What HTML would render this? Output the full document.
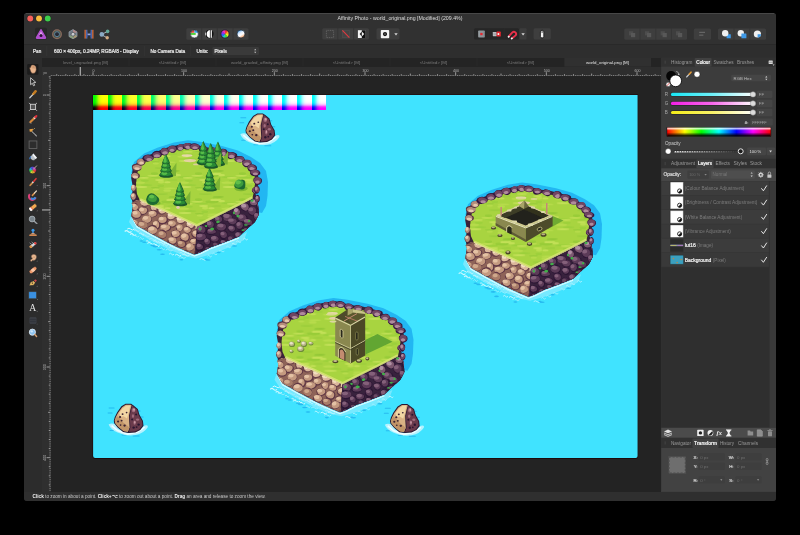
<!DOCTYPE html>
<html><head><meta charset="utf-8"><title>Affinity Photo</title>
<style>
*{margin:0;padding:0;box-sizing:border-box}
html,body{width:800px;height:535px;background:#000;overflow:hidden;font-family:"Liberation Sans",sans-serif;}
.a{position:absolute}
#win{position:absolute;left:24px;top:13px;width:752px;height:487.6px;background:#2b2b2b;border-radius:3px;overflow:hidden}
#abs{position:absolute;left:0;top:0;width:800px;height:535px;filter:blur(.3px)}
.t{position:absolute;white-space:nowrap;color:#d8d8d8;font-size:5px;line-height:6px}
svg{position:absolute;overflow:visible}
</style></head><body>
<div id="win"></div>
<div id="abs">

<div class="a" style="left:24px;top:13px;width:752px;height:31px;background:#313131;border-radius:3px 3px 0 0"></div>
<div class="a" style="left:26px;top:13px;width:748px;height:0.7px;background:#474747;"></div>
<div class="a" style="left:24px;top:44px;width:752px;height:13.5px;background:#2e2e2e;"></div>
<div class="a" style="left:24px;top:43.7px;width:752px;height:0.7px;background:#292929;"></div>
<div class="a" style="left:41.6px;top:57.5px;width:620px;height:9px;background:#242424;"></div>
<div class="a" style="left:24px;top:57.5px;width:17.6px;height:434.1px;background:#2c2c2c;"></div>
<div class="a" style="left:41.6px;top:66.5px;width:620px;height:9.3px;background:#2e2e2e;"></div>
<div class="a" style="left:41.6px;top:66.5px;width:8.9px;height:425.1px;background:#2f2f2f;"></div>
<div class="a" style="left:50.5px;top:75.8px;width:611px;height:415.8px;background:#232323;"></div>
<div class="a" style="left:661px;top:57.5px;width:115px;height:434.1px;background:#3b3b3b;"></div>
<div class="a" style="left:24px;top:491.6px;width:752px;height:9px;background:#2f2f2f;border-radius:0 0 3px 3px"></div>
<svg width="800" height="535" viewBox="0 0 800 535" style="left:0;top:0">
<defs><clipPath id="imgclip"><path d="M93.1 95.1H637.6V455.9Q637.6 457.9 635.6 457.9H95.1Q93.1 457.9 93.1 455.9Z"/></clipPath>
<linearGradient id="lr" x1="0" x2="1" y1="0" y2="0"><stop offset="0.03" stop-color="#000"/><stop offset="0.97" stop-color="#f00"/></linearGradient>
<linearGradient id="lg" x1="0" x2="0" y1="1" y2="0"><stop offset="0.03" stop-color="#000"/><stop offset="0.97" stop-color="#0f0"/></linearGradient>
<pattern id="grs" width="44" height="26" patternUnits="userSpaceOnUse"><ellipse cx="35.2" cy="8.5" rx="3.8" ry="1.3" fill="#b8dc4c"/><ellipse cx="12.9" cy="-1.2" rx="4.0" ry="1.0" fill="#9cd03a"/><ellipse cx="12.9" cy="24.8" rx="4.0" ry="1.0" fill="#9cd03a"/><ellipse cx="29.1" cy="0.1" rx="3.1" ry="1.3" fill="#bcde50"/><ellipse cx="29.1" cy="26.1" rx="3.1" ry="1.3" fill="#bcde50"/><ellipse cx="7.6" cy="21.1" rx="7.0" ry="0.9" fill="#9cd03a"/><ellipse cx="51.6" cy="21.1" rx="7.0" ry="0.9" fill="#9cd03a"/><ellipse cx="14.6" cy="3.1" rx="6.1" ry="1.0" fill="#9cd03a"/><ellipse cx="9.0" cy="5.0" rx="6.4" ry="1.1" fill="#c2e056"/><ellipse cx="-4.3" cy="15.5" rx="3.3" ry="1.2" fill="#9cd03a"/><ellipse cx="39.7" cy="15.5" rx="3.3" ry="1.2" fill="#9cd03a"/><ellipse cx="-0.8" cy="19.2" rx="4.3" ry="0.7" fill="#94c836"/><ellipse cx="43.2" cy="19.2" rx="4.3" ry="0.7" fill="#94c836"/><ellipse cx="25.4" cy="21.5" rx="6.9" ry="0.8" fill="#9cd03a"/><ellipse cx="27.6" cy="23.9" rx="4.4" ry="1.0" fill="#c2e056"/><ellipse cx="-7.6" cy="20.1" rx="6.0" ry="1.3" fill="#98cc38"/><ellipse cx="36.4" cy="20.1" rx="6.0" ry="1.3" fill="#98cc38"/><ellipse cx="23.4" cy="5.7" rx="4.6" ry="0.7" fill="#98cc38"/><ellipse cx="35.4" cy="0.3" rx="3.2" ry="1.0" fill="#c2e056"/><ellipse cx="35.4" cy="26.3" rx="3.2" ry="1.0" fill="#c2e056"/><ellipse cx="32.8" cy="19.8" rx="3.5" ry="1.3" fill="#98cc38"/><ellipse cx="-4.2" cy="17.9" rx="5.6" ry="1.2" fill="#c2e056"/><ellipse cx="39.8" cy="17.9" rx="5.6" ry="1.2" fill="#c2e056"/><ellipse cx="28.8" cy="3.8" rx="3.4" ry="1.2" fill="#9cd03a"/><ellipse cx="-3.7" cy="-2.0" rx="5.3" ry="0.6" fill="#98cc38"/><ellipse cx="-3.7" cy="24.0" rx="5.3" ry="0.6" fill="#98cc38"/><ellipse cx="40.3" cy="-2.0" rx="5.3" ry="0.6" fill="#98cc38"/><ellipse cx="40.3" cy="24.0" rx="5.3" ry="0.6" fill="#98cc38"/><ellipse cx="21.2" cy="19.8" rx="5.8" ry="0.8" fill="#c2e056"/><ellipse cx="29.3" cy="12.1" rx="6.9" ry="0.7" fill="#98cc38"/><ellipse cx="-6.4" cy="6.2" rx="6.1" ry="0.7" fill="#b8dc4c"/><ellipse cx="37.6" cy="6.2" rx="6.1" ry="0.7" fill="#b8dc4c"/><ellipse cx="7.2" cy="0.7" rx="5.7" ry="1.1" fill="#b8dc4c"/><ellipse cx="7.2" cy="26.7" rx="5.7" ry="1.1" fill="#b8dc4c"/><ellipse cx="51.2" cy="0.7" rx="5.7" ry="1.1" fill="#b8dc4c"/><ellipse cx="51.2" cy="26.7" rx="5.7" ry="1.1" fill="#b8dc4c"/><ellipse cx="-1.5" cy="15.0" rx="5.4" ry="0.9" fill="#94c836"/><ellipse cx="42.5" cy="15.0" rx="5.4" ry="0.9" fill="#94c836"/><ellipse cx="11.8" cy="21.8" rx="4.9" ry="0.9" fill="#c2e056"/><ellipse cx="23.8" cy="7.5" rx="3.1" ry="0.9" fill="#b8dc4c"/><ellipse cx="1.6" cy="19.1" rx="3.4" ry="1.2" fill="#c2e056"/><ellipse cx="45.6" cy="19.1" rx="3.4" ry="1.2" fill="#c2e056"/><ellipse cx="22.5" cy="17.6" rx="3.7" ry="1.3" fill="#98cc38"/></pattern>
<filter id="soft" x="-5%" y="-5%" width="110%" height="110%"><feGaussianBlur stdDeviation="0.45"/></filter></defs>
<path d="M92.6 94.6H638.1V456.4Q638.1 458.7 635.8 458.7H94.9Q92.6 458.7 92.6 456.4Z" fill="#1a0608"/>
<g clip-path="url(#imgclip)">
<rect x="92" y="94" width="547" height="366" fill="#40e3ff"/>
<g filter="url(#soft)">
<g id="isl">
<g transform="translate(0,0)">
<polygon points="131.0,174.0 134.0,162.0 144.0,153.5 158.0,147.5 174.0,142.5 188.0,140.2 202.0,142.0 222.0,146.0 238.0,150.5 251.0,157.0 260.0,163.0 266.0,171.0 268.0,182.0 267.5,196.0 266.0,206.0 262.0,213.0 257.0,212.0 255.0,200.0 255.0,180.0 240.0,160.0 200.0,150.0 160.0,153.0 140.0,163.0" fill="#22b6f2" />
<path d="M131 216 L129 222 L135 231 L150 240 L168 249 L186 256.5 L196 258.5 L212 254 L230 247 L244 240 L247 232 L239 236.5 L225 242 L210 247.5 L195 254.5 L175 246 L152 234 L137 225.5Z" fill="#9cedfe" opacity="0.6"/>
<path d="M127.2 229.1 q1.8 -1.8 3.6 0 t3.6 0" fill="none" stroke="#d0f9ff" stroke-width="1.0"/>
<path d="M124.7 231.5 q1.7 -1.8 3.4 0 t3.4 0" fill="none" stroke="#d0f9ff" stroke-width="1.1"/>
<path d="M134.4 230.7 q1.3 -1.8 2.5 0 t2.5 0" fill="none" stroke="#b4f3ff" stroke-width="1.0"/>
<path d="M130.2 234.6 q1.5 -1.8 3.0 0 t3.0 0" fill="none" stroke="#d0f9ff" stroke-width="1.2"/>
<path d="M139.4 233.9 q1.1 -1.8 2.3 0 t2.3 0" fill="none" stroke="#b4f3ff" stroke-width="1.1"/>
<path d="M132.3 236.0 q1.8 -1.8 3.5 0 t3.5 0" fill="none" stroke="#a0effe" stroke-width="0.8"/>
<path d="M142.7 236.0 q1.7 -1.8 3.5 0 t3.5 0" fill="none" stroke="#a0effe" stroke-width="0.9"/>
<path d="M139.5 238.3 q1.1 -1.8 2.1 0 t2.1 0" fill="none" stroke="#a0effe" stroke-width="0.9"/>
<path d="M149.4 239.2 q1.7 -1.8 3.5 0 t3.5 0" fill="none" stroke="#a0effe" stroke-width="0.9"/>
<path d="M146.1 241.5 q1.0 -1.8 2.1 0 t2.1 0" fill="none" stroke="#a0effe" stroke-width="1.1"/>
<path d="M153.5 241.4 q1.3 -1.8 2.7 0 t2.7 0" fill="none" stroke="#b4f3ff" stroke-width="1.1"/>
<path d="M147.4 243.4 q1.8 -1.8 3.6 0 t3.6 0" fill="none" stroke="#d0f9ff" stroke-width="1.0"/>
<path d="M159.2 243.1 q1.5 -1.8 3.0 0 t3.0 0" fill="none" stroke="#b4f3ff" stroke-width="1.1"/>
<path d="M154.3 245.5 q1.3 -1.8 2.6 0 t2.6 0" fill="none" stroke="#d0f9ff" stroke-width="1.1"/>
<path d="M163.3 245.1 q1.1 -1.8 2.2 0 t2.2 0" fill="none" stroke="#b4f3ff" stroke-width="1.0"/>
<path d="M160.3 248.8 q1.2 -1.8 2.3 0 t2.3 0" fill="none" stroke="#a0effe" stroke-width="0.9"/>
<path d="M169.3 247.3 q1.6 -1.8 3.1 0 t3.1 0" fill="none" stroke="#b4f3ff" stroke-width="1.0"/>
<path d="M165.7 250.1 q1.8 -1.8 3.5 0 t3.5 0" fill="none" stroke="#a0effe" stroke-width="0.9"/>
<path d="M175.3 249.8 q1.3 -1.8 2.7 0 t2.7 0" fill="none" stroke="#a0effe" stroke-width="1.1"/>
<path d="M169.2 254.1 q1.2 -1.8 2.4 0 t2.4 0" fill="none" stroke="#d0f9ff" stroke-width="0.8"/>
<path d="M179.6 253.2 q1.3 -1.8 2.7 0 t2.7 0" fill="none" stroke="#b4f3ff" stroke-width="0.8"/>
<path d="M175.1 255.2 q1.5 -1.8 3.1 0 t3.1 0" fill="none" stroke="#d0f9ff" stroke-width="1.0"/>
<path d="M182.4 255.1 q1.7 -1.8 3.5 0 t3.5 0" fill="none" stroke="#b4f3ff" stroke-width="1.1"/>
<path d="M178.5 257.4 q1.8 -1.8 3.6 0 t3.6 0" fill="none" stroke="#a0effe" stroke-width="0.9"/>
<path d="M199.7 259.4 q1.7 -1.6 3.4 0 t3.4 0" fill="none" stroke="#b0f2ff" stroke-width="1.0"/>
<path d="M207.5 256.1 q1.1 -1.6 2.1 0 t2.1 0" fill="none" stroke="#b0f2ff" stroke-width="0.8"/>
<path d="M212.3 254.0 q1.2 -1.6 2.4 0 t2.4 0" fill="none" stroke="#9ceefe" stroke-width="0.9"/>
<path d="M219.0 251.1 q1.4 -1.6 2.7 0 t2.7 0" fill="none" stroke="#9ceefe" stroke-width="0.9"/>
<path d="M226.3 246.9 q1.2 -1.6 2.3 0 t2.3 0" fill="none" stroke="#9ceefe" stroke-width="1.0"/>
<path d="M232.0 244.0 q1.2 -1.6 2.3 0 t2.3 0" fill="none" stroke="#b0f2ff" stroke-width="1.0"/>
<path d="M236.3 241.7 q1.2 -1.6 2.4 0 t2.4 0" fill="none" stroke="#b0f2ff" stroke-width="0.9"/>
<path d="M243.4 239.1 q1.1 -1.6 2.2 0 t2.2 0" fill="none" stroke="#ccf8ff" stroke-width="0.8"/>
<polyline points="132.5,218 137,227 152,235.5 165,242.5 175,247.5 186,252.5 194.5,256 201,253.5 210,249 225,243.5 239,238" fill="none" stroke="#dcfbff" stroke-width="1.1" stroke-linejoin="round"/>
<ellipse cx="159.2" cy="249.7" rx="2.6" ry="0.8" fill="#27baf0"/>
<ellipse cx="162.5" cy="254.2" rx="2.4" ry="0.8" fill="#27baf0"/>
<ellipse cx="181.4" cy="259.8" rx="2.0" ry="0.8" fill="#27baf0"/>
<ellipse cx="152.7" cy="245.5" rx="2.4" ry="0.8" fill="#27baf0"/>
<ellipse cx="141.5" cy="241.0" rx="2.0" ry="0.8" fill="#27baf0"/>
<ellipse cx="144.4" cy="242.2" rx="2.2" ry="0.8" fill="#27baf0"/>
<ellipse cx="155.3" cy="246.6" rx="2.9" ry="0.8" fill="#27baf0"/>
<ellipse cx="234.5" cy="246.0" rx="2.6" ry="0.8" fill="#27baf0"/>
<ellipse cx="218.7" cy="252.5" rx="2.0" ry="0.8" fill="#27baf0"/>
<ellipse cx="208.1" cy="260.0" rx="2.5" ry="0.8" fill="#27baf0"/>
<ellipse cx="206.2" cy="259.4" rx="1.5" ry="0.8" fill="#27baf0"/>
<polygon points="131.2,178.0 133.0,168.0 139.0,160.0 147.0,156.0 156.0,152.0 163.0,149.0 170.5,146.5 179.0,145.0 187.5,143.4 194.0,144.5 199.0,145.6 207.0,147.5 216.0,148.5 225.5,151.0 233.0,153.0 240.0,157.5 246.0,160.0 251.0,165.0 256.0,169.0 258.0,175.0 259.0,181.5 257.0,189.0 255.0,196.0 258.0,205.0 259.0,214.0 255.0,222.0 247.0,229.0 239.0,236.5 225.0,242.0 210.0,247.5 201.0,252.0 194.0,254.5 186.0,251.0 175.0,246.0 165.0,241.0 152.0,234.0 137.0,225.5 131.2,216.0 133.0,206.0 131.5,197.0 133.0,188.0" fill="#3a2238" />
<clipPath id="lc1"><polygon points="131.4,203 136,200.5 140,200 152,204.5 168,211.5 183,218.5 197,225 195,254.5 186,251 175,246 165,241 152,234 137,225.5 131.2,216 133,206"/></clipPath>
<clipPath id="rc1"><polygon points="197,225 210,218.5 225,211 240,203.5 252.5,197 256,194 258,205 259,214 255,222 247,229 239,236.5 225,242 210,247.5 201,252 195,254.5"/></clipPath>
<clipPath id="gr1"><polygon points="136.8,176 138.5,168 143,162.5 150,159 158,155.5 166,152.5 173,150 181,148.5 188,147.5 195,148 203,150 212,151.5 222,153.5 230,156 238,160 245,163.5 250,168 253.5,173 255.5,181 254,190 252.5,198.5 240,205 225,212.5 210,220 197,226.5 183,220 168,213 152,206 140,200.5 137,194 136,186"/></clipPath>
<polygon points="131.4,203.0 136.0,200.5 140.0,200.0 152.0,204.5 168.0,211.5 183.0,218.5 197.0,225.0 195.0,254.5 186.0,251.0 175.0,246.0 165.0,241.0 152.0,234.0 137.0,225.5 131.2,216.0 133.0,206.0" fill="#8e6458" />
<g clip-path="url(#lc1)">
<path d="M139.6 196.3Q140.2 198.4 139.0 200.0Q137.8 201.6 135.5 201.5Q133.1 201.5 132.2 199.6Q131.2 197.7 132.4 195.6Q133.5 193.5 136.2 193.9Q139.0 194.2 139.6 196.3Z" fill="#6a4048"/>
<path d="M139.2 197.7Q139.6 199.3 137.8 200.3Q136.1 201.3 134.2 200.5Q132.2 199.7 132.1 198.0Q131.9 196.2 133.7 195.4Q135.5 194.5 137.2 195.3Q138.8 196.1 139.2 197.7Z" fill="#dcb89c"/>
<path d="M136.9 195.9Q138.2 196.9 136.8 197.7Q135.4 198.5 133.7 198.3Q132.0 198.1 132.1 196.8Q132.2 195.5 134.0 195.2Q135.7 194.9 136.9 195.9Z" fill="#f2dcc0"/>
<path d="M150.2 203.1Q150.2 205.2 147.5 206.3Q144.7 207.5 142.4 205.9Q140.1 204.4 139.8 202.1Q139.5 199.7 142.7 199.0Q145.8 198.3 148.0 199.6Q150.2 201.0 150.2 203.1Z" fill="#6a4048"/>
<path d="M149.2 202.1Q149.5 203.7 147.7 204.9Q145.8 206.1 143.2 205.5Q140.5 204.8 140.2 202.8Q139.9 200.9 142.3 200.1Q144.6 199.2 146.8 199.9Q148.9 200.5 149.2 202.1Z" fill="#dcb89c"/>
<path d="M146.9 200.6Q147.9 201.9 146.0 202.6Q144.1 203.2 142.6 202.7Q141.0 202.1 141.3 201.0Q141.6 199.9 143.8 199.6Q145.9 199.3 146.9 200.6Z" fill="#f2dcc0"/>
<path d="M157.3 207.8Q156.5 210.1 154.6 210.9Q152.7 211.8 150.9 209.9Q149.1 208.1 149.8 205.1Q150.6 202.2 152.9 202.0Q155.2 201.7 156.7 203.6Q158.2 205.4 157.3 207.8Z" fill="#6a4048"/>
<path d="M157.0 207.2Q156.9 209.4 155.1 210.4Q153.2 211.4 151.7 209.7Q150.3 208.1 150.7 206.0Q151.1 203.8 152.8 202.7Q154.4 201.5 155.7 203.2Q157.0 204.9 157.0 207.2Z" fill="#dcb89c"/>
<path d="M155.1 205.1Q155.1 206.7 153.7 207.0Q152.2 207.4 151.4 206.3Q150.5 205.2 151.3 203.8Q152.0 202.5 153.5 203.0Q155.0 203.5 155.1 205.1Z" fill="#f2dcc0"/>
<path d="M166.2 211.5Q165.7 213.5 163.2 214.5Q160.6 215.4 158.4 213.7Q156.2 212.0 156.8 209.5Q157.4 207.0 160.3 206.9Q163.3 206.9 165.0 208.2Q166.7 209.6 166.2 211.5Z" fill="#6a4048"/>
<path d="M166.0 210.6Q166.3 212.3 164.1 213.1Q161.9 213.9 160.2 212.9Q158.5 211.9 158.4 210.3Q158.4 208.7 160.2 207.5Q162.1 206.3 163.9 207.6Q165.8 208.8 166.0 210.6Z" fill="#dcb89c"/>
<path d="M163.7 209.5Q163.5 210.9 161.5 211.1Q159.5 211.4 158.8 210.3Q158.1 209.2 159.1 208.4Q160.1 207.5 162.0 207.9Q163.9 208.2 163.7 209.5Z" fill="#f2dcc0"/>
<path d="M175.6 217.9Q173.8 219.8 171.2 220.4Q168.5 221.1 167.0 218.8Q165.6 216.5 167.1 214.5Q168.7 212.5 171.1 212.3Q173.6 212.0 175.5 214.0Q177.3 215.9 175.6 217.9Z" fill="#6a4048"/>
<path d="M175.1 215.4Q175.3 217.4 173.5 218.4Q171.7 219.4 169.4 219.1Q167.0 218.7 167.4 216.7Q167.7 214.7 169.1 213.3Q170.5 212.0 172.7 212.7Q175.0 213.4 175.1 215.4Z" fill="#dcb89c"/>
<path d="M172.5 214.8Q173.1 216.1 171.3 216.5Q169.4 216.9 168.3 216.0Q167.1 215.1 167.7 213.7Q168.4 212.3 170.2 212.9Q171.9 213.5 172.5 214.8Z" fill="#f2dcc0"/>
<path d="M185.6 217.8Q186.3 220.5 184.7 222.6Q183.1 224.7 180.5 224.1Q177.8 223.6 176.6 221.4Q175.3 219.3 176.7 216.7Q178.1 214.1 181.6 214.6Q185.0 215.0 185.6 217.8Z" fill="#6a4048"/>
<path d="M185.2 218.8Q186.1 220.9 184.0 222.0Q181.9 223.2 179.5 223.0Q177.1 222.8 176.9 220.8Q176.6 218.7 178.1 217.2Q179.5 215.7 181.9 216.2Q184.3 216.7 185.2 218.8Z" fill="#dcb89c"/>
<path d="M182.2 217.9Q183.4 219.2 181.5 219.9Q179.6 220.7 177.6 220.0Q175.6 219.4 176.5 217.9Q177.3 216.4 179.2 216.6Q181.0 216.7 182.2 217.9Z" fill="#f2dcc0"/>
<path d="M195.8 224.1Q196.1 227.2 193.4 228.8Q190.8 230.4 188.4 228.9Q186.0 227.3 185.7 224.5Q185.4 221.7 187.8 220.4Q190.2 219.1 192.9 220.1Q195.5 221.0 195.8 224.1Z" fill="#6a4048"/>
<path d="M194.5 224.3Q194.4 226.6 192.3 227.8Q190.1 228.9 188.2 227.4Q186.4 226.0 186.4 223.8Q186.5 221.6 188.6 220.4Q190.6 219.2 192.6 220.6Q194.5 222.1 194.5 224.3Z" fill="#dcb89c"/>
<path d="M191.6 221.7Q192.3 223.2 191.0 224.5Q189.7 225.7 188.2 224.8Q186.7 223.8 186.8 222.3Q186.8 220.9 188.9 220.5Q190.9 220.1 191.6 221.7Z" fill="#f2dcc0"/>
<path d="M204.6 227.0Q206.1 228.9 204.1 230.5Q202.1 232.1 199.3 232.0Q196.4 231.8 195.4 229.7Q194.3 227.6 196.2 226.0Q198.1 224.5 200.6 224.9Q203.1 225.2 204.6 227.0Z" fill="#6a4048"/>
<path d="M204.2 227.7Q204.8 229.4 202.7 230.2Q200.6 231.1 198.0 230.9Q195.3 230.6 195.2 228.6Q195.1 226.6 197.1 225.1Q199.1 223.6 201.3 224.8Q203.5 225.9 204.2 227.7Z" fill="#dcb89c"/>
<path d="M201.0 225.9Q201.7 227.1 200.6 228.2Q199.6 229.4 197.6 228.7Q195.6 228.0 195.6 226.6Q195.5 225.2 197.9 224.9Q200.2 224.7 201.0 225.9Z" fill="#f2dcc0"/>
<path d="M138.3 208.7Q138.0 211.1 135.3 211.5Q132.6 211.9 131.2 209.7Q129.9 207.6 131.0 205.7Q132.1 203.8 134.2 203.2Q136.3 202.7 137.4 204.5Q138.5 206.3 138.3 208.7Z" fill="#5e3644"/>
<path d="M137.9 205.9Q138.7 207.7 137.2 209.3Q135.7 210.9 133.9 209.9Q132.1 208.9 131.6 207.3Q131.1 205.8 132.4 204.7Q133.6 203.6 135.4 203.9Q137.1 204.2 137.9 205.9Z" fill="#c49a80"/>
<path d="M135.8 205.6Q135.4 206.9 133.9 207.3Q132.4 207.6 131.5 206.5Q130.7 205.4 131.8 204.4Q132.9 203.4 134.5 203.8Q136.2 204.3 135.8 205.6Z" fill="#e4c2a4"/>
<path d="M147.7 212.1Q146.1 214.2 143.6 215.1Q141.1 216.0 139.1 214.0Q137.1 211.9 138.3 209.4Q139.5 206.9 142.3 206.5Q145.1 206.2 147.2 208.1Q149.3 210.0 147.7 212.1Z" fill="#5e3644"/>
<path d="M147.2 210.5Q146.7 212.6 144.9 213.6Q143.0 214.5 140.9 213.6Q138.9 212.8 138.9 210.7Q138.9 208.6 141.0 207.8Q143.1 207.1 145.4 207.8Q147.8 208.4 147.2 210.5Z" fill="#c49a80"/>
<path d="M144.2 209.6Q144.3 210.9 142.6 211.2Q141.0 211.5 139.7 210.5Q138.4 209.5 139.6 208.2Q140.7 206.9 142.4 207.6Q144.1 208.3 144.2 209.6Z" fill="#e4c2a4"/>
<path d="M157.3 215.1Q155.9 216.9 153.5 217.2Q151.0 217.4 149.1 216.0Q147.2 214.6 148.2 212.6Q149.2 210.7 152.2 209.9Q155.2 209.2 156.9 211.3Q158.6 213.3 157.3 215.1Z" fill="#5e3644"/>
<path d="M156.6 214.2Q156.1 215.8 153.9 216.6Q151.7 217.4 149.6 216.2Q147.4 215.0 148.4 213.4Q149.4 211.8 151.5 210.9Q153.6 210.1 155.3 211.4Q157.1 212.6 156.6 214.2Z" fill="#c49a80"/>
<path d="M154.3 212.9Q153.6 214.2 151.6 214.4Q149.6 214.7 148.7 213.5Q147.8 212.3 149.4 211.6Q151.0 210.8 153.0 211.3Q155.1 211.7 154.3 212.9Z" fill="#e4c2a4"/>
<path d="M167.3 218.2Q169.2 220.1 167.5 222.2Q165.7 224.3 162.5 224.5Q159.2 224.7 158.1 222.2Q156.9 219.8 158.6 218.0Q160.3 216.2 162.8 216.3Q165.4 216.4 167.3 218.2Z" fill="#5e3644"/>
<path d="M166.6 218.4Q167.1 220.3 165.7 221.7Q164.3 223.1 161.7 223.0Q159.2 222.9 158.4 220.9Q157.5 219.0 159.3 217.7Q161.2 216.5 163.7 216.5Q166.2 216.5 166.6 218.4Z" fill="#c49a80"/>
<path d="M163.4 217.7Q164.3 218.7 163.2 219.7Q162.1 220.7 160.3 220.2Q158.5 219.7 158.6 218.4Q158.8 217.2 160.7 216.9Q162.5 216.7 163.4 217.7Z" fill="#e4c2a4"/>
<path d="M175.8 223.2Q176.7 225.0 175.1 226.5Q173.5 228.0 171.2 227.6Q168.8 227.2 167.6 225.2Q166.3 223.2 168.3 221.5Q170.3 219.9 172.6 220.6Q174.8 221.4 175.8 223.2Z" fill="#5e3644"/>
<path d="M175.7 224.5Q174.7 226.2 172.8 226.5Q170.9 226.7 169.1 225.8Q167.2 224.9 167.9 223.0Q168.5 221.1 170.8 220.6Q173.2 220.0 174.9 221.5Q176.7 222.9 175.7 224.5Z" fill="#c49a80"/>
<path d="M172.9 222.8Q173.0 223.9 171.5 224.4Q170.0 224.9 169.0 224.0Q168.0 223.0 168.8 221.9Q169.6 220.8 171.2 221.3Q172.9 221.8 172.9 222.8Z" fill="#e4c2a4"/>
<path d="M182.9 229.5Q182.1 231.3 180.1 231.6Q178.1 232.0 176.7 230.3Q175.2 228.7 176.2 226.7Q177.2 224.8 179.4 224.5Q181.5 224.2 182.6 226.0Q183.7 227.7 182.9 229.5Z" fill="#5e3644"/>
<path d="M182.8 226.7Q183.0 228.6 182.0 230.1Q181.0 231.7 179.1 231.1Q177.3 230.4 176.9 228.9Q176.5 227.3 177.4 225.7Q178.3 224.0 180.5 224.4Q182.7 224.8 182.8 226.7Z" fill="#c49a80"/>
<path d="M180.5 227.3Q180.0 228.3 178.7 228.4Q177.4 228.5 176.5 227.4Q175.7 226.2 177.2 225.6Q178.6 225.0 179.8 225.6Q180.9 226.3 180.5 227.3Z" fill="#e4c2a4"/>
<path d="M191.7 230.3Q192.0 232.3 189.8 233.1Q187.7 234.0 185.7 233.0Q183.8 232.0 183.6 230.1Q183.4 228.1 185.5 226.9Q187.6 225.7 189.5 227.0Q191.4 228.2 191.7 230.3Z" fill="#5e3644"/>
<path d="M190.5 228.9Q191.4 230.2 190.3 231.6Q189.2 233.0 187.1 232.9Q184.9 232.7 183.9 231.1Q182.8 229.5 184.2 228.0Q185.7 226.5 187.6 227.0Q189.6 227.5 190.5 228.9Z" fill="#c49a80"/>
<path d="M188.5 228.3Q189.0 229.4 187.8 230.1Q186.6 230.8 185.1 230.2Q183.6 229.7 184.1 228.5Q184.6 227.4 186.3 227.3Q188.0 227.2 188.5 228.3Z" fill="#e4c2a4"/>
<path d="M202.0 234.3Q201.8 236.7 199.0 237.7Q196.2 238.8 193.4 237.4Q190.6 235.9 191.5 233.5Q192.4 231.0 195.1 229.6Q197.7 228.3 200.0 230.1Q202.2 232.0 202.0 234.3Z" fill="#5e3644"/>
<path d="M200.8 235.2Q200.1 237.1 197.3 237.1Q194.6 237.1 193.1 235.5Q191.5 233.8 192.8 232.1Q194.0 230.4 196.5 230.2Q199.0 230.0 200.3 231.6Q201.5 233.2 200.8 235.2Z" fill="#c49a80"/>
<path d="M198.3 231.8Q198.5 233.2 196.8 234.0Q195.2 234.7 193.6 233.8Q192.1 232.9 193.0 231.8Q193.8 230.6 196.0 230.5Q198.2 230.4 198.3 231.8Z" fill="#e4c2a4"/>
<path d="M141.6 214.9Q141.7 217.5 139.0 218.5Q136.3 219.5 133.7 218.2Q131.2 216.9 131.9 214.5Q132.6 212.1 134.8 210.8Q137.0 209.6 139.3 210.9Q141.6 212.2 141.6 214.9Z" fill="#5e3644"/>
<path d="M140.8 214.6Q141.0 216.7 138.6 217.4Q136.3 218.2 134.0 217.2Q131.7 216.3 132.2 214.2Q132.8 212.1 134.8 210.9Q136.9 209.6 138.7 211.1Q140.6 212.5 140.8 214.6Z" fill="#c49a80"/>
<path d="M137.6 213.2Q137.3 214.4 135.7 214.6Q134.1 214.9 132.8 213.7Q131.5 212.6 133.0 211.4Q134.5 210.2 136.2 211.1Q137.8 212.0 137.6 213.2Z" fill="#e4c2a4"/>
<path d="M151.4 217.5Q152.8 219.7 151.1 221.5Q149.3 223.4 146.2 223.8Q143.1 224.3 142.1 221.7Q141.0 219.2 142.7 217.3Q144.4 215.5 147.2 215.4Q150.1 215.4 151.4 217.5Z" fill="#5e3644"/>
<path d="M151.1 217.7Q151.9 219.8 150.4 221.5Q148.8 223.2 146.1 222.9Q143.3 222.6 142.2 220.6Q141.1 218.6 143.0 217.0Q144.9 215.5 147.6 215.6Q150.3 215.6 151.1 217.7Z" fill="#c49a80"/>
<path d="M148.1 218.2Q147.5 219.5 145.7 219.7Q143.8 219.9 143.0 218.8Q142.3 217.6 143.6 216.6Q144.9 215.6 146.8 216.3Q148.7 216.9 148.1 218.2Z" fill="#e4c2a4"/>
<path d="M160.2 224.0Q161.1 226.4 159.3 228.4Q157.5 230.4 155.0 229.6Q152.5 228.8 152.3 226.2Q152.0 223.6 153.6 221.9Q155.1 220.2 157.2 220.9Q159.4 221.6 160.2 224.0Z" fill="#5e3644"/>
<path d="M159.0 226.3Q158.5 228.2 156.4 228.5Q154.3 228.8 153.3 226.9Q152.4 225.0 153.0 223.0Q153.5 220.9 155.7 220.7Q157.9 220.6 158.7 222.4Q159.5 224.3 159.0 226.3Z" fill="#c49a80"/>
<path d="M157.0 222.5Q157.3 223.9 156.2 224.7Q155.2 225.4 153.9 224.8Q152.7 224.2 153.0 222.9Q153.4 221.6 155.1 221.4Q156.8 221.1 157.0 222.5Z" fill="#e4c2a4"/>
<path d="M170.6 229.4Q168.8 231.5 165.9 231.5Q162.9 231.6 161.3 229.8Q159.7 228.0 160.9 226.0Q162.1 224.0 164.9 224.1Q167.8 224.2 170.0 225.8Q172.3 227.4 170.6 229.4Z" fill="#5e3644"/>
<path d="M169.9 228.3Q168.9 230.1 166.3 230.8Q163.7 231.4 161.7 230.0Q159.6 228.5 160.5 226.5Q161.3 224.6 164.1 224.3Q166.8 224.0 168.8 225.3Q170.9 226.5 169.9 228.3Z" fill="#c49a80"/>
<path d="M166.5 226.1Q166.9 227.2 165.3 227.7Q163.8 228.3 161.9 227.7Q160.0 227.0 161.0 225.8Q162.0 224.6 164.1 224.8Q166.1 225.0 166.5 226.1Z" fill="#e4c2a4"/>
<path d="M180.7 234.6Q180.3 236.9 177.6 237.7Q174.9 238.5 172.7 237.1Q170.6 235.7 170.8 233.5Q170.9 231.3 173.6 230.5Q176.3 229.8 178.7 231.0Q181.0 232.3 180.7 234.6Z" fill="#5e3644"/>
<path d="M179.7 234.7Q178.8 236.4 176.4 237.1Q173.9 237.7 172.7 236.1Q171.5 234.5 171.9 233.0Q172.3 231.4 174.7 230.6Q177.1 229.8 178.8 231.4Q180.5 233.0 179.7 234.7Z" fill="#c49a80"/>
<path d="M176.8 233.0Q176.8 234.2 174.8 234.6Q172.8 235.0 171.9 233.8Q171.0 232.7 172.1 231.6Q173.2 230.5 175.0 231.1Q176.8 231.8 176.8 233.0Z" fill="#e4c2a4"/>
<path d="M189.9 236.4Q190.4 239.0 188.4 240.9Q186.4 242.8 183.4 242.1Q180.5 241.4 180.0 238.5Q179.6 235.6 181.9 234.1Q184.2 232.6 186.8 233.2Q189.4 233.8 189.9 236.4Z" fill="#5e3644"/>
<path d="M188.4 238.8Q187.7 240.7 185.4 240.7Q183.2 240.6 181.4 239.0Q179.5 237.4 180.9 235.3Q182.3 233.1 184.8 233.2Q187.3 233.2 188.2 235.1Q189.2 236.9 188.4 238.8Z" fill="#c49a80"/>
<path d="M186.4 236.0Q185.7 237.4 183.9 237.8Q182.2 238.2 181.4 236.8Q180.6 235.3 182.0 234.2Q183.5 233.0 185.3 233.8Q187.2 234.7 186.4 236.0Z" fill="#e4c2a4"/>
<path d="M197.9 242.0Q197.7 244.0 195.8 244.8Q193.8 245.6 191.7 244.7Q189.7 243.7 189.5 241.4Q189.4 239.0 191.9 238.0Q194.4 236.9 196.3 238.5Q198.1 240.0 197.9 242.0Z" fill="#5e3644"/>
<path d="M197.0 240.1Q197.7 241.7 196.7 243.1Q195.7 244.5 193.9 244.3Q192.0 244.0 190.6 242.7Q189.2 241.3 190.7 239.9Q192.1 238.4 194.2 238.4Q196.4 238.5 197.0 240.1Z" fill="#c49a80"/>
<path d="M195.1 240.1Q195.7 241.2 194.3 241.8Q192.9 242.5 191.6 241.8Q190.4 241.2 190.9 240.1Q191.4 239.1 192.9 239.1Q194.5 239.0 195.1 240.1Z" fill="#e4c2a4"/>
<path d="M205.2 247.3Q204.5 249.3 202.4 250.0Q200.3 250.7 198.9 249.0Q197.5 247.2 197.9 244.9Q198.3 242.6 200.6 242.4Q202.8 242.3 204.3 243.7Q205.8 245.2 205.2 247.3Z" fill="#5e3644"/>
<path d="M204.6 245.7Q205.4 247.3 203.8 248.3Q202.2 249.2 200.6 248.6Q199.1 247.9 198.6 246.3Q198.2 244.7 199.5 243.4Q200.9 242.1 202.4 243.1Q203.9 244.0 204.6 245.7Z" fill="#c49a80"/>
<path d="M202.3 245.0Q202.3 245.9 201.1 246.5Q199.8 247.1 198.7 246.1Q197.6 245.0 198.8 244.1Q199.9 243.1 201.1 243.6Q202.3 244.0 202.3 245.0Z" fill="#e4c2a4"/>
<path d="M137.4 222.5Q137.6 224.6 136.2 226.0Q134.8 227.3 132.5 227.1Q130.2 226.8 129.8 224.0Q129.4 221.2 131.5 220.0Q133.5 218.8 135.4 219.6Q137.2 220.5 137.4 222.5Z" fill="#5e3644"/>
<path d="M137.7 223.3Q137.3 225.5 135.5 226.1Q133.7 226.7 132.2 225.6Q130.8 224.5 130.9 222.5Q131.0 220.5 132.8 219.9Q134.5 219.3 136.2 220.2Q138.0 221.1 137.7 223.3Z" fill="#c49a80"/>
<path d="M135.5 221.4Q135.7 223.0 134.2 223.4Q132.8 223.9 131.9 223.0Q130.9 222.1 131.4 220.7Q131.8 219.4 133.5 219.6Q135.3 219.9 135.5 221.4Z" fill="#e4c2a4"/>
<path d="M147.3 224.4Q147.6 226.7 145.7 228.3Q143.8 229.9 141.0 229.3Q138.3 228.7 137.6 226.3Q137.0 223.8 139.2 222.3Q141.5 220.7 144.2 221.4Q147.0 222.1 147.3 224.4Z" fill="#5e3644"/>
<path d="M147.5 224.8Q147.7 227.0 145.3 228.0Q143.0 228.9 140.4 228.3Q137.9 227.7 137.6 225.4Q137.4 223.2 139.8 222.1Q142.2 221.0 144.7 221.8Q147.3 222.5 147.5 224.8Z" fill="#a87c68"/>
<path d="M144.3 223.9Q144.6 225.4 142.6 225.8Q140.5 226.2 139.3 225.2Q138.0 224.2 138.9 222.8Q139.8 221.5 141.9 222.0Q144.1 222.4 144.3 223.9Z" fill="#cfa88c"/>
<path d="M157.1 228.4Q157.4 231.0 155.9 233.3Q154.5 235.6 151.2 235.1Q147.9 234.6 147.1 231.7Q146.3 228.8 148.4 226.6Q150.6 224.5 153.7 225.1Q156.8 225.7 157.1 228.4Z" fill="#5e3644"/>
<path d="M156.5 228.3Q158.2 230.1 156.6 232.1Q155.0 234.2 152.1 234.0Q149.3 233.9 148.0 231.7Q146.7 229.5 148.5 227.7Q150.2 226.0 152.6 226.2Q154.9 226.5 156.5 228.3Z" fill="#c49a80"/>
<path d="M154.3 228.0Q154.7 229.7 152.8 230.3Q150.8 230.9 149.1 230.0Q147.4 229.1 148.5 227.9Q149.7 226.6 151.7 226.5Q153.8 226.3 154.3 228.0Z" fill="#e4c2a4"/>
<path d="M166.8 234.5Q166.8 236.7 164.7 238.3Q162.5 239.9 160.3 238.4Q158.0 236.9 158.0 234.6Q157.9 232.3 160.2 230.5Q162.4 228.7 164.7 230.5Q166.9 232.3 166.8 234.5Z" fill="#5e3644"/>
<path d="M166.1 233.2Q167.1 234.9 165.8 236.6Q164.4 238.4 161.9 238.1Q159.3 237.7 158.0 235.7Q156.7 233.7 158.5 232.0Q160.3 230.2 162.7 230.9Q165.0 231.5 166.1 233.2Z" fill="#a87c68"/>
<path d="M163.7 233.5Q163.7 234.8 161.6 235.1Q159.6 235.4 159.0 234.1Q158.3 232.9 159.4 232.0Q160.5 231.0 162.1 231.6Q163.8 232.1 163.7 233.5Z" fill="#cfa88c"/>
<path d="M177.1 240.3Q177.4 242.7 175.2 244.5Q173.0 246.3 170.0 245.1Q167.0 244.0 167.2 241.5Q167.5 238.9 169.6 237.6Q171.7 236.2 174.3 237.0Q176.9 237.9 177.1 240.3Z" fill="#5e3644"/>
<path d="M176.1 242.1Q174.9 244.0 172.6 243.7Q170.3 243.4 169.2 242.0Q168.1 240.7 169.0 239.1Q169.9 237.6 172.2 237.2Q174.5 236.8 175.9 238.6Q177.3 240.3 176.1 242.1Z" fill="#c49a80"/>
<path d="M173.9 239.6Q173.7 241.1 171.7 241.1Q169.7 241.1 168.7 240.1Q167.7 239.1 168.9 238.0Q170.2 236.8 172.1 237.5Q174.1 238.2 173.9 239.6Z" fill="#e4c2a4"/>
<path d="M186.3 245.3Q185.2 247.6 182.4 248.0Q179.6 248.4 177.6 246.6Q175.5 244.9 177.0 242.9Q178.4 241.0 180.8 240.3Q183.2 239.6 185.2 241.3Q187.3 242.9 186.3 245.3Z" fill="#5e3644"/>
<path d="M185.2 244.6Q185.1 246.5 182.6 247.0Q180.2 247.4 178.6 246.1Q176.9 244.7 177.7 243.2Q178.5 241.6 180.3 241.1Q182.2 240.6 183.8 241.6Q185.4 242.7 185.2 244.6Z" fill="#a87c68"/>
<path d="M182.2 241.8Q183.0 242.9 181.8 243.7Q180.7 244.5 179.1 244.1Q177.5 243.7 177.6 242.4Q177.8 241.2 179.6 241.0Q181.4 240.8 182.2 241.8Z" fill="#cfa88c"/>
<path d="M193.7 247.8Q193.5 250.0 191.5 250.9Q189.4 251.8 187.8 250.5Q186.1 249.1 186.0 246.8Q185.9 244.5 188.2 243.3Q190.5 242.1 192.2 243.9Q193.8 245.7 193.7 247.8Z" fill="#5e3644"/>
<path d="M193.6 245.2Q194.8 247.3 193.3 249.0Q191.8 250.7 189.5 250.8Q187.3 251.0 186.5 249.0Q185.8 247.0 186.7 245.1Q187.5 243.1 190.0 243.1Q192.4 243.2 193.6 245.2Z" fill="#c49a80"/>
<path d="M190.8 244.9Q191.3 246.3 190.2 247.1Q189.2 248.0 187.5 247.6Q185.9 247.2 186.3 245.8Q186.6 244.3 188.4 243.9Q190.2 243.5 190.8 244.9Z" fill="#e4c2a4"/>
<path d="M202.9 253.7Q202.2 255.9 199.6 257.1Q197.0 258.3 195.2 256.2Q193.3 254.0 194.3 251.7Q195.2 249.5 197.6 248.9Q200.0 248.4 201.8 250.0Q203.7 251.5 202.9 253.7Z" fill="#5e3644"/>
<path d="M202.9 252.1Q203.0 254.2 201.0 255.1Q199.0 256.1 197.0 255.3Q195.0 254.6 194.8 252.7Q194.7 250.8 196.5 249.9Q198.3 249.0 200.5 249.5Q202.8 249.9 202.9 252.1Z" fill="#c49a80"/>
<path d="M199.9 250.6Q200.6 251.9 199.1 252.7Q197.6 253.4 196.1 252.7Q194.7 252.0 195.0 250.7Q195.2 249.4 197.2 249.3Q199.2 249.3 199.9 250.6Z" fill="#e4c2a4"/>
<path d="M138.9 234.8Q138.0 237.4 135.8 237.2Q133.6 237.0 132.0 235.3Q130.3 233.5 131.2 230.8Q132.2 228.1 134.5 228.3Q136.8 228.5 138.3 230.4Q139.8 232.3 138.9 234.8Z" fill="#5e3644"/>
<path d="M138.4 232.2Q138.5 234.3 137.0 235.4Q135.5 236.4 133.5 236.0Q131.5 235.6 131.6 233.3Q131.8 231.0 133.2 229.3Q134.6 227.6 136.4 228.8Q138.2 230.0 138.4 232.2Z" fill="#a87c68"/>
<path d="M136.4 231.3Q135.9 232.9 134.4 233.3Q133.0 233.8 132.1 232.4Q131.3 231.0 132.5 230.1Q133.6 229.2 135.2 229.5Q136.8 229.8 136.4 231.3Z" fill="#cfa88c"/>
<path d="M146.7 234.3Q148.0 236.8 146.0 238.4Q144.1 239.9 141.9 240.1Q139.7 240.3 139.1 237.7Q138.4 235.1 139.6 232.8Q140.9 230.5 143.2 231.2Q145.4 231.9 146.7 234.3Z" fill="#5e3644"/>
<path d="M146.1 234.1Q146.6 236.4 145.4 238.3Q144.1 240.2 142.2 239.6Q140.2 238.9 139.5 236.9Q138.9 234.9 140.0 233.0Q141.1 231.1 143.3 231.4Q145.5 231.7 146.1 234.1Z" fill="#c49a80"/>
<path d="M143.6 234.9Q142.9 236.2 141.3 236.4Q139.8 236.5 139.3 234.9Q138.8 233.3 140.3 232.4Q141.8 231.4 143.1 232.5Q144.4 233.7 143.6 234.9Z" fill="#e4c2a4"/>
<path d="M155.3 237.7Q156.7 239.5 155.1 241.1Q153.4 242.7 150.9 242.8Q148.3 243.0 147.1 241.1Q145.9 239.2 147.4 237.6Q148.9 235.9 151.3 235.9Q153.8 235.9 155.3 237.7Z" fill="#5e3644"/>
<path d="M154.6 240.1Q153.4 241.5 151.2 242.1Q149.0 242.7 147.5 241.1Q145.9 239.5 146.9 237.7Q147.9 235.9 150.4 235.9Q152.9 235.9 154.3 237.3Q155.8 238.7 154.6 240.1Z" fill="#a87c68"/>
<path d="M152.0 237.2Q152.9 238.3 151.8 239.4Q150.6 240.4 148.6 239.9Q146.5 239.3 146.9 238.0Q147.3 236.6 149.2 236.4Q151.1 236.2 152.0 237.2Z" fill="#cfa88c"/>
<path d="M164.1 244.7Q163.9 247.3 161.5 247.6Q159.1 248.0 157.5 246.7Q155.9 245.3 155.7 242.8Q155.5 240.3 158.0 239.9Q160.5 239.4 162.4 240.8Q164.3 242.2 164.1 244.7Z" fill="#5e3644"/>
<path d="M162.8 243.2Q162.8 245.0 161.5 246.5Q160.2 248.1 158.4 246.9Q156.6 245.8 156.2 243.9Q155.8 242.0 157.5 240.9Q159.3 239.8 161.1 240.6Q162.9 241.4 162.8 243.2Z" fill="#a87c68"/>
<path d="M161.1 241.9Q161.6 243.3 160.1 244.2Q158.6 245.1 157.1 244.2Q155.5 243.3 156.4 242.1Q157.2 240.9 158.9 240.6Q160.6 240.4 161.1 241.9Z" fill="#cfa88c"/>
<path d="M172.0 245.2Q173.0 248.1 171.3 250.3Q169.6 252.5 167.1 252.3Q164.7 252.1 163.4 249.4Q162.2 246.8 163.8 244.3Q165.4 241.8 168.2 242.1Q170.9 242.3 172.0 245.2Z" fill="#5e3644"/>
<path d="M171.3 248.2Q170.9 250.6 168.8 251.0Q166.7 251.3 165.2 250.0Q163.6 248.6 164.0 246.4Q164.5 244.2 166.4 243.8Q168.3 243.4 169.9 244.6Q171.6 245.7 171.3 248.2Z" fill="#a87c68"/>
<path d="M168.7 245.2Q168.7 246.8 167.5 247.4Q166.3 248.0 165.0 247.2Q163.8 246.4 164.6 245.2Q165.3 244.0 167.0 243.8Q168.7 243.7 168.7 245.2Z" fill="#cfa88c"/>
<path d="M180.0 247.9Q180.8 250.1 179.7 252.0Q178.6 253.9 176.0 253.9Q173.3 253.8 172.0 251.9Q170.6 249.9 172.2 248.2Q173.8 246.5 176.4 246.1Q179.1 245.8 180.0 247.9Z" fill="#5e3644"/>
<path d="M179.8 248.6Q180.2 250.5 178.7 251.9Q177.3 253.3 175.1 252.8Q173.0 252.3 172.4 250.6Q171.7 248.9 173.3 247.8Q174.8 246.6 177.1 246.7Q179.5 246.7 179.8 248.6Z" fill="#a87c68"/>
<path d="M177.3 249.1Q177.4 250.4 175.5 250.4Q173.5 250.4 172.4 249.3Q171.2 248.3 172.7 247.3Q174.2 246.4 175.7 247.1Q177.1 247.8 177.3 249.1Z" fill="#cfa88c"/>
<path d="M189.4 255.5Q188.9 258.5 186.5 259.5Q184.1 260.5 182.1 258.9Q180.1 257.3 180.6 254.7Q181.1 252.2 183.2 250.6Q185.3 248.9 187.6 250.8Q189.9 252.6 189.4 255.5Z" fill="#5e3644"/>
<path d="M188.3 255.1Q187.6 257.3 185.8 258.5Q184.0 259.7 182.0 258.2Q180.1 256.8 180.8 254.6Q181.5 252.4 183.3 251.5Q185.1 250.6 187.0 251.8Q188.9 252.9 188.3 255.1Z" fill="#c49a80"/>
<path d="M186.1 252.9Q186.7 254.6 185.1 255.5Q183.4 256.4 182.1 255.3Q180.8 254.3 181.5 253.0Q182.1 251.8 183.8 251.5Q185.5 251.3 186.1 252.9Z" fill="#e4c2a4"/>
<path d="M196.1 258.2Q196.0 260.4 194.2 261.5Q192.4 262.6 190.2 261.8Q188.1 261.0 188.2 258.6Q188.4 256.1 190.3 255.3Q192.2 254.4 194.2 255.2Q196.2 256.0 196.1 258.2Z" fill="#5e3644"/>
<path d="M195.3 259.7Q194.7 261.6 192.7 261.3Q190.7 261.1 189.8 259.7Q188.8 258.3 189.6 256.9Q190.4 255.4 192.2 255.0Q194.0 254.6 195.0 256.2Q196.0 257.9 195.3 259.7Z" fill="#a87c68"/>
<path d="M193.3 256.1Q194.3 257.3 193.1 258.0Q191.8 258.8 190.2 258.6Q188.7 258.4 189.2 257.2Q189.7 255.9 191.0 255.5Q192.3 255.0 193.3 256.1Z" fill="#cfa88c"/>
<path d="M204.1 262.7Q203.0 264.7 200.7 264.8Q198.3 264.9 196.5 263.1Q194.7 261.3 196.3 259.5Q198.0 257.6 200.5 256.9Q203.1 256.2 204.1 258.5Q205.1 260.8 204.1 262.7Z" fill="#5e3644"/>
<path d="M203.7 262.2Q203.3 264.1 200.9 264.6Q198.4 265.1 197.1 263.2Q195.7 261.4 196.8 259.8Q198.0 258.2 200.1 257.4Q202.2 256.5 203.2 258.4Q204.1 260.3 203.7 262.2Z" fill="#c49a80"/>
<path d="M201.4 258.8Q202.7 259.8 201.4 261.0Q200.1 262.3 198.4 261.5Q196.7 260.8 196.7 259.5Q196.8 258.1 198.4 258.0Q200.1 257.9 201.4 258.8Z" fill="#e4c2a4"/>
</g>
<polygon points="197.0,225.0 210.0,218.5 225.0,211.0 240.0,203.5 252.5,197.0 256.0,194.0 258.0,205.0 259.0,214.0 255.0,222.0 247.0,229.0 239.0,236.5 225.0,242.0 210.0,247.5 201.0,252.0 195.0,254.5" fill="#38203c" />
<g clip-path="url(#rc1)">
<path d="M206.2 229.8Q206.2 232.5 203.6 234.0Q201.0 235.5 198.8 233.8Q196.7 232.0 196.4 229.6Q196.1 227.2 198.6 225.7Q201.1 224.2 203.6 225.7Q206.2 227.2 206.2 229.8Z" fill="#2c1834"/>
<path d="M205.4 228.5Q206.1 230.7 204.2 232.4Q202.4 234.0 200.0 233.2Q197.7 232.3 196.9 230.4Q196.0 228.4 197.7 226.7Q199.4 224.9 202.0 225.6Q204.6 226.4 205.4 228.5Z" fill="#5c3a58"/>
<path d="M202.2 227.4Q202.6 228.9 201.2 230.1Q199.9 231.2 198.4 230.1Q197.0 229.0 197.3 227.7Q197.5 226.4 199.7 226.1Q201.8 225.9 202.2 227.4Z" fill="#84607a"/>
<path d="M214.6 224.6Q214.7 227.2 212.5 228.6Q210.2 230.1 208.5 228.4Q206.7 226.7 206.6 224.7Q206.5 222.7 208.3 221.6Q210.0 220.4 212.2 221.3Q214.4 222.1 214.6 224.6Z" fill="#2c1834"/>
<path d="M213.9 224.6Q213.7 226.7 211.8 227.6Q209.8 228.5 208.4 227.2Q207.0 225.9 206.8 224.1Q206.7 222.3 208.5 221.3Q210.3 220.3 212.2 221.4Q214.1 222.5 213.9 224.6Z" fill="#5c3a58"/>
<path d="M211.4 223.6Q211.3 225.0 209.5 225.3Q207.7 225.6 207.0 224.3Q206.2 223.1 207.3 222.0Q208.4 221.0 209.9 221.6Q211.5 222.2 211.4 223.6Z" fill="#84607a"/>
<path d="M222.9 219.9Q222.3 222.3 220.2 223.2Q218.0 224.1 216.0 222.9Q214.0 221.8 214.0 219.4Q214.0 217.0 216.4 215.9Q218.7 214.8 221.1 216.1Q223.5 217.4 222.9 219.9Z" fill="#2c1834"/>
<path d="M222.0 218.0Q222.8 220.0 221.3 221.6Q219.9 223.1 218.0 222.6Q216.0 222.1 214.9 220.5Q213.7 219.0 215.2 217.5Q216.6 216.0 218.9 216.0Q221.2 216.0 222.0 218.0Z" fill="#5c3a58"/>
<path d="M219.0 217.4Q220.0 218.4 219.0 219.5Q218.1 220.5 216.6 220.0Q215.2 219.5 215.0 218.3Q214.8 217.1 216.4 216.7Q218.1 216.4 219.0 217.4Z" fill="#84607a"/>
<path d="M232.1 219.3Q231.3 221.5 228.3 221.5Q225.3 221.4 224.0 219.5Q222.6 217.6 223.3 215.2Q224.0 212.8 227.1 212.9Q230.3 213.1 231.6 215.1Q232.9 217.0 232.1 219.3Z" fill="#2c1834"/>
<path d="M231.9 216.0Q232.4 217.9 230.9 219.7Q229.4 221.5 226.5 221.0Q223.6 220.4 223.4 218.4Q223.1 216.3 224.7 215.0Q226.3 213.8 228.8 213.9Q231.3 214.1 231.9 216.0Z" fill="#5c3a58"/>
<path d="M229.4 216.7Q228.5 218.1 226.2 217.9Q224.0 217.8 223.2 216.4Q222.4 215.0 224.5 214.1Q226.5 213.3 228.5 214.3Q230.4 215.2 229.4 216.7Z" fill="#84607a"/>
<path d="M240.3 211.0Q240.3 213.4 238.9 215.1Q237.4 216.8 235.5 215.7Q233.6 214.7 232.9 212.2Q232.2 209.7 234.1 207.9Q236.1 206.1 238.2 207.4Q240.3 208.6 240.3 211.0Z" fill="#2c1834"/>
<path d="M239.9 211.3Q240.3 213.2 238.8 214.7Q237.2 216.1 235.4 215.1Q233.7 214.1 233.4 212.0Q233.2 209.9 234.7 208.5Q236.2 207.2 237.8 208.2Q239.4 209.3 239.9 211.3Z" fill="#7c5870"/>
<path d="M238.0 209.9Q238.1 211.5 236.7 212.1Q235.3 212.7 234.4 211.6Q233.6 210.6 234.1 209.5Q234.7 208.3 236.3 208.3Q238.0 208.3 238.0 209.9Z" fill="#b090a4"/>
<path d="M250.2 207.4Q250.0 210.0 247.5 210.8Q245.0 211.7 243.0 210.4Q241.1 209.2 241.2 207.1Q241.4 205.0 243.4 203.4Q245.4 201.9 247.9 203.3Q250.5 204.7 250.2 207.4Z" fill="#2c1834"/>
<path d="M248.6 205.7Q249.2 207.5 248.1 209.3Q247.0 211.2 244.8 210.4Q242.6 209.7 241.2 208.0Q239.7 206.3 241.4 204.5Q243.1 202.8 245.5 203.3Q247.9 203.8 248.6 205.7Z" fill="#7c5870"/>
<path d="M246.3 206.2Q245.9 207.5 244.2 207.6Q242.4 207.6 241.4 206.4Q240.3 205.2 242.0 204.3Q243.6 203.3 245.1 204.1Q246.6 205.0 246.3 206.2Z" fill="#b090a4"/>
<path d="M258.5 201.0Q259.2 203.0 257.8 204.7Q256.5 206.3 253.8 206.1Q251.2 205.9 250.0 203.9Q248.8 201.9 250.6 200.2Q252.4 198.5 255.1 198.8Q257.8 199.0 258.5 201.0Z" fill="#2c1834"/>
<path d="M258.2 201.6Q258.7 203.3 257.0 204.4Q255.3 205.5 252.9 205.2Q250.5 204.9 250.0 203.0Q249.4 201.1 251.4 199.9Q253.4 198.8 255.5 199.4Q257.7 200.0 258.2 201.6Z" fill="#7c5870"/>
<path d="M255.5 200.5Q256.3 201.6 255.0 202.4Q253.7 203.2 252.3 202.6Q250.8 202.1 250.9 201.0Q251.0 200.0 252.8 199.7Q254.6 199.4 255.5 200.5Z" fill="#b090a4"/>
<path d="M266.3 196.6Q267.6 198.8 266.4 201.1Q265.1 203.4 262.7 203.3Q260.4 203.3 259.7 201.0Q259.0 198.7 259.7 196.3Q260.3 193.9 262.7 194.2Q265.1 194.4 266.3 196.6Z" fill="#2c1834"/>
<path d="M265.8 197.7Q265.7 199.7 264.5 201.3Q263.3 202.9 261.6 201.9Q259.9 201.0 259.3 199.0Q258.8 197.0 260.4 195.9Q262.1 194.9 264.0 195.3Q265.9 195.6 265.8 197.7Z" fill="#7c5870"/>
<path d="M263.6 196.3Q264.3 197.6 263.2 198.6Q262.2 199.6 260.6 199.2Q259.0 198.7 259.5 197.3Q260.0 195.9 261.4 195.5Q262.9 195.0 263.6 196.3Z" fill="#b090a4"/>
<path d="M206.3 236.4Q207.1 238.9 204.6 240.4Q202.1 242.0 199.0 241.3Q196.0 240.5 195.3 237.8Q194.6 235.1 197.2 233.4Q199.9 231.6 202.7 232.8Q205.6 233.9 206.3 236.4Z" fill="#2c1834"/>
<path d="M205.8 235.7Q206.6 238.0 204.4 239.2Q202.2 240.4 199.5 240.3Q196.7 240.1 196.0 237.9Q195.2 235.6 197.5 234.5Q199.7 233.4 202.4 233.5Q205.1 233.5 205.8 235.7Z" fill="#5c3a58"/>
<path d="M202.4 236.1Q201.6 237.3 199.6 237.4Q197.7 237.5 196.7 236.2Q195.7 234.9 197.6 234.2Q199.5 233.5 201.4 234.1Q203.2 234.8 202.4 236.1Z" fill="#84607a"/>
<path d="M216.2 230.8Q216.8 232.7 214.7 234.0Q212.5 235.2 209.5 234.9Q206.5 234.5 205.8 232.3Q205.0 230.0 207.6 228.6Q210.2 227.3 212.9 228.1Q215.7 228.9 216.2 230.8Z" fill="#2c1834"/>
<path d="M215.7 231.0Q216.8 232.5 214.5 233.2Q212.1 233.9 209.6 233.7Q207.2 233.5 207.1 231.9Q207.0 230.2 208.8 229.4Q210.6 228.5 212.6 229.0Q214.6 229.4 215.7 231.0Z" fill="#5c3a58"/>
<path d="M212.9 230.2Q213.2 231.4 211.3 231.6Q209.4 231.9 208.2 231.2Q207.1 230.5 207.9 229.5Q208.7 228.6 210.6 228.8Q212.6 229.1 212.9 230.2Z" fill="#84607a"/>
<path d="M226.7 227.7Q226.3 230.0 223.6 231.0Q221.0 232.0 218.6 230.4Q216.3 228.8 217.2 226.6Q218.0 224.4 220.5 223.2Q222.9 221.9 225.1 223.7Q227.2 225.4 226.7 227.7Z" fill="#2c1834"/>
<path d="M226.0 225.8Q226.4 227.8 224.8 229.3Q223.2 230.8 220.4 230.5Q217.6 230.2 216.7 227.9Q215.9 225.6 218.3 224.6Q220.7 223.6 223.2 223.7Q225.6 223.9 226.0 225.8Z" fill="#5c3a58"/>
<path d="M223.6 226.1Q223.1 227.6 221.0 227.5Q219.0 227.3 217.7 226.2Q216.5 225.1 218.3 224.0Q220.1 222.9 222.1 223.8Q224.1 224.6 223.6 226.1Z" fill="#84607a"/>
<path d="M236.8 219.9Q238.6 221.5 236.7 223.1Q234.8 224.7 232.1 224.8Q229.4 224.9 228.3 223.1Q227.2 221.4 228.5 219.8Q229.8 218.2 232.3 218.3Q234.9 218.3 236.8 219.9Z" fill="#2c1834"/>
<path d="M236.6 220.6Q237.2 222.4 235.2 223.6Q233.2 224.9 231.0 224.1Q228.7 223.2 228.2 221.7Q227.6 220.1 229.5 219.1Q231.3 218.0 233.7 218.4Q236.1 218.9 236.6 220.6Z" fill="#5c3a58"/>
<path d="M233.8 220.0Q234.1 221.3 232.2 221.7Q230.3 222.1 228.8 221.3Q227.2 220.5 228.2 219.4Q229.2 218.2 231.4 218.5Q233.6 218.8 233.8 220.0Z" fill="#84607a"/>
<path d="M247.2 219.6Q245.9 221.8 243.0 222.7Q240.1 223.5 238.3 221.2Q236.6 219.0 237.5 216.5Q238.4 214.0 241.3 214.2Q244.2 214.3 246.3 215.8Q248.5 217.3 247.2 219.6Z" fill="#2c1834"/>
<path d="M246.5 217.7Q246.9 219.6 244.9 220.7Q242.8 221.8 240.6 221.0Q238.4 220.3 237.8 218.2Q237.3 216.2 239.5 214.9Q241.7 213.6 243.9 214.6Q246.1 215.7 246.5 217.7Z" fill="#5c3a58"/>
<path d="M243.6 216.8Q243.7 218.1 241.7 218.6Q239.8 219.2 238.9 218.0Q237.9 216.7 238.9 215.4Q239.8 214.2 241.7 214.8Q243.5 215.5 243.6 216.8Z" fill="#84607a"/>
<path d="M256.5 211.2Q255.8 213.7 253.6 215.1Q251.4 216.6 249.5 214.7Q247.7 212.9 248.0 210.5Q248.4 208.2 250.5 207.3Q252.7 206.3 254.9 207.6Q257.2 208.8 256.5 211.2Z" fill="#2c1834"/>
<path d="M256.2 209.7Q256.6 212.0 254.9 213.8Q253.2 215.6 251.0 214.6Q248.7 213.6 248.1 211.5Q247.4 209.4 249.1 207.8Q250.9 206.1 253.3 206.7Q255.8 207.3 256.2 209.7Z" fill="#5c3a58"/>
<path d="M253.1 208.7Q253.6 210.1 252.3 210.9Q251.0 211.7 249.4 211.1Q247.7 210.4 248.4 209.0Q249.0 207.6 250.8 207.4Q252.7 207.3 253.1 208.7Z" fill="#84607a"/>
<path d="M264.1 207.8Q262.8 210.1 260.9 210.6Q258.9 211.2 257.4 209.3Q255.9 207.4 256.5 204.8Q257.1 202.1 259.5 201.9Q261.8 201.7 263.5 203.6Q265.3 205.5 264.1 207.8Z" fill="#2c1834"/>
<path d="M263.6 207.6Q263.1 209.8 261.1 209.9Q259.2 209.9 258.2 208.5Q257.1 207.0 257.4 205.1Q257.7 203.2 259.6 202.4Q261.5 201.6 262.8 203.5Q264.1 205.3 263.6 207.6Z" fill="#5c3a58"/>
<path d="M261.3 204.2Q262.0 205.6 260.7 206.5Q259.5 207.4 258.4 206.6Q257.2 205.9 257.4 204.5Q257.5 203.1 259.1 202.9Q260.7 202.7 261.3 204.2Z" fill="#84607a"/>
<path d="M204.0 248.0Q202.9 250.3 200.5 251.1Q198.1 251.8 196.3 249.9Q194.5 248.0 195.5 245.8Q196.6 243.5 198.8 243.3Q201.0 243.0 203.0 244.4Q205.0 245.8 204.0 248.0Z" fill="#2c1834"/>
<path d="M202.9 245.9Q203.6 247.6 202.1 248.8Q200.5 249.9 198.7 249.5Q196.9 249.1 196.4 247.4Q196.0 245.7 197.4 244.6Q198.8 243.5 200.5 243.9Q202.2 244.3 202.9 245.9Z" fill="#5c3a58"/>
<path d="M200.9 245.4Q201.0 246.7 199.5 247.0Q198.0 247.4 197.2 246.5Q196.4 245.7 196.9 244.5Q197.4 243.3 199.1 243.7Q200.9 244.1 200.9 245.4Z" fill="#84607a"/>
<path d="M210.9 242.8Q210.5 245.1 208.3 245.3Q206.0 245.6 204.9 244.0Q203.7 242.5 204.0 240.6Q204.3 238.8 206.3 238.1Q208.2 237.5 209.7 239.0Q211.2 240.5 210.9 242.8Z" fill="#2c1834"/>
<path d="M209.9 240.6Q210.6 242.1 209.4 243.6Q208.2 245.0 206.5 244.3Q204.8 243.7 204.4 242.2Q203.9 240.7 205.0 239.5Q206.0 238.4 207.6 238.7Q209.1 239.1 209.9 240.6Z" fill="#5c3a58"/>
<path d="M208.3 240.7Q207.8 241.9 206.3 242.2Q204.8 242.5 204.5 241.3Q204.2 240.1 204.9 239.2Q205.7 238.2 207.2 238.8Q208.7 239.4 208.3 240.7Z" fill="#84607a"/>
<path d="M218.9 237.3Q220.3 239.1 218.7 240.7Q217.1 242.3 214.7 242.5Q212.3 242.7 210.7 240.8Q209.0 238.9 210.9 237.3Q212.9 235.8 215.2 235.6Q217.6 235.5 218.9 237.3Z" fill="#2c1834"/>
<path d="M218.5 239.4Q217.8 241.0 215.9 241.5Q213.9 241.9 211.9 240.9Q209.9 239.9 210.8 238.1Q211.7 236.3 213.8 235.9Q215.9 235.6 217.6 236.7Q219.2 237.8 218.5 239.4Z" fill="#5c3a58"/>
<path d="M216.5 237.8Q216.5 239.2 214.5 239.6Q212.6 239.9 211.3 238.8Q210.1 237.7 211.5 236.8Q212.9 235.8 214.8 236.1Q216.6 236.5 216.5 237.8Z" fill="#84607a"/>
<path d="M227.3 232.7Q228.0 235.1 227.0 237.1Q226.0 239.0 223.4 239.3Q220.9 239.5 219.8 237.3Q218.7 235.0 220.1 233.1Q221.4 231.2 224.0 230.7Q226.6 230.2 227.3 232.7Z" fill="#2c1834"/>
<path d="M227.0 235.2Q226.9 237.1 225.1 237.8Q223.2 238.5 221.7 237.3Q220.3 236.2 220.1 234.3Q219.9 232.4 222.0 231.6Q224.0 230.8 225.6 232.1Q227.1 233.4 227.0 235.2Z" fill="#5c3a58"/>
<path d="M224.4 233.1Q225.0 234.1 223.9 234.9Q222.7 235.6 221.5 235.0Q220.2 234.5 220.5 233.3Q220.7 232.2 222.2 232.1Q223.8 232.0 224.4 233.1Z" fill="#84607a"/>
<path d="M235.7 227.5Q235.9 229.8 234.7 231.5Q233.5 233.2 231.4 232.6Q229.3 232.0 228.6 230.2Q227.9 228.4 229.0 226.3Q230.1 224.2 232.8 224.7Q235.5 225.2 235.7 227.5Z" fill="#2c1834"/>
<path d="M235.0 229.4Q234.4 230.9 232.7 231.4Q231.0 232.0 229.8 230.8Q228.5 229.7 228.7 228.0Q228.8 226.2 230.8 225.7Q232.9 225.2 234.2 226.5Q235.6 227.9 235.0 229.4Z" fill="#5c3a58"/>
<path d="M233.5 227.5Q233.8 228.9 232.1 229.4Q230.4 229.9 229.0 229.0Q227.7 228.2 228.5 226.9Q229.3 225.6 231.2 225.9Q233.1 226.1 233.5 227.5Z" fill="#84607a"/>
<path d="M243.5 227.2Q242.6 229.9 240.4 230.2Q238.1 230.4 237.1 228.3Q236.1 226.2 236.4 223.7Q236.7 221.2 238.9 220.8Q241.2 220.4 242.8 222.5Q244.5 224.6 243.5 227.2Z" fill="#2c1834"/>
<path d="M242.6 223.4Q243.3 225.5 242.2 227.2Q241.1 228.9 239.3 228.8Q237.6 228.8 236.6 226.9Q235.6 225.0 236.8 223.3Q237.9 221.6 239.9 221.4Q241.8 221.2 242.6 223.4Z" fill="#5c3a58"/>
<path d="M240.4 224.5Q239.9 225.7 238.5 226.0Q237.0 226.3 236.5 224.8Q236.0 223.3 237.3 222.5Q238.6 221.7 239.8 222.5Q240.9 223.3 240.4 224.5Z" fill="#84607a"/>
<path d="M252.4 222.3Q252.4 224.2 250.3 225.8Q248.1 227.5 245.6 226.0Q243.1 224.5 243.2 222.2Q243.3 220.0 245.8 219.1Q248.3 218.1 250.4 219.3Q252.5 220.5 252.4 222.3Z" fill="#2c1834"/>
<path d="M251.7 220.8Q252.8 222.2 251.6 223.8Q250.4 225.3 248.0 225.1Q245.6 224.9 244.6 223.4Q243.6 221.8 244.7 220.2Q245.8 218.6 248.2 219.0Q250.6 219.3 251.7 220.8Z" fill="#5c3a58"/>
<path d="M249.8 220.6Q250.0 222.0 248.2 222.4Q246.4 222.7 244.6 222.1Q242.8 221.4 243.9 220.2Q245.1 218.9 247.4 219.1Q249.7 219.3 249.8 220.6Z" fill="#84607a"/>
<path d="M260.1 217.5Q259.6 219.6 257.8 220.2Q255.9 220.7 254.6 219.2Q253.3 217.6 253.7 215.3Q254.1 213.1 256.0 212.5Q258.0 211.9 259.3 213.6Q260.7 215.3 260.1 217.5Z" fill="#2c1834"/>
<path d="M259.5 214.5Q260.3 216.3 259.4 218.2Q258.6 220.0 256.8 219.8Q255.0 219.6 254.2 217.8Q253.5 216.1 254.5 214.6Q255.4 213.1 257.1 212.9Q258.7 212.7 259.5 214.5Z" fill="#5c3a58"/>
<path d="M258.2 214.7Q258.6 216.3 257.0 216.7Q255.5 217.1 254.6 216.2Q253.8 215.3 254.3 214.0Q254.8 212.8 256.4 213.0Q257.9 213.1 258.2 214.7Z" fill="#84607a"/>
<path d="M270.5 211.0Q272.4 212.8 270.6 215.1Q268.8 217.4 265.9 216.6Q263.0 215.8 260.9 214.0Q258.9 212.2 260.8 210.1Q262.7 207.9 265.7 208.5Q268.6 209.1 270.5 211.0Z" fill="#2c1834"/>
<path d="M270.4 211.7Q271.2 213.7 268.9 215.2Q266.7 216.6 264.4 215.6Q262.1 214.5 261.7 212.8Q261.2 211.2 262.9 209.9Q264.7 208.7 267.1 209.2Q269.6 209.7 270.4 211.7Z" fill="#5c3a58"/>
<path d="M266.8 210.2Q268.0 211.3 266.6 212.3Q265.3 213.3 263.3 212.9Q261.4 212.5 261.7 211.3Q262.0 210.1 263.8 209.6Q265.5 209.0 266.8 210.2Z" fill="#84607a"/>
<path d="M204.5 256.7Q203.2 259.0 200.8 259.5Q198.3 260.0 197.0 257.5Q195.6 255.1 196.7 252.5Q197.8 249.9 200.5 249.6Q203.2 249.4 204.5 252.0Q205.8 254.5 204.5 256.7Z" fill="#2c1834"/>
<path d="M203.7 253.5Q204.2 255.3 203.1 257.2Q202.0 259.0 200.1 258.2Q198.2 257.3 197.4 255.5Q196.5 253.6 198.0 252.4Q199.6 251.2 201.4 251.4Q203.1 251.6 203.7 253.5Z" fill="#452a48"/>
<path d="M201.5 252.7Q202.1 253.9 201.0 254.9Q199.8 255.9 198.5 255.0Q197.2 254.1 197.7 253.0Q198.2 251.8 199.5 251.7Q200.9 251.6 201.5 252.7Z" fill="#6a4864"/>
<path d="M211.8 249.0Q212.4 251.0 211.1 252.8Q209.9 254.6 207.8 254.2Q205.7 253.8 204.8 251.5Q203.9 249.1 205.6 247.4Q207.2 245.7 209.2 246.3Q211.2 246.9 211.8 249.0Z" fill="#2c1834"/>
<path d="M211.1 248.7Q211.8 250.4 210.9 252.1Q210.0 253.8 208.1 253.5Q206.2 253.2 205.4 251.3Q204.6 249.4 205.9 248.0Q207.2 246.6 208.8 246.9Q210.5 247.1 211.1 248.7Z" fill="#452a48"/>
<path d="M209.7 249.4Q209.5 250.9 207.9 250.7Q206.3 250.4 205.5 249.3Q204.8 248.1 206.0 247.3Q207.3 246.6 208.6 247.2Q210.0 247.8 209.7 249.4Z" fill="#6a4864"/>
<path d="M219.6 245.3Q220.2 247.1 218.5 248.6Q216.9 250.0 214.7 249.3Q212.4 248.5 212.4 246.4Q212.3 244.2 213.9 242.7Q215.4 241.1 217.3 242.3Q219.1 243.4 219.6 245.3Z" fill="#2c1834"/>
<path d="M219.0 245.5Q218.7 247.1 217.2 247.9Q215.8 248.7 214.1 247.8Q212.5 246.9 212.5 245.0Q212.5 243.1 214.5 242.6Q216.4 242.1 217.9 243.1Q219.3 244.0 219.0 245.5Z" fill="#452a48"/>
<path d="M217.2 243.6Q218.2 244.7 216.9 245.7Q215.7 246.6 214.4 246.0Q213.2 245.3 213.1 244.1Q213.0 243.0 214.6 242.8Q216.2 242.6 217.2 243.6Z" fill="#6a4864"/>
<path d="M227.6 243.2Q227.9 245.2 225.7 246.4Q223.4 247.5 221.3 246.1Q219.2 244.8 219.4 242.5Q219.5 240.2 221.8 239.3Q224.1 238.5 225.8 239.8Q227.4 241.2 227.6 243.2Z" fill="#2c1834"/>
<path d="M226.4 241.4Q227.1 242.7 226.3 244.1Q225.4 245.5 223.5 245.3Q221.5 245.2 220.6 243.7Q219.6 242.3 220.9 241.1Q222.3 240.0 224.0 240.0Q225.7 240.1 226.4 241.4Z" fill="#5c3a58"/>
<path d="M224.6 240.9Q225.7 241.7 224.6 242.5Q223.5 243.4 222.1 243.0Q220.8 242.6 220.7 241.5Q220.6 240.4 222.0 240.3Q223.5 240.1 224.6 240.9Z" fill="#84607a"/>
<path d="M234.2 241.2Q233.7 243.3 231.5 243.7Q229.4 244.0 228.1 242.0Q226.9 240.0 227.6 237.5Q228.3 235.1 230.6 235.0Q232.8 235.0 233.8 237.0Q234.8 239.0 234.2 241.2Z" fill="#2c1834"/>
<path d="M233.9 239.8Q233.1 241.5 231.5 242.6Q229.9 243.6 228.6 241.9Q227.3 240.2 227.8 238.2Q228.2 236.1 230.2 235.5Q232.1 234.8 233.4 236.5Q234.7 238.1 233.9 239.8Z" fill="#452a48"/>
<path d="M232.0 238.7Q231.5 239.9 229.9 240.0Q228.4 240.2 228.1 238.7Q227.8 237.3 229.0 236.7Q230.2 236.1 231.3 236.8Q232.4 237.4 232.0 238.7Z" fill="#6a4864"/>
<path d="M243.1 235.0Q243.3 237.6 241.4 239.5Q239.4 241.5 236.9 240.2Q234.5 238.9 234.7 236.3Q235.0 233.8 236.6 231.7Q238.1 229.5 240.5 231.0Q242.8 232.4 243.1 235.0Z" fill="#2c1834"/>
<path d="M241.6 233.8Q242.4 235.5 241.5 237.4Q240.6 239.2 238.5 239.0Q236.3 238.8 235.6 236.9Q234.8 235.0 235.9 233.4Q236.9 231.7 238.9 231.9Q240.8 232.1 241.6 233.8Z" fill="#5c3a58"/>
<path d="M239.7 234.1Q240.0 235.4 238.3 236.1Q236.7 236.9 235.7 235.5Q234.6 234.2 235.7 233.1Q236.8 232.1 238.1 232.4Q239.5 232.8 239.7 234.1Z" fill="#84607a"/>
<path d="M250.0 230.2Q251.1 232.3 249.6 234.0Q248.0 235.7 245.9 235.7Q243.7 235.7 242.6 233.2Q241.5 230.7 243.1 228.6Q244.8 226.5 246.9 227.3Q249.0 228.1 250.0 230.2Z" fill="#2c1834"/>
<path d="M249.3 232.2Q248.8 234.0 247.0 234.8Q245.3 235.6 244.3 233.9Q243.3 232.1 243.5 230.1Q243.7 228.0 245.6 227.8Q247.5 227.6 248.7 229.0Q249.9 230.5 249.3 232.2Z" fill="#452a48"/>
<path d="M247.7 230.0Q247.6 231.5 246.2 231.9Q244.8 232.4 243.6 231.3Q242.5 230.1 243.6 229.0Q244.7 227.8 246.3 228.2Q247.8 228.5 247.7 230.0Z" fill="#6a4864"/>
<path d="M260.3 226.7Q260.4 229.0 257.8 230.0Q255.1 230.9 252.3 230.0Q249.5 229.1 250.2 226.9Q250.8 224.6 253.1 223.1Q255.3 221.5 257.8 223.0Q260.3 224.5 260.3 226.7Z" fill="#2c1834"/>
<path d="M259.5 225.2Q260.8 227.0 259.0 228.6Q257.2 230.2 254.9 229.5Q252.5 228.8 251.3 227.4Q250.0 225.9 251.7 224.6Q253.4 223.4 255.8 223.4Q258.2 223.5 259.5 225.2Z" fill="#5c3a58"/>
<path d="M256.0 224.8Q256.6 225.8 255.4 226.8Q254.2 227.7 252.5 227.0Q250.9 226.2 251.2 225.0Q251.5 223.8 253.5 223.7Q255.5 223.7 256.0 224.8Z" fill="#84607a"/>
<path d="M267.3 221.0Q267.6 223.2 266.0 224.9Q264.5 226.7 262.3 225.6Q260.1 224.6 259.8 222.1Q259.4 219.6 261.4 218.6Q263.3 217.7 265.2 218.2Q267.1 218.8 267.3 221.0Z" fill="#2c1834"/>
<path d="M266.4 222.7Q265.9 224.4 264.0 224.6Q262.1 224.8 260.9 223.2Q259.7 221.7 260.7 220.0Q261.6 218.3 263.5 218.0Q265.3 217.7 266.1 219.3Q266.9 221.0 266.4 222.7Z" fill="#5c3a58"/>
<path d="M264.9 220.2Q264.6 221.5 263.3 221.8Q261.9 222.0 260.8 221.0Q259.7 220.0 260.9 218.9Q262.1 217.9 263.6 218.3Q265.2 218.8 264.9 220.2Z" fill="#84607a"/>
<path d="M205.8 262.0Q204.5 264.1 201.9 265.0Q199.2 266.0 197.5 264.2Q195.8 262.4 196.1 260.3Q196.4 258.3 199.3 257.5Q202.1 256.7 204.5 258.3Q207.0 259.9 205.8 262.0Z" fill="#2c1834"/>
<path d="M204.4 261.5Q204.3 263.1 202.2 263.5Q200.0 264.0 198.0 263.2Q195.9 262.5 196.6 260.9Q197.2 259.3 199.2 258.5Q201.1 257.8 202.9 258.8Q204.6 259.9 204.4 261.5Z" fill="#5c3a58"/>
<path d="M201.4 259.5Q201.9 260.5 200.7 261.2Q199.5 261.8 198.0 261.3Q196.6 260.8 197.0 259.7Q197.3 258.7 199.1 258.6Q200.9 258.6 201.4 259.5Z" fill="#84607a"/>
<path d="M215.8 255.9Q216.7 258.0 215.1 260.0Q213.5 262.0 210.3 261.6Q207.0 261.2 205.8 259.0Q204.5 256.8 206.7 255.2Q208.9 253.7 211.9 253.7Q214.8 253.8 215.8 255.9Z" fill="#2c1834"/>
<path d="M215.0 258.2Q214.5 259.9 211.9 260.2Q209.4 260.5 207.4 259.3Q205.5 258.0 206.1 256.1Q206.7 254.1 209.7 253.7Q212.6 253.3 214.0 254.9Q215.4 256.5 215.0 258.2Z" fill="#5c3a58"/>
<path d="M212.3 255.1Q213.4 256.3 211.8 257.1Q210.2 257.9 208.1 257.7Q206.1 257.4 206.3 256.0Q206.5 254.7 208.8 254.3Q211.1 253.9 212.3 255.1Z" fill="#84607a"/>
<path d="M224.7 254.7Q223.4 256.8 220.9 257.4Q218.3 258.0 216.8 255.8Q215.3 253.5 216.4 251.1Q217.6 248.7 220.1 248.7Q222.7 248.7 224.4 250.6Q226.0 252.5 224.7 254.7Z" fill="#2c1834"/>
<path d="M224.4 252.9Q223.5 254.9 221.7 256.1Q219.9 257.3 218.6 255.7Q217.2 254.1 217.3 252.3Q217.4 250.5 219.2 249.9Q221.1 249.3 223.1 250.1Q225.2 251.0 224.4 252.9Z" fill="#452a48"/>
<path d="M221.4 250.9Q222.1 251.9 221.0 252.9Q219.9 253.8 218.2 253.3Q216.4 252.8 216.7 251.3Q217.0 249.7 218.8 249.7Q220.7 249.8 221.4 250.9Z" fill="#6a4864"/>
<path d="M234.1 247.9Q234.6 250.0 232.2 251.2Q229.8 252.4 227.1 251.4Q224.4 250.4 224.4 247.8Q224.4 245.3 227.1 244.4Q229.7 243.5 231.7 244.7Q233.7 245.8 234.1 247.9Z" fill="#2c1834"/>
<path d="M233.8 248.5Q233.1 250.4 230.7 250.6Q228.3 250.9 226.4 249.7Q224.5 248.4 225.4 246.5Q226.2 244.6 228.6 244.3Q231.1 244.0 232.8 245.3Q234.5 246.7 233.8 248.5Z" fill="#452a48"/>
<path d="M231.0 246.3Q231.7 247.5 229.9 247.9Q228.0 248.3 226.5 247.6Q224.9 246.8 226.0 245.7Q227.0 244.6 228.7 244.9Q230.4 245.2 231.0 246.3Z" fill="#6a4864"/>
<path d="M243.5 241.2Q244.9 243.5 243.2 245.6Q241.6 247.7 239.0 247.2Q236.4 246.7 235.4 244.9Q234.3 243.1 235.6 241.4Q236.8 239.7 239.5 239.3Q242.1 239.0 243.5 241.2Z" fill="#2c1834"/>
<path d="M241.9 241.8Q242.7 243.2 241.7 244.7Q240.7 246.2 238.6 246.1Q236.4 246.1 235.5 244.4Q234.6 242.8 235.9 241.5Q237.2 240.2 239.1 240.3Q241.0 240.4 241.9 241.8Z" fill="#452a48"/>
<path d="M240.2 242.1Q240.4 243.3 238.6 243.7Q236.8 244.0 236.0 243.0Q235.1 242.0 235.9 240.8Q236.6 239.6 238.3 240.2Q240.0 240.8 240.2 242.1Z" fill="#6a4864"/>
<path d="M250.8 240.2Q249.4 242.2 247.3 242.3Q245.3 242.4 244.1 240.7Q243.0 238.9 243.9 237.0Q244.8 235.2 247.1 234.4Q249.3 233.6 250.7 235.9Q252.1 238.2 250.8 240.2Z" fill="#2c1834"/>
<path d="M250.0 239.0Q249.6 240.7 247.9 241.1Q246.2 241.6 245.0 240.4Q243.7 239.3 244.1 237.7Q244.5 236.1 246.2 235.0Q247.9 234.0 249.1 235.6Q250.4 237.2 250.0 239.0Z" fill="#452a48"/>
<path d="M247.9 236.5Q248.1 237.8 247.0 238.8Q246.0 239.7 244.6 238.8Q243.2 238.0 243.8 236.7Q244.4 235.4 246.1 235.3Q247.8 235.3 247.9 236.5Z" fill="#6a4864"/>
<path d="M260.7 235.5Q260.2 237.6 257.2 237.7Q254.1 237.8 252.0 236.2Q250.0 234.7 251.3 232.7Q252.6 230.7 255.3 230.6Q258.0 230.4 259.6 231.9Q261.1 233.3 260.7 235.5Z" fill="#2c1834"/>
<path d="M260.4 234.8Q260.3 236.7 257.6 236.7Q254.8 236.7 253.0 235.7Q251.1 234.6 251.5 232.7Q251.9 230.8 254.7 230.5Q257.5 230.1 259.0 231.5Q260.5 232.9 260.4 234.8Z" fill="#5c3a58"/>
<path d="M257.4 231.8Q258.7 232.9 257.0 233.7Q255.4 234.4 253.3 234.2Q251.2 233.9 251.5 232.5Q251.7 231.2 253.9 230.9Q256.1 230.6 257.4 231.8Z" fill="#84607a"/>
<path d="M271.0 229.5Q270.6 231.8 268.0 232.7Q265.5 233.5 263.2 232.2Q260.8 230.9 261.5 228.7Q262.1 226.4 264.4 225.7Q266.8 225.0 269.1 226.1Q271.4 227.2 271.0 229.5Z" fill="#2c1834"/>
<path d="M270.4 227.8Q270.9 229.9 269.2 231.4Q267.4 232.9 265.3 231.9Q263.3 231.0 262.4 229.4Q261.5 227.8 263.2 226.4Q264.9 225.1 267.4 225.4Q269.9 225.8 270.4 227.8Z" fill="#452a48"/>
<path d="M267.2 228.0Q267.1 229.1 265.4 229.2Q263.8 229.3 262.5 228.4Q261.1 227.5 262.6 226.3Q264.1 225.2 265.7 226.0Q267.3 226.8 267.2 228.0Z" fill="#6a4864"/>
<path d="M207.2 225.5Q207.3 226.0 207.2 226.5Q207.2 227.0 206.4 227.1Q205.6 227.2 205.2 226.8Q204.8 226.4 204.7 226.0Q204.6 225.5 205.2 225.3Q205.7 225.1 206.4 225.0Q207.2 225.0 207.2 225.5Z" fill="#3fae48"/>
<path d="M214.0 228.4Q214.6 229.0 214.0 229.6Q213.4 230.2 212.5 230.3Q211.5 230.4 210.7 230.1Q209.9 229.7 210.1 229.1Q210.4 228.5 210.9 228.0Q211.5 227.4 212.4 227.6Q213.4 227.8 214.0 228.4Z" fill="#3fae48"/>
<path d="M219.7 221.3Q219.8 222.0 219.4 222.5Q219.1 222.9 218.4 223.1Q217.6 223.2 216.8 222.9Q215.9 222.7 216.2 222.1Q216.5 221.5 217.0 220.9Q217.4 220.3 218.5 220.5Q219.6 220.7 219.7 221.3Z" fill="#3fae48"/>
<path d="M234.9 212.5Q235.2 213.0 234.9 213.5Q234.7 214.0 234.2 214.1Q233.7 214.3 233.4 213.9Q233.0 213.5 232.9 212.9Q232.8 212.4 233.2 211.9Q233.7 211.4 234.2 211.7Q234.7 212.0 234.9 212.5Z" fill="#3fae48"/>
<path d="M239.3 215.5Q239.7 216.0 239.4 216.6Q239.1 217.2 238.4 217.4Q237.6 217.6 237.0 217.1Q236.5 216.6 236.4 216.0Q236.3 215.3 237.0 215.0Q237.7 214.8 238.3 214.9Q238.9 215.1 239.3 215.5Z" fill="#3fae48"/>
<path d="M247.7 224.7Q248.3 225.0 247.7 225.3Q247.0 225.6 246.3 225.8Q245.6 225.9 245.0 225.6Q244.4 225.4 244.1 224.9Q243.8 224.5 244.7 224.3Q245.6 224.1 246.3 224.2Q247.0 224.3 247.7 224.7Z" fill="#3fae48"/>
<path d="M250.2 220.6Q250.6 221.0 250.3 221.6Q250.0 222.1 249.3 222.2Q248.7 222.3 248.3 221.9Q248.0 221.4 247.9 221.0Q247.8 220.5 248.2 220.0Q248.6 219.5 249.2 219.8Q249.8 220.1 250.2 220.6Z" fill="#3fae48"/>
<path d="M244.2 229.6Q244.5 230.0 244.2 230.4Q243.9 230.7 243.3 230.8Q242.7 231.0 242.0 230.7Q241.3 230.5 241.5 230.1Q241.7 229.6 242.2 229.4Q242.7 229.2 243.3 229.2Q243.9 229.2 244.2 229.6Z" fill="#3fae48"/>
<path d="M253.5 200.0Q253.8 200.5 253.5 201.0Q253.3 201.5 252.4 201.7Q251.5 201.9 250.9 201.5Q250.3 201.0 250.4 200.5Q250.5 200.0 251.1 199.8Q251.6 199.5 252.4 199.5Q253.2 199.6 253.5 200.0Z" fill="#3fae48"/>
<path d="M201.0 228.6Q201.2 229.0 201.1 229.6Q201.0 230.2 200.3 230.4Q199.7 230.5 199.2 230.1Q198.7 229.7 198.7 229.0Q198.7 228.3 199.2 227.9Q199.7 227.5 200.2 227.8Q200.7 228.1 201.0 228.6Z" fill="#3fae48"/>
</g>
<polygon points="136.8,176.0 138.5,168.0 143.0,162.5 150.0,159.0 158.0,155.5 166.0,152.5 173.0,150.0 181.0,148.5 188.0,147.5 195.0,148.0 203.0,150.0 212.0,151.5 222.0,153.5 230.0,156.0 238.0,160.0 245.0,163.5 250.0,168.0 253.5,173.0 255.5,181.0 254.0,190.0 252.5,198.5 240.0,205.0 225.0,212.5 210.0,220.0 197.0,226.5 183.0,220.0 168.0,213.0 152.0,206.0 140.0,200.5 137.0,194.0 136.0,186.0" fill="#a8d440" />
<g clip-path="url(#gr1)">
<rect x="130" y="140" width="132" height="92" fill="url(#grs)"/>
<polyline points="140,199.5 152,205 168,212 183,219 197,225.5 210,219 225,211.5 240,204 252.5,197.5" fill="none" stroke="#cfe26a" stroke-width="2.6" stroke-linejoin="round"/>
<polyline points="138,199.8 152,206.2 168,213.2 183,220.2 197,226.7" fill="none" stroke="#ecd8b0" stroke-width="1.6"/>
<polyline points="197,226.7 210,220.2 225,212.7 240,205.2 253,198.5" fill="none" stroke="#b8a890" stroke-width="1.2"/>
<ellipse cx="187" cy="155.6" rx="5.4" ry="1.3" fill="#e6d8a8"/><ellipse cx="190" cy="160.6" rx="6.4" ry="1.6" fill="#e4d0a4"/><ellipse cx="196" cy="164.4" rx="3" ry="0.9" fill="#dccf9c"/>
</g>
<path d="M140.0 175.8Q140.0 177.8 137.6 178.5Q135.1 179.2 133.2 178.3Q131.2 177.4 131.0 175.8Q130.8 174.1 132.9 173.3Q135.0 172.5 137.4 173.1Q139.9 173.7 140.0 175.8Z" fill="#5a3444"/>
<path d="M138.5 175.6Q138.8 177.0 136.9 177.6Q135.0 178.1 133.0 177.6Q131.0 177.2 131.2 175.7Q131.5 174.3 133.2 173.3Q134.8 172.3 136.5 173.3Q138.2 174.2 138.5 175.6Z" fill="#b48c7c"/>
<path d="M137.6 176.2Q138.8 177.0 137.5 178.0Q136.2 178.9 134.4 178.4Q132.7 177.8 132.7 176.7Q132.7 175.6 134.5 175.5Q136.3 175.4 137.6 176.2Z" fill="#e6c8ae"/>
<path d="M141.3 169.0Q140.7 170.8 137.4 171.3Q134.1 171.9 132.8 170.0Q131.6 168.1 131.9 166.1Q132.3 164.0 135.9 163.7Q139.5 163.4 140.7 165.3Q142.0 167.2 141.3 169.0Z" fill="#5a3444"/>
<path d="M141.2 166.1Q143.0 167.5 141.1 168.8Q139.2 170.1 136.7 169.9Q134.2 169.8 133.2 168.5Q132.1 167.3 133.3 166.1Q134.5 164.9 137.0 164.8Q139.5 164.7 141.2 166.1Z" fill="#b48c7c"/>
<path d="M139.6 168.2Q140.4 169.1 138.9 169.7Q137.4 170.3 135.8 169.8Q134.2 169.4 134.3 168.3Q134.3 167.2 136.6 167.2Q138.9 167.3 139.6 168.2Z" fill="#e6c8ae"/>
<path d="M145.6 162.4Q144.7 164.3 142.6 165.4Q140.4 166.4 138.2 165.0Q136.1 163.5 136.7 161.4Q137.4 159.3 139.8 158.8Q142.2 158.3 144.3 159.4Q146.4 160.6 145.6 162.4Z" fill="#5a3444"/>
<path d="M144.2 162.7Q143.5 164.0 141.4 164.5Q139.4 165.1 137.9 163.7Q136.4 162.2 137.4 160.6Q138.5 159.0 140.8 158.8Q143.0 158.6 143.9 160.0Q144.9 161.4 144.2 162.7Z" fill="#b48c7c"/>
<path d="M143.8 162.7Q144.4 163.7 143.0 164.3Q141.6 164.8 140.2 164.3Q138.8 163.7 139.3 162.6Q139.7 161.4 141.5 161.5Q143.3 161.7 143.8 162.7Z" fill="#e6c8ae"/>
<path d="M153.4 156.9Q154.7 158.8 152.6 160.1Q150.5 161.4 147.5 161.8Q144.5 162.1 143.0 160.1Q141.5 158.0 143.5 156.1Q145.6 154.2 148.8 154.6Q152.1 154.9 153.4 156.9Z" fill="#34193f"/>
<path d="M153.0 157.2Q154.3 158.8 152.2 160.1Q150.1 161.3 147.8 160.8Q145.5 160.2 144.4 158.9Q143.3 157.6 144.9 156.1Q146.4 154.7 149.1 155.2Q151.8 155.6 153.0 157.2Z" fill="#6f4462"/>
<path d="M151.8 159.2Q152.7 160.3 150.7 160.8Q148.6 161.4 147.3 160.7Q146.0 159.9 146.5 159.1Q147.0 158.2 149.0 158.1Q150.9 158.1 151.8 159.2Z" fill="#b08a9c"/>
<path d="M162.1 154.8Q161.5 157.1 158.9 157.8Q156.3 158.6 154.3 157.4Q152.3 156.3 152.1 154.4Q151.9 152.5 154.5 151.3Q157.0 150.1 159.8 151.4Q162.6 152.6 162.1 154.8Z" fill="#34193f"/>
<path d="M160.2 153.2Q161.4 154.6 160.3 156.3Q159.3 157.9 156.5 157.7Q153.8 157.5 153.0 156.0Q152.3 154.4 153.4 153.2Q154.5 152.1 156.7 151.9Q158.9 151.8 160.2 153.2Z" fill="#6f4462"/>
<path d="M159.7 155.2Q160.9 156.3 159.1 157.0Q157.3 157.7 155.4 157.3Q153.4 156.9 153.9 155.7Q154.4 154.5 156.5 154.3Q158.6 154.1 159.7 155.2Z" fill="#b08a9c"/>
<path d="M168.5 150.4Q169.3 152.2 168.0 154.1Q166.7 155.9 164.0 155.5Q161.4 155.2 160.6 153.0Q159.8 150.9 161.4 149.1Q162.9 147.3 165.4 147.9Q167.8 148.5 168.5 150.4Z" fill="#34193f"/>
<path d="M168.2 152.6Q167.3 154.3 165.0 154.5Q162.7 154.8 161.4 153.3Q160.1 151.7 160.9 149.9Q161.7 148.0 164.2 148.0Q166.6 147.9 167.9 149.5Q169.1 151.0 168.2 152.6Z" fill="#6f4462"/>
<path d="M167.8 152.8Q168.1 154.2 166.1 154.6Q164.2 155.1 162.8 154.1Q161.5 153.0 162.7 152.0Q164.0 151.1 165.7 151.3Q167.5 151.5 167.8 152.8Z" fill="#b08a9c"/>
<path d="M177.0 148.2Q177.4 150.5 175.2 152.0Q173.1 153.5 170.9 152.4Q168.7 151.3 167.8 149.4Q167.0 147.5 169.1 146.4Q171.2 145.3 173.8 145.6Q176.5 145.9 177.0 148.2Z" fill="#34193f"/>
<path d="M176.2 149.6Q175.3 151.4 173.0 151.9Q170.6 152.4 168.9 151.0Q167.2 149.7 168.0 148.0Q168.8 146.3 171.0 145.8Q173.2 145.3 175.1 146.5Q177.0 147.8 176.2 149.6Z" fill="#6f4462"/>
<path d="M174.5 150.1Q174.5 151.1 173.0 151.6Q171.5 152.1 170.2 151.2Q168.9 150.4 170.1 149.5Q171.3 148.6 172.9 148.9Q174.4 149.1 174.5 150.1Z" fill="#b08a9c"/>
<path d="M183.8 145.9Q184.8 147.6 183.5 149.1Q182.2 150.5 179.9 150.8Q177.6 151.0 176.6 149.1Q175.6 147.2 177.0 145.7Q178.5 144.2 180.6 144.2Q182.7 144.2 183.8 145.9Z" fill="#34193f"/>
<path d="M183.3 147.4Q183.1 148.9 181.5 149.6Q179.8 150.4 178.4 149.3Q177.0 148.3 177.2 146.9Q177.4 145.4 179.1 144.4Q180.7 143.3 182.2 144.6Q183.6 145.9 183.3 147.4Z" fill="#6f4462"/>
<path d="M182.9 148.0Q183.5 149.2 182.0 149.9Q180.6 150.6 179.0 149.9Q177.4 149.3 178.1 148.1Q178.8 146.9 180.6 146.9Q182.4 146.8 182.9 148.0Z" fill="#b08a9c"/>
<path d="M192.4 146.6Q191.4 148.5 189.1 149.2Q186.9 149.9 184.5 148.9Q182.1 147.9 182.9 146.0Q183.7 144.0 186.0 143.3Q188.4 142.6 190.9 143.6Q193.4 144.6 192.4 146.6Z" fill="#34193f"/>
<path d="M191.3 144.9Q192.2 146.5 190.8 147.9Q189.5 149.3 187.4 148.8Q185.2 148.2 183.8 146.9Q182.3 145.7 183.9 144.1Q185.4 142.6 187.9 143.0Q190.5 143.3 191.3 144.9Z" fill="#6f4462"/>
<path d="M190.7 147.1Q190.9 148.4 189.2 148.9Q187.4 149.4 186.1 148.6Q184.8 147.7 185.5 146.6Q186.2 145.5 188.3 145.7Q190.5 145.9 190.7 147.1Z" fill="#b08a9c"/>
<path d="M199.7 146.0Q200.5 147.7 198.5 149.1Q196.5 150.4 193.7 149.9Q191.0 149.3 189.8 147.5Q188.7 145.8 190.9 144.2Q193.2 142.7 196.1 143.5Q199.0 144.3 199.7 146.0Z" fill="#34193f"/>
<path d="M199.4 147.1Q199.2 148.7 196.5 149.3Q193.8 149.9 191.6 148.8Q189.5 147.7 190.2 146.1Q190.9 144.6 193.3 144.1Q195.8 143.6 197.8 144.6Q199.7 145.5 199.4 147.1Z" fill="#6f4462"/>
<path d="M197.8 148.0Q197.4 148.9 195.6 149.1Q193.8 149.4 192.7 148.5Q191.6 147.7 193.0 146.7Q194.4 145.8 196.3 146.5Q198.1 147.1 197.8 148.0Z" fill="#b08a9c"/>
<path d="M207.7 150.0Q207.1 151.7 204.0 152.4Q200.9 153.0 199.5 151.2Q198.1 149.4 198.8 147.6Q199.5 145.8 202.3 145.8Q205.1 145.8 206.8 147.0Q208.4 148.3 207.7 150.0Z" fill="#34193f"/>
<path d="M207.3 148.4Q207.8 149.8 205.8 150.8Q203.7 151.8 201.8 150.9Q199.8 150.0 199.4 148.7Q199.1 147.4 200.9 146.3Q202.7 145.2 204.8 146.2Q206.8 147.1 207.3 148.4Z" fill="#6f4462"/>
<path d="M205.9 149.5Q206.3 150.4 205.0 150.8Q203.6 151.3 201.9 150.9Q200.3 150.4 200.9 149.4Q201.6 148.4 203.5 148.5Q205.5 148.6 205.9 149.5Z" fill="#b08a9c"/>
<path d="M216.6 149.3Q217.7 150.8 216.5 152.6Q215.4 154.5 212.7 153.8Q210.0 153.0 209.0 151.5Q208.1 150.1 209.2 148.4Q210.4 146.7 212.9 147.3Q215.5 147.8 216.6 149.3Z" fill="#34193f"/>
<path d="M216.6 150.8Q216.1 152.3 213.9 152.6Q211.6 152.9 209.5 152.0Q207.4 151.2 208.4 149.7Q209.4 148.2 211.6 147.7Q213.7 147.3 215.4 148.3Q217.0 149.3 216.6 150.8Z" fill="#6f4462"/>
<path d="M215.8 151.1Q216.7 152.2 214.8 152.6Q212.9 153.1 211.2 152.6Q209.5 152.1 210.2 150.9Q210.9 149.8 213.0 149.9Q215.0 150.0 215.8 151.1Z" fill="#b08a9c"/>
<path d="M227.8 153.8Q227.3 156.3 224.6 156.3Q222.0 156.3 220.1 155.0Q218.3 153.7 218.9 151.5Q219.5 149.3 222.0 148.8Q224.4 148.3 226.4 149.8Q228.3 151.3 227.8 153.8Z" fill="#34193f"/>
<path d="M226.5 153.5Q226.5 155.4 224.2 155.7Q221.8 155.9 219.9 154.6Q218.0 153.3 219.0 151.4Q219.9 149.5 222.1 149.2Q224.2 148.8 225.4 150.2Q226.6 151.6 226.5 153.5Z" fill="#6f4462"/>
<path d="M225.4 152.8Q226.0 154.0 225.1 155.2Q224.2 156.4 222.4 155.7Q220.6 155.0 221.0 153.8Q221.4 152.6 223.1 152.1Q224.8 151.5 225.4 152.8Z" fill="#b08a9c"/>
<path d="M236.4 156.5Q234.6 158.4 231.7 159.0Q228.7 159.5 227.6 157.6Q226.4 155.6 227.4 154.0Q228.4 152.3 230.9 152.1Q233.4 151.9 235.8 153.3Q238.3 154.6 236.4 156.5Z" fill="#34193f"/>
<path d="M235.1 156.0Q233.9 157.5 231.6 157.6Q229.3 157.8 227.4 156.6Q225.4 155.3 226.8 153.7Q228.2 152.1 230.6 152.2Q233.0 152.4 234.6 153.5Q236.3 154.6 235.1 156.0Z" fill="#6f4462"/>
<path d="M234.6 156.5Q234.9 157.7 232.7 158.2Q230.4 158.7 229.2 157.6Q228.1 156.4 229.2 155.4Q230.4 154.3 232.3 154.8Q234.2 155.3 234.6 156.5Z" fill="#b08a9c"/>
<path d="M244.3 160.5Q243.3 162.3 240.6 162.4Q237.8 162.6 235.7 161.3Q233.5 160.1 234.7 158.4Q236.0 156.6 238.8 156.1Q241.6 155.5 243.4 157.1Q245.2 158.7 244.3 160.5Z" fill="#34193f"/>
<path d="M244.2 158.7Q244.6 160.4 242.4 161.5Q240.2 162.5 237.7 161.9Q235.2 161.2 235.2 159.6Q235.1 158.0 237.0 157.1Q238.8 156.2 241.3 156.6Q243.9 157.0 244.2 158.7Z" fill="#6f4462"/>
<path d="M242.3 161.2Q242.1 162.3 239.6 162.2Q237.2 162.2 236.8 161.0Q236.3 159.8 238.1 159.3Q240.0 158.7 241.3 159.4Q242.6 160.1 242.3 161.2Z" fill="#b08a9c"/>
<path d="M251.8 163.4Q252.1 165.6 249.2 166.8Q246.3 168.0 244.1 166.4Q241.9 164.8 242.2 162.9Q242.4 161.0 244.7 160.1Q246.9 159.3 249.2 160.2Q251.6 161.2 251.8 163.4Z" fill="#34193f"/>
<path d="M251.2 161.6Q251.9 163.5 249.9 164.7Q248.0 165.8 245.6 165.6Q243.2 165.3 242.6 163.7Q242.0 162.1 243.6 161.0Q245.2 159.9 247.8 159.8Q250.5 159.7 251.2 161.6Z" fill="#6f4462"/>
<path d="M249.7 164.1Q249.4 165.3 247.5 165.8Q245.7 166.4 244.5 165.3Q243.2 164.3 244.5 163.2Q245.8 162.2 247.9 162.6Q250.0 162.9 249.7 164.1Z" fill="#b08a9c"/>
<path d="M257.0 168.8Q256.4 171.1 253.1 171.7Q249.9 172.2 248.4 170.4Q246.9 168.5 247.5 166.7Q248.1 164.9 250.6 164.4Q253.1 164.0 255.3 165.3Q257.5 166.6 257.0 168.8Z" fill="#34193f"/>
<path d="M256.0 167.9Q256.5 169.6 253.9 170.2Q251.2 170.7 249.4 169.7Q247.6 168.7 247.7 167.1Q247.8 165.6 249.9 164.7Q252.0 163.9 253.7 165.0Q255.4 166.1 256.0 167.9Z" fill="#6f4462"/>
<path d="M254.8 168.8Q255.1 170.0 253.1 170.4Q251.0 170.8 249.9 169.8Q248.7 168.9 249.7 167.8Q250.6 166.7 252.6 167.2Q254.5 167.7 254.8 168.8Z" fill="#b08a9c"/>
<path d="M260.3 172.4Q261.0 174.3 258.5 175.3Q256.0 176.3 253.1 175.9Q250.3 175.5 250.0 173.3Q249.7 171.2 252.1 170.1Q254.5 169.0 257.0 169.7Q259.5 170.4 260.3 172.4Z" fill="#34193f"/>
<path d="M258.5 171.3Q259.3 172.6 258.4 174.0Q257.4 175.4 255.2 175.0Q253.0 174.7 251.3 173.5Q249.7 172.3 251.3 170.9Q252.9 169.5 255.2 169.8Q257.6 170.1 258.5 171.3Z" fill="#6f4462"/>
<path d="M257.9 173.5Q258.5 174.4 256.9 174.9Q255.4 175.4 253.8 174.9Q252.2 174.3 253.0 173.3Q253.8 172.4 255.5 172.5Q257.3 172.6 257.9 173.5Z" fill="#b08a9c"/>
<path d="M262.1 181.1Q261.8 183.6 259.4 184.5Q257.0 185.3 255.3 183.9Q253.7 182.5 253.3 180.4Q252.8 178.2 255.2 177.5Q257.6 176.7 260.0 177.7Q262.4 178.6 262.1 181.1Z" fill="#34193f"/>
<path d="M261.3 179.9Q261.7 182.0 259.9 183.3Q258.1 184.5 256.1 183.8Q254.1 183.0 253.7 181.3Q253.3 179.5 254.8 178.1Q256.3 176.6 258.6 177.2Q260.9 177.9 261.3 179.9Z" fill="#6f4462"/>
<path d="M259.6 182.1Q259.4 183.2 258.0 183.5Q256.7 183.8 255.7 182.9Q254.7 182.1 255.7 181.1Q256.8 180.1 258.3 180.6Q259.9 181.0 259.6 182.1Z" fill="#b08a9c"/>
<path d="M259.4 189.7Q259.5 191.5 257.8 192.4Q256.2 193.4 254.0 192.9Q251.7 192.4 251.8 190.5Q251.9 188.6 253.6 187.4Q255.4 186.3 257.4 187.1Q259.4 188.0 259.4 189.7Z" fill="#34193f"/>
<path d="M259.0 190.2Q258.5 191.7 256.7 192.4Q254.9 193.1 253.3 192.0Q251.7 190.9 252.1 189.3Q252.5 187.7 254.4 187.2Q256.4 186.8 258.0 187.8Q259.5 188.8 259.0 190.2Z" fill="#6f4462"/>
<path d="M258.1 191.6Q258.2 192.6 256.3 192.9Q254.5 193.1 253.8 192.0Q253.1 190.9 254.4 190.2Q255.6 189.6 256.9 190.0Q258.1 190.5 258.1 191.6Z" fill="#b08a9c"/>
<path d="M136.2 189.5Q135.6 191.7 134.0 191.6Q132.5 191.4 131.6 190.0Q130.6 188.5 131.2 186.8Q131.9 185.1 133.2 184.8Q134.5 184.5 135.7 186.0Q136.8 187.4 136.2 189.5Z" fill="#5a3444"/>
<path d="M135.8 188.0Q135.4 189.8 134.2 190.5Q133.0 191.1 131.9 190.1Q130.8 189.2 131.1 187.4Q131.4 185.6 132.6 185.0Q133.8 184.4 135.0 185.3Q136.2 186.3 135.8 188.0Z" fill="#b48c7c"/>
<path d="M134.4 187.3Q134.1 188.6 132.8 188.6Q131.6 188.6 131.5 187.5Q131.3 186.3 132.0 185.3Q132.7 184.3 133.7 185.1Q134.7 185.9 134.4 187.3Z" fill="#e6c8ae"/>
<path d="M136.2 195.5Q136.5 197.7 135.3 199.2Q134.1 200.6 132.6 200.1Q131.0 199.6 130.6 197.4Q130.2 195.2 131.4 193.8Q132.7 192.5 134.3 192.9Q135.9 193.3 136.2 195.5Z" fill="#5a3444"/>
<path d="M135.7 197.6Q135.1 199.4 133.6 199.7Q132.1 200.0 131.5 198.3Q130.9 196.6 131.4 195.2Q131.9 193.7 133.1 193.3Q134.4 192.8 135.3 194.3Q136.2 195.8 135.7 197.6Z" fill="#b48c7c"/>
<path d="M134.3 194.9Q134.4 196.2 133.4 196.7Q132.4 197.2 131.5 196.4Q130.6 195.6 131.2 194.6Q131.9 193.5 133.0 193.5Q134.2 193.5 134.3 194.9Z" fill="#e6c8ae"/>
<path d="M259.7 189.6Q259.4 191.7 258.3 193.1Q257.1 194.4 255.6 193.5Q254.1 192.5 253.9 190.1Q253.8 187.7 255.3 186.4Q256.8 185.2 258.4 186.3Q260.0 187.4 259.7 189.6Z" fill="#34193f"/>
<path d="M259.4 190.4Q259.3 192.4 257.9 192.5Q256.6 192.7 255.5 191.8Q254.5 191.0 254.6 189.2Q254.7 187.4 256.0 186.6Q257.4 185.8 258.4 187.2Q259.4 188.5 259.4 190.4Z" fill="#6f4462"/>
<path d="M257.7 188.5Q257.8 189.8 256.8 190.4Q255.8 191.0 255.1 190.0Q254.5 188.9 254.9 187.7Q255.4 186.5 256.5 186.9Q257.7 187.3 257.7 188.5Z" fill="#b08a9c"/>
<path d="M259.9 199.0Q259.8 201.0 258.6 201.9Q257.4 202.9 255.9 202.1Q254.5 201.2 254.8 199.1Q255.2 197.0 256.4 195.6Q257.6 194.1 258.8 195.6Q260.1 197.1 259.9 199.0Z" fill="#34193f"/>
<path d="M259.3 197.3Q259.9 198.8 259.2 200.1Q258.5 201.3 257.1 201.8Q255.8 202.3 255.3 200.5Q254.9 198.7 255.6 197.4Q256.3 196.1 257.5 196.0Q258.7 195.8 259.3 197.3Z" fill="#6f4462"/>
<path d="M258.2 197.3Q258.2 198.5 257.4 199.0Q256.6 199.6 255.9 198.8Q255.2 198.1 255.6 197.2Q256.0 196.2 257.0 196.1Q258.1 196.1 258.2 197.3Z" fill="#b08a9c"/>
</g>
</g>
<use href="#isl" x="334" y="42.2"/><use href="#isl" x="145.5" y="157.8"/>
<g>
<polygon points="167.5,175.5 176.53,162.86 175.99,176.0" fill="#7cb434"/>
<ellipse cx="166.5" cy="175.9" rx="6.75" ry="1.8" fill="#1b5a2c"/>
<path d="M166.0 165.7Q170.3 171.0 173.2 175.4Q169.6 177.0 166.0 176.3Q162.4 177.0 158.8 175.4Q161.7 171.0 166.0 165.7Z" fill="#1b5a2c"/>
<path d="M165.8 166.2Q169.3 170.9 171.6 174.8Q168.7 176.4 165.8 175.7Q162.9 176.4 160.0 174.8Q162.3 170.9 165.8 166.2Z" fill="#2a8a36"/>
<path d="M164.4 166.5Q166.2 170.5 167.4 173.8Q165.9 175.4 164.4 174.7Q162.9 175.4 161.3 173.8Q162.6 170.5 164.4 166.5Z" fill="#56bc46"/>
<path d="M166.0 161.6Q169.7 167.0 172.1 171.3Q169.1 172.9 166.0 172.2Q162.9 172.9 159.9 171.3Q162.3 167.0 166.0 161.6Z" fill="#1b5a2c"/>
<path d="M165.8 162.1Q168.8 166.9 170.7 170.7Q168.3 172.3 165.8 171.6Q163.3 172.3 160.9 170.7Q162.8 166.9 165.8 162.1Z" fill="#2a8a36"/>
<path d="M164.6 162.4Q166.2 166.4 167.2 169.7Q165.9 171.3 164.6 170.6Q163.3 171.3 162.0 169.7Q163.1 166.4 164.6 162.4Z" fill="#56bc46"/>
<path d="M166.0 157.6Q169.1 162.9 171.1 167.3Q168.6 168.9 166.0 168.2Q163.4 168.9 160.9 167.3Q162.9 162.9 166.0 157.6Z" fill="#1b5a2c"/>
<path d="M165.8 158.1Q168.2 162.8 169.9 166.7Q167.8 168.3 165.8 167.6Q163.8 168.3 161.7 166.7Q163.4 162.8 165.8 158.1Z" fill="#2a8a36"/>
<path d="M164.9 158.4Q166.1 162.4 167.0 165.7Q165.9 167.3 164.9 166.6Q163.8 167.3 162.7 165.7Q163.6 162.4 164.9 158.4Z" fill="#56bc46"/>
<path d="M166.0 154.0Q168.5 159.1 170.1 163.2Q168.1 164.8 166.0 164.1Q163.9 164.8 161.9 163.2Q163.5 159.1 166.0 154.0Z" fill="#1b5a2c"/>
<path d="M165.8 154.5Q167.7 158.9 169.0 162.6Q167.4 164.2 165.8 163.5Q164.2 164.2 162.6 162.6Q163.9 158.9 165.8 154.5Z" fill="#2a8a36"/>
<path d="M165.1 154.8Q166.1 158.5 166.8 161.6Q165.9 163.2 165.1 162.5Q164.3 163.2 163.4 161.6Q164.1 158.5 165.1 154.8Z" fill="#56bc46"/>
<polygon points="204.9,163 213.54000000000002,150.05 213.02,163.5" fill="#7cb434"/>
<ellipse cx="203.9" cy="163.4" rx="6.5" ry="1.8" fill="#1b5a2c"/>
<path d="M203.4 153.0Q207.5 158.4 210.3 162.9Q206.8 164.5 203.4 163.8Q200.0 164.5 196.5 162.9Q199.3 158.4 203.4 153.0Z" fill="#1b5a2c"/>
<path d="M203.2 153.5Q206.6 158.3 208.8 162.3Q206.0 163.9 203.2 163.2Q200.4 163.9 197.6 162.3Q199.8 158.3 203.2 153.5Z" fill="#2a8a36"/>
<path d="M201.8 153.8Q203.6 157.9 204.8 161.3Q203.3 162.9 201.8 162.2Q200.4 162.9 198.9 161.3Q200.1 157.9 201.8 153.8Z" fill="#56bc46"/>
<path d="M203.4 148.8Q207.0 154.3 209.3 158.7Q206.4 160.3 203.4 159.6Q200.4 160.3 197.5 158.7Q199.8 154.3 203.4 148.8Z" fill="#1b5a2c"/>
<path d="M203.2 149.3Q206.1 154.2 208.0 158.1Q205.6 159.7 203.2 159.0Q200.8 159.7 198.4 158.1Q200.3 154.2 203.2 149.3Z" fill="#2a8a36"/>
<path d="M202.1 149.6Q203.6 153.8 204.6 157.1Q203.3 158.7 202.1 158.0Q200.8 158.7 199.6 157.1Q200.6 153.8 202.1 149.6Z" fill="#56bc46"/>
<path d="M203.4 144.7Q206.4 150.1 208.3 154.6Q205.9 156.2 203.4 155.5Q200.9 156.2 198.5 154.6Q200.4 150.1 203.4 144.7Z" fill="#1b5a2c"/>
<path d="M203.2 145.2Q205.5 150.0 207.1 154.0Q205.2 155.6 203.2 154.9Q201.2 155.6 199.3 154.0Q200.9 150.0 203.2 145.2Z" fill="#2a8a36"/>
<path d="M202.3 145.5Q203.5 149.6 204.4 153.0Q203.3 154.6 202.3 153.9Q201.3 154.6 200.3 153.0Q201.1 149.6 202.3 145.5Z" fill="#56bc46"/>
<path d="M203.4 141.0Q205.8 146.2 207.4 150.4Q205.4 152.0 203.4 151.3Q201.4 152.0 199.4 150.4Q201.0 146.2 203.4 141.0Z" fill="#1b5a2c"/>
<path d="M203.2 141.5Q205.0 146.1 206.3 149.8Q204.7 151.4 203.2 150.7Q201.7 151.4 200.1 149.8Q201.4 146.1 203.2 141.5Z" fill="#2a8a36"/>
<path d="M202.5 141.8Q203.5 145.7 204.2 148.8Q203.3 150.4 202.5 149.7Q201.7 150.4 200.9 148.8Q201.6 145.7 202.5 141.8Z" fill="#56bc46"/>
<polygon points="219.5,164 228.14,150.74 227.62,164.5" fill="#7cb434"/>
<ellipse cx="218.5" cy="164.4" rx="6.5" ry="1.8" fill="#1b5a2c"/>
<path d="M218.0 153.8Q222.1 159.4 224.9 163.9Q221.4 165.5 218.0 164.8Q214.6 165.5 211.1 163.9Q213.9 159.4 218.0 153.8Z" fill="#1b5a2c"/>
<path d="M217.8 154.3Q221.2 159.2 223.4 163.3Q220.6 164.9 217.8 164.2Q215.0 164.9 212.2 163.3Q214.4 159.2 217.8 154.3Z" fill="#2a8a36"/>
<path d="M216.4 154.6Q218.2 158.8 219.4 162.3Q217.9 163.9 216.4 163.2Q215.0 163.9 213.5 162.3Q214.7 158.8 216.4 154.6Z" fill="#56bc46"/>
<path d="M218.0 149.5Q221.6 155.1 223.9 159.6Q221.0 161.2 218.0 160.5Q215.0 161.2 212.1 159.6Q214.4 155.1 218.0 149.5Z" fill="#1b5a2c"/>
<path d="M217.8 150.0Q220.7 155.0 222.6 159.0Q220.2 160.6 217.8 159.9Q215.4 160.6 213.0 159.0Q214.9 155.0 217.8 150.0Z" fill="#2a8a36"/>
<path d="M216.7 150.3Q218.2 154.6 219.2 158.0Q217.9 159.6 216.7 158.9Q215.4 159.6 214.2 158.0Q215.2 154.6 216.7 150.3Z" fill="#56bc46"/>
<path d="M218.0 145.3Q221.0 150.8 222.9 155.4Q220.5 157.0 218.0 156.3Q215.5 157.0 213.1 155.4Q215.0 150.8 218.0 145.3Z" fill="#1b5a2c"/>
<path d="M217.8 145.8Q220.1 150.7 221.7 154.8Q219.8 156.4 217.8 155.7Q215.8 156.4 213.9 154.8Q215.5 150.7 217.8 145.8Z" fill="#2a8a36"/>
<path d="M216.9 146.1Q218.1 150.3 219.0 153.8Q217.9 155.4 216.9 154.7Q215.9 155.4 214.9 153.8Q215.7 150.3 216.9 146.1Z" fill="#56bc46"/>
<path d="M218.0 141.5Q220.4 146.8 222.0 151.1Q220.0 152.7 218.0 152.0Q216.0 152.7 214.0 151.1Q215.6 146.8 218.0 141.5Z" fill="#1b5a2c"/>
<path d="M217.8 142.0Q219.6 146.7 220.9 150.5Q219.3 152.1 217.8 151.4Q216.3 152.1 214.7 150.5Q216.0 146.7 217.8 142.0Z" fill="#2a8a36"/>
<path d="M217.1 142.3Q218.1 146.3 218.8 149.5Q217.9 151.1 217.1 150.4Q216.3 151.1 215.5 149.5Q216.2 146.3 217.1 142.3Z" fill="#56bc46"/>
<polygon points="212.3,166.5 221.33,152.62 220.79000000000002,167.0" fill="#7cb434"/>
<ellipse cx="211.3" cy="166.9" rx="6.75" ry="1.8" fill="#1b5a2c"/>
<path d="M210.8 155.9Q215.1 161.7 218.0 166.4Q214.4 168.0 210.8 167.3Q207.2 168.0 203.7 166.4Q206.5 161.7 210.8 155.9Z" fill="#1b5a2c"/>
<path d="M210.6 156.4Q214.1 161.6 216.4 165.8Q213.5 167.4 210.6 166.7Q207.7 167.4 204.8 165.8Q207.1 161.6 210.6 156.4Z" fill="#2a8a36"/>
<path d="M209.2 156.7Q211.0 161.2 212.2 164.8Q210.7 166.4 209.2 165.7Q207.7 166.4 206.1 164.8Q207.4 161.2 209.2 156.7Z" fill="#56bc46"/>
<path d="M210.8 151.5Q214.5 157.2 216.9 162.0Q213.9 163.6 210.8 162.9Q207.7 163.6 204.7 162.0Q207.1 157.2 210.8 151.5Z" fill="#1b5a2c"/>
<path d="M210.6 152.0Q213.6 157.1 215.5 161.4Q213.1 163.0 210.6 162.3Q208.1 163.0 205.7 161.4Q207.6 157.1 210.6 152.0Z" fill="#2a8a36"/>
<path d="M209.4 152.3Q211.0 156.7 212.0 160.4Q210.7 162.0 209.4 161.3Q208.1 162.0 206.8 160.4Q207.9 156.7 209.4 152.3Z" fill="#56bc46"/>
<path d="M210.8 147.0Q213.9 152.8 215.9 157.5Q213.4 159.1 210.8 158.4Q208.2 159.1 205.7 157.5Q207.7 152.8 210.8 147.0Z" fill="#1b5a2c"/>
<path d="M210.6 147.5Q213.0 152.7 214.7 156.9Q212.6 158.5 210.6 157.8Q208.6 158.5 206.5 156.9Q208.2 152.7 210.6 147.5Z" fill="#2a8a36"/>
<path d="M209.7 147.8Q210.9 152.3 211.8 155.9Q210.7 157.5 209.7 156.8Q208.6 157.5 207.5 155.9Q208.4 152.3 209.7 147.8Z" fill="#56bc46"/>
<path d="M210.8 143.0Q213.3 148.5 214.9 153.1Q212.9 154.7 210.8 154.0Q208.7 154.7 206.7 153.1Q208.3 148.5 210.8 143.0Z" fill="#1b5a2c"/>
<path d="M210.6 143.5Q212.5 148.4 213.8 152.5Q212.2 154.1 210.6 153.4Q209.0 154.1 207.4 152.5Q208.7 148.4 210.6 143.5Z" fill="#2a8a36"/>
<path d="M209.9 143.8Q210.9 148.0 211.6 151.5Q210.7 153.1 209.9 152.4Q209.1 153.1 208.2 151.5Q208.9 148.0 209.9 143.8Z" fill="#56bc46"/>
<polygon points="211.2,189.4 220.23,176.76 219.69,189.9" fill="#7cb434"/>
<ellipse cx="210.2" cy="189.8" rx="6.75" ry="1.8" fill="#1b5a2c"/>
<path d="M209.7 179.6Q214.0 184.9 216.8 189.3Q213.3 190.9 209.7 190.2Q206.1 190.9 202.5 189.3Q205.4 184.9 209.7 179.6Z" fill="#1b5a2c"/>
<path d="M209.5 180.1Q213.0 184.8 215.3 188.7Q212.4 190.3 209.5 189.6Q206.6 190.3 203.7 188.7Q206.0 184.8 209.5 180.1Z" fill="#2a8a36"/>
<path d="M208.1 180.4Q209.9 184.4 211.1 187.7Q209.6 189.3 208.1 188.6Q206.6 189.3 205.0 187.7Q206.3 184.4 208.1 180.4Z" fill="#56bc46"/>
<path d="M209.7 175.5Q213.4 180.9 215.8 185.2Q212.8 186.8 209.7 186.1Q206.6 186.8 203.6 185.2Q206.0 180.9 209.7 175.5Z" fill="#1b5a2c"/>
<path d="M209.5 176.0Q212.5 180.8 214.4 184.6Q212.0 186.2 209.5 185.5Q207.0 186.2 204.6 184.6Q206.5 180.8 209.5 176.0Z" fill="#2a8a36"/>
<path d="M208.3 176.3Q209.9 180.3 210.9 183.6Q209.6 185.2 208.3 184.5Q207.0 185.2 205.7 183.6Q206.8 180.3 208.3 176.3Z" fill="#56bc46"/>
<path d="M209.7 171.5Q212.8 176.8 214.8 181.2Q212.3 182.8 209.7 182.1Q207.1 182.8 204.6 181.2Q206.6 176.8 209.7 171.5Z" fill="#1b5a2c"/>
<path d="M209.5 172.0Q211.9 176.7 213.6 180.6Q211.5 182.2 209.5 181.5Q207.5 182.2 205.4 180.6Q207.1 176.7 209.5 172.0Z" fill="#2a8a36"/>
<path d="M208.6 172.3Q209.8 176.3 210.7 179.6Q209.6 181.2 208.6 180.5Q207.5 181.2 206.4 179.6Q207.3 176.3 208.6 172.3Z" fill="#56bc46"/>
<path d="M209.7 167.9Q212.2 173.0 213.8 177.1Q211.8 178.7 209.7 178.0Q207.6 178.7 205.6 177.1Q207.2 173.0 209.7 167.9Z" fill="#1b5a2c"/>
<path d="M209.5 168.4Q211.4 172.8 212.7 176.5Q211.1 178.1 209.5 177.4Q207.9 178.1 206.3 176.5Q207.6 172.8 209.5 168.4Z" fill="#2a8a36"/>
<path d="M208.8 168.7Q209.8 172.4 210.5 175.5Q209.6 177.1 208.8 176.4Q208.0 177.1 207.1 175.5Q207.8 172.4 208.8 168.7Z" fill="#56bc46"/>
<polygon points="181.5,204 190.53,191.05 189.99,204.5" fill="#7cb434"/>
<ellipse cx="180.5" cy="204.4" rx="6.75" ry="1.8" fill="#1b5a2c"/>
<path d="M180.0 194.0Q184.3 199.4 187.2 203.9Q183.6 205.5 180.0 204.8Q176.4 205.5 172.8 203.9Q175.7 199.4 180.0 194.0Z" fill="#1b5a2c"/>
<path d="M179.8 194.5Q183.3 199.3 185.6 203.3Q182.7 204.9 179.8 204.2Q176.9 204.9 174.0 203.3Q176.3 199.3 179.8 194.5Z" fill="#2a8a36"/>
<path d="M178.4 194.8Q180.2 198.9 181.4 202.3Q179.9 203.9 178.4 203.2Q176.9 203.9 175.3 202.3Q176.6 198.9 178.4 194.8Z" fill="#56bc46"/>
<path d="M180.0 189.8Q183.7 195.3 186.1 199.7Q183.1 201.3 180.0 200.6Q176.9 201.3 173.9 199.7Q176.3 195.3 180.0 189.8Z" fill="#1b5a2c"/>
<path d="M179.8 190.3Q182.8 195.2 184.7 199.1Q182.3 200.7 179.8 200.0Q177.3 200.7 174.9 199.1Q176.8 195.2 179.8 190.3Z" fill="#2a8a36"/>
<path d="M178.6 190.6Q180.2 194.8 181.2 198.1Q179.9 199.7 178.6 199.0Q177.3 199.7 176.0 198.1Q177.1 194.8 178.6 190.6Z" fill="#56bc46"/>
<path d="M180.0 185.7Q183.1 191.1 185.1 195.6Q182.6 197.2 180.0 196.5Q177.4 197.2 174.9 195.6Q176.9 191.1 180.0 185.7Z" fill="#1b5a2c"/>
<path d="M179.8 186.2Q182.2 191.0 183.9 195.0Q181.8 196.6 179.8 195.9Q177.8 196.6 175.7 195.0Q177.4 191.0 179.8 186.2Z" fill="#2a8a36"/>
<path d="M178.9 186.5Q180.1 190.6 181.0 194.0Q179.9 195.6 178.9 194.9Q177.8 195.6 176.7 194.0Q177.6 190.6 178.9 186.5Z" fill="#56bc46"/>
<path d="M180.0 182.0Q182.5 187.2 184.1 191.4Q182.1 193.0 180.0 192.3Q177.9 193.0 175.9 191.4Q177.5 187.2 180.0 182.0Z" fill="#1b5a2c"/>
<path d="M179.8 182.5Q181.7 187.1 183.0 190.8Q181.4 192.4 179.8 191.7Q178.2 192.4 176.6 190.8Q177.9 187.1 179.8 182.5Z" fill="#2a8a36"/>
<path d="M179.1 182.8Q180.1 186.7 180.8 189.8Q179.9 191.4 179.1 190.7Q178.3 191.4 177.4 189.8Q178.1 186.7 179.1 182.8Z" fill="#56bc46"/>
<ellipse cx="154" cy="203" rx="6.6" ry="2.6" fill="#7cb630"/>
<path d="M158.1 197.2Q160.0 199.0 158.8 201.5Q157.6 204.0 154.4 204.7Q151.3 205.4 148.6 203.7Q145.9 202.0 146.2 199.1Q146.4 196.2 148.8 194.3Q151.3 192.3 153.8 193.8Q156.3 195.4 158.1 197.2Z" fill="#1f6a32"/>
<path d="M156.2 196.6Q157.3 198.0 156.7 199.9Q156.1 201.7 153.7 201.9Q151.2 202.2 149.2 201.1Q147.1 200.0 147.9 198.3Q148.7 196.6 150.0 195.4Q151.3 194.2 153.2 194.7Q155.2 195.2 156.2 196.6Z" fill="#3c9c3e"/>
<path d="M154.0 195.9Q154.5 196.8 153.9 197.6Q153.3 198.4 152.1 198.4Q150.9 198.3 150.0 197.9Q149.0 197.6 149.0 196.8Q149.0 196.0 149.8 195.3Q150.6 194.5 152.0 194.8Q153.5 195.1 154.0 195.9Z" fill="#5fbe4a"/>
<ellipse cx="241" cy="188.6" rx="6.6" ry="2.6" fill="#7cb630"/>
<path d="M245.2 182.0Q245.6 184.6 245.1 187.2Q244.7 189.7 241.7 189.5Q238.8 189.4 236.3 188.3Q233.7 187.2 234.4 184.9Q235.0 182.5 236.9 181.3Q238.9 180.2 241.8 179.8Q244.8 179.3 245.2 182.0Z" fill="#1f6a32"/>
<path d="M243.2 182.0Q243.8 183.6 242.9 185.0Q242.1 186.3 240.1 187.3Q238.1 188.3 236.1 187.0Q234.2 185.6 234.7 183.8Q235.3 182.0 236.7 180.5Q238.1 178.9 240.3 179.7Q242.6 180.4 243.2 182.0Z" fill="#3c9c3e"/>
<path d="M240.9 181.7Q241.6 182.4 240.8 183.1Q240.0 183.8 238.8 184.2Q237.6 184.7 236.5 184.0Q235.5 183.3 235.3 182.3Q235.1 181.4 236.4 180.7Q237.6 180.1 238.9 180.5Q240.1 181.0 240.9 181.7Z" fill="#5fbe4a"/>
<ellipse cx="178" cy="207.5" rx="1.8" ry="1.4" fill="#e0c8b0"/>
</g>
<g transform="translate(0,0)">
<polygon points="552.6,216.0 563.5,220.5 548.0,229.0 538.0,226.0" fill="#6eaa30" />
<polygon points="495.7,215.7 525.8,227.2 525.8,242.0 495.7,225.4" fill="#8a8850" />
<polygon points="525.8,227.2 552.6,215.7 552.6,226.0 525.8,242.0" fill="#4e4c2a" />
<polygon points="495.7,215.7 523.8,202.7 552.6,215.7 525.8,227.2" fill="#cfc890" />
<polygon points="499.6,215.6 523.8,204.6 548.6,215.6 525.6,225.6" fill="#22221a" />
<polygon points="499.6,215.6 523.8,204.6 523.8,209.6 505.0,218.0" fill="#3e3e28" />
<polygon points="523.8,204.6 548.6,215.6 543.0,218.0 523.8,209.6" fill="#30301f" />
<polygon points="519.0,206.0 524.5,200.5 529.0,206.5 524.0,209.0" fill="#6a683c" />
<polygon points="519.0,206.0 524.5,200.5 524.0,209.0" fill="#a8a468" />
<polygon points="495.7,223.0 525.8,239.4 525.8,242.0 495.7,225.4" fill="#5e5c34" />
<path d="M507.2 232.4 V228 Q509 224.6 511.6 228 V234.6Z" fill="#2a2a1e"/>
<path d="M506.6 232.2 V227.6 Q509 223.6 512.2 227.8" fill="none" stroke="#d8d2a0" stroke-width="0.9"/>
<ellipse cx="539.6" cy="229" rx="2.6" ry="1.6" fill="#2a2a1e" stroke="#b8b47c" stroke-width="0.8" transform="rotate(-24 539.6 229)"/>
<polyline points="495.9,216.4 525.8,227.9 552.4,216.4" fill="none" stroke="#e8e4c0" stroke-width="1"/>
<rect x="497" y="214.2" width="4" height="2.2" rx="0.8" fill="#dcd8a8"/>
<rect x="507" y="209.6" width="4.5" height="2" rx="0.8" fill="#dcd8a8"/>
<rect x="514" y="206.8" width="3" height="1.8" rx="0.8" fill="#dcd8a8"/>
<rect x="531" y="206.6" width="4" height="2" rx="0.8" fill="#dcd8a8"/>
<rect x="541" y="211" width="4" height="2" rx="0.8" fill="#dcd8a8"/>
<rect x="512" y="220.4" width="5" height="2.4" rx="0.8" fill="#dcd8a8"/>
<rect x="528" y="223.6" width="5" height="2.4" rx="0.8" fill="#dcd8a8"/>
<rect x="538" y="219.6" width="4" height="2" rx="0.8" fill="#dcd8a8"/>
<rect x="500.4" y="207" width="1.5" height="8.6" fill="#c48878"/><rect x="546" y="203" width="1.5" height="11.4" fill="#c48878"/>
<ellipse cx="493.5" cy="228.0" rx="2.6" ry="1.6" fill="#4a4428"/><ellipse cx="493.3" cy="227.3" rx="1.6500000000000001" ry="0.9099999999999999" fill="#b8b080"/>
<ellipse cx="500" cy="235.5" rx="2.6" ry="1.6" fill="#4a4428"/><ellipse cx="499.8" cy="234.8" rx="1.6500000000000001" ry="0.9099999999999999" fill="#b8b080"/>
<ellipse cx="513" cy="238.5" rx="2.0" ry="1.5" fill="#4a4428"/><ellipse cx="512.8" cy="237.8" rx="1.2000000000000002" ry="0.84" fill="#b8b080"/>
<ellipse cx="529.5" cy="244.1" rx="2.8" ry="1.8" fill="#4a4428"/><ellipse cx="529.3" cy="243.4" rx="1.7999999999999998" ry="1.0499999999999998" fill="#b8b080"/>
<ellipse cx="543.5" cy="234.9" rx="3.0" ry="1.8" fill="#4a4428"/><ellipse cx="543.3" cy="234.20000000000002" rx="1.9500000000000002" ry="1.0499999999999998" fill="#b8b080"/>
<ellipse cx="508" cy="252.5" rx="2.6" ry="1.9000000000000001" fill="#4a4428"/><ellipse cx="507.8" cy="251.8" rx="1.6500000000000001" ry="1.1199999999999999" fill="#b8b080"/>
<ellipse cx="521" cy="198.6" rx="5" ry="1" fill="#d8d890"/><ellipse cx="534" cy="199" rx="3.4" ry="0.9" fill="#d8d890"/>
</g>
<g transform="translate(0,0)">
<polygon points="365.2,340.0 377.5,334.0 392.5,341.8 365.4,354.6" fill="#62a632" />
<polygon points="335.2,317.5 350.5,324.6 350.5,363.4 335.2,355.8" fill="#8a8850" />
<polygon points="350.5,324.6 365.2,316.2 365.2,355.4 350.5,363.4" fill="#4c4a28" />
<polygon points="335.2,317.5 348.4,308.8 365.2,316.2 350.5,324.6" fill="#4e4c2a" />
<polygon points="347.4,315.8 347.8,308.6 352.5,309.6 361.0,310.6 365.2,312.0 365.2,317.0 350.8,325.0" fill="#5a582f" />
<polygon points="347.8,308.6 352.5,309.6 352.5,313.0 347.6,315.6" fill="#a8a468" />
<polygon points="352.5,309.6 361.0,310.6 365.2,312.4 365.2,314.0 352.5,312.4" fill="#c8c488" />
<line x1="345" y1="316.4" x2="358" y2="321.4" stroke="#b87a68" stroke-width="0.9"/><line x1="344" y1="321" x2="357" y2="313.6" stroke="#c89078" stroke-width="0.9"/>
<polyline points="335.4,318.3 350.5,325.4 365,317" fill="none" stroke="#dcd8a8" stroke-width="1.1"/>
<line x1="350.5" y1="325" x2="350.5" y2="363" stroke="#cfcc98" stroke-width="0.8"/>
<polyline points="335.2,341.5 350.5,348.6 365.2,340.4" fill="none" stroke="#cfcc98" stroke-width="0.9"/>
<polyline points="335.2,342.6 350.5,349.7 365.2,341.5" fill="none" stroke="#3a3820" stroke-width="0.8"/>
<rect x="340.2" y="329.6" width="2.8" height="8.4" rx="1.3" fill="#2a2a1c" stroke="#cfc890" stroke-width="0.8" transform="skewY(25) translate(0,-159.4)"/>
<rect x="355.6" y="332" width="2.4" height="8" rx="1.2" fill="#26261a" stroke="#8a8850" stroke-width="0.7"/>
<rect x="356.2" y="348.5" width="2.2" height="6.6" rx="1.1" fill="#26261a" stroke="#8a8850" stroke-width="0.7"/>
<path d="M338.8 358 V349.6 Q342 345 345.4 352.4 V361Z" fill="#3a3020"/>
<path d="M339.8 358 V350.8 Q342 347.6 344.4 353 V360.2Z" fill="#c48c70"/>
<path d="M338.4 357.6 V349.2 Q342 344.4 345.8 352.2" fill="none" stroke="#d8d4a0" stroke-width="0.9"/>
<ellipse cx="335.4" cy="361.59999999999997" rx="3.0" ry="1.7" fill="#4a4428"/><ellipse cx="335.2" cy="361.0" rx="1.9500000000000002" ry="0.9799999999999999" fill="#c8c090"/>
<ellipse cx="359" cy="361.0" rx="3.0" ry="1.8" fill="#4a4428"/><ellipse cx="358.8" cy="360.40000000000003" rx="1.9500000000000002" ry="1.0499999999999998" fill="#c8c090"/>
<ellipse cx="367.4" cy="358.79999999999995" rx="2.0" ry="1.7" fill="#4a4428"/><ellipse cx="367.2" cy="358.2" rx="1.2000000000000002" ry="0.9799999999999999" fill="#c8c090"/>
<ellipse cx="292.0" cy="344.40000000000003" rx="3.1" ry="2.6" fill="#6e8a38"/><ellipse cx="291.6" cy="343.8" rx="2.6" ry="2.2" fill="#b8b488"/><ellipse cx="291.20000000000005" cy="343.3" rx="1.56" ry="1.2100000000000002" fill="#e8e4c8"/>
<ellipse cx="299.0" cy="341.6" rx="1.9" ry="1.6" fill="#6e8a38"/><ellipse cx="298.6" cy="341" rx="1.4" ry="1.2" fill="#b8b488"/><ellipse cx="298.20000000000005" cy="340.5" rx="0.84" ry="0.66" fill="#e8e4c8"/>
<ellipse cx="304.0" cy="344.20000000000005" rx="3.1" ry="2.8" fill="#6e8a38"/><ellipse cx="303.6" cy="343.6" rx="2.6" ry="2.4" fill="#b8b488"/><ellipse cx="303.20000000000005" cy="343.1" rx="1.56" ry="1.32" fill="#e8e4c8"/>
<ellipse cx="300.79999999999995" cy="349.20000000000005" rx="3.5" ry="2.8" fill="#6e8a38"/><ellipse cx="300.4" cy="348.6" rx="3" ry="2.4" fill="#b8b488"/><ellipse cx="300.0" cy="348.1" rx="1.7999999999999998" ry="1.32" fill="#e8e4c8"/>
<ellipse cx="311.0" cy="343.8" rx="2.5" ry="1.7999999999999998" fill="#6e8a38"/><ellipse cx="310.6" cy="343.2" rx="2" ry="1.4" fill="#b8b488"/><ellipse cx="310.20000000000005" cy="342.7" rx="1.2" ry="0.77" fill="#e8e4c8"/>
<ellipse cx="291.59999999999997" cy="351.6" rx="2.0" ry="1.6" fill="#6e8a38"/><ellipse cx="291.2" cy="351" rx="1.5" ry="1.2" fill="#b8b488"/><ellipse cx="290.8" cy="350.5" rx="0.8999999999999999" ry="0.66" fill="#e8e4c8"/>
<ellipse cx="331" cy="314.6" rx="5" ry="1" fill="#d8d890"/><ellipse cx="333" cy="321.6" rx="3.4" ry="1.1" fill="#dcd8a0"/>
</g>
<g transform="translate(245.3,113.2)">
<rect x="-5" y="4" width="6" height="1" fill="#27baf0" rx="0.5"/>
<rect x="-6" y="9" width="5" height="1" fill="#27baf0" rx="0.5"/>
<rect x="22" y="7" width="5" height="1" fill="#27baf0" rx="0.5"/>
<rect x="26" y="13" width="4" height="1" fill="#27baf0" rx="0.5"/>
<rect x="-4" y="26.5" width="6" height="1" fill="#27baf0" rx="0.5"/>
<rect x="19" y="32" width="7" height="1" fill="#27baf0" rx="0.5"/>
<rect x="8" y="31" width="5" height="1" fill="#27baf0" rx="0.5"/>
<path d="M-5 21 Q-2 19 2 21 L6 26 L14 29.5 L24 27.5 L31 22 Q35 21 34 24 Q30 30 22 31.5 Q12 33 4 29 Q-3 26 -5 21Z" fill="#b4f2ff"/>
<path d="M-2 22 L4 27 L14 30.5 L24 28.5 L31 23.5" fill="none" stroke="#f0feff" stroke-width="1.6"/>
<polygon points="0.2,17.1 1.1,13.7 3.6,8.6 7.8,2.7 12.0,0.2 17.5,0.2 20.0,1.9 24.2,5.3 25.9,11.2 29.3,17.1 29.9,22.1 26.7,26.3 21.7,28.8 15.0,29.3 9.5,28.4 4.0,23.8 0.6,19.6" fill="#2c1830" />
<polygon points="1.2,17.0 2.1,13.9 4.5,9.2 8.5,3.6 12.2,1.2 17.0,1.1 18.0,1.8 16.8,6.0 15.4,12.0 15.6,18.0 16.0,24.0 14.2,28.2 10.0,27.4 4.8,23.2 1.6,19.4" fill="#d9b184" />
<polygon points="5.6,9.4 9.0,4.6 12.6,2.2 16.6,1.8 15.8,6.0 14.6,11.0 13.4,15.0 10.0,12.6 7.0,13.4" fill="#f2d6a4" />
<polygon points="18.6,1.9 23.4,5.8 25.0,11.4 28.4,17.4 28.9,21.8 26.0,25.6 21.4,27.8 15.2,28.2 16.8,24.0 16.4,18.0 16.2,12.0 17.4,6.0" fill="#6a3a4c" />
<polygon points="1.2,17.0 3.4,12.4 6.4,14.6 9.6,19.0 13.6,22.0 15.8,24.0 14.2,28.2 10.0,27.4 4.8,23.2 1.6,19.4" fill="#c09468" />
<ellipse cx="6.5" cy="13.5" rx="1.1" ry="1" fill="#3a2030"/>
<ellipse cx="9" cy="10.5" rx="0.9900000000000001" ry="0.9" fill="#3a2030"/>
<ellipse cx="4.5" cy="18" rx="1.1" ry="1" fill="#3a2030"/>
<ellipse cx="8" cy="17" rx="0.9900000000000001" ry="0.9" fill="#3a2030"/>
<ellipse cx="11" cy="22" rx="1.2100000000000002" ry="1.1" fill="#3a2030"/>
<ellipse cx="13" cy="9" rx="0.8800000000000001" ry="0.8" fill="#3a2030"/>
<ellipse cx="7" cy="21.5" rx="0.8800000000000001" ry="0.8" fill="#3a2030"/>
<ellipse cx="20" cy="6.5" rx="1.8" ry="2.2" fill="#a06c7c"/>
<ellipse cx="21" cy="19" rx="1.2" ry="2.2" fill="#a06c7c"/>
<ellipse cx="24" cy="16" rx="1.6" ry="1.2" fill="#a06c7c"/>
<ellipse cx="19.4" cy="12.5" rx="1.2" ry="1.8" fill="#a06c7c"/>
<ellipse cx="20.4" cy="6" rx="0.9" ry="1.2" fill="#d0a0a8"/><ellipse cx="21.2" cy="18.6" rx="0.6" ry="1.2" fill="#d0a0a8"/>
<ellipse cx="22.5" cy="11" rx="1" ry="1" fill="#2c1830"/>
<ellipse cx="18.5" cy="16" rx="1" ry="1" fill="#2c1830"/>
<ellipse cx="25" cy="21" rx="1.2" ry="1.2" fill="#2c1830"/>
<ellipse cx="20" cy="24" rx="1.2" ry="1.2" fill="#2c1830"/>
<ellipse cx="23" cy="23.5" rx="0.9" ry="0.9" fill="#2c1830"/>
</g>
<g transform="translate(113.6,403.6)">
<rect x="-5" y="4" width="6" height="1" fill="#27baf0" rx="0.5"/>
<rect x="-6" y="9" width="5" height="1" fill="#27baf0" rx="0.5"/>
<rect x="22" y="7" width="5" height="1" fill="#27baf0" rx="0.5"/>
<rect x="26" y="13" width="4" height="1" fill="#27baf0" rx="0.5"/>
<rect x="-4" y="26.5" width="6" height="1" fill="#27baf0" rx="0.5"/>
<rect x="19" y="32" width="7" height="1" fill="#27baf0" rx="0.5"/>
<rect x="8" y="31" width="5" height="1" fill="#27baf0" rx="0.5"/>
<path d="M-5 21 Q-2 19 2 21 L6 26 L14 29.5 L24 27.5 L31 22 Q35 21 34 24 Q30 30 22 31.5 Q12 33 4 29 Q-3 26 -5 21Z" fill="#b4f2ff"/>
<path d="M-2 22 L4 27 L14 30.5 L24 28.5 L31 23.5" fill="none" stroke="#f0feff" stroke-width="1.6"/>
<polygon points="0.2,17.1 1.1,13.7 3.6,8.6 7.8,2.7 12.0,0.2 17.5,0.2 20.0,1.9 24.2,5.3 25.9,11.2 29.3,17.1 29.9,22.1 26.7,26.3 21.7,28.8 15.0,29.3 9.5,28.4 4.0,23.8 0.6,19.6" fill="#2c1830" />
<polygon points="1.2,17.0 2.1,13.9 4.5,9.2 8.5,3.6 12.2,1.2 17.0,1.1 18.0,1.8 16.8,6.0 15.4,12.0 15.6,18.0 16.0,24.0 14.2,28.2 10.0,27.4 4.8,23.2 1.6,19.4" fill="#d9b184" />
<polygon points="5.6,9.4 9.0,4.6 12.6,2.2 16.6,1.8 15.8,6.0 14.6,11.0 13.4,15.0 10.0,12.6 7.0,13.4" fill="#f2d6a4" />
<polygon points="18.6,1.9 23.4,5.8 25.0,11.4 28.4,17.4 28.9,21.8 26.0,25.6 21.4,27.8 15.2,28.2 16.8,24.0 16.4,18.0 16.2,12.0 17.4,6.0" fill="#6a3a4c" />
<polygon points="1.2,17.0 3.4,12.4 6.4,14.6 9.6,19.0 13.6,22.0 15.8,24.0 14.2,28.2 10.0,27.4 4.8,23.2 1.6,19.4" fill="#c09468" />
<ellipse cx="6.5" cy="13.5" rx="1.1" ry="1" fill="#3a2030"/>
<ellipse cx="9" cy="10.5" rx="0.9900000000000001" ry="0.9" fill="#3a2030"/>
<ellipse cx="4.5" cy="18" rx="1.1" ry="1" fill="#3a2030"/>
<ellipse cx="8" cy="17" rx="0.9900000000000001" ry="0.9" fill="#3a2030"/>
<ellipse cx="11" cy="22" rx="1.2100000000000002" ry="1.1" fill="#3a2030"/>
<ellipse cx="13" cy="9" rx="0.8800000000000001" ry="0.8" fill="#3a2030"/>
<ellipse cx="7" cy="21.5" rx="0.8800000000000001" ry="0.8" fill="#3a2030"/>
<ellipse cx="20" cy="6.5" rx="1.8" ry="2.2" fill="#a06c7c"/>
<ellipse cx="21" cy="19" rx="1.2" ry="2.2" fill="#a06c7c"/>
<ellipse cx="24" cy="16" rx="1.6" ry="1.2" fill="#a06c7c"/>
<ellipse cx="19.4" cy="12.5" rx="1.2" ry="1.8" fill="#a06c7c"/>
<ellipse cx="20.4" cy="6" rx="0.9" ry="1.2" fill="#d0a0a8"/><ellipse cx="21.2" cy="18.6" rx="0.6" ry="1.2" fill="#d0a0a8"/>
<ellipse cx="22.5" cy="11" rx="1" ry="1" fill="#2c1830"/>
<ellipse cx="18.5" cy="16" rx="1" ry="1" fill="#2c1830"/>
<ellipse cx="25" cy="21" rx="1.2" ry="1.2" fill="#2c1830"/>
<ellipse cx="20" cy="24" rx="1.2" ry="1.2" fill="#2c1830"/>
<ellipse cx="23" cy="23.5" rx="0.9" ry="0.9" fill="#2c1830"/>
</g>
<g transform="translate(389.8,403.8)">
<rect x="-5" y="4" width="6" height="1" fill="#27baf0" rx="0.5"/>
<rect x="-6" y="9" width="5" height="1" fill="#27baf0" rx="0.5"/>
<rect x="22" y="7" width="5" height="1" fill="#27baf0" rx="0.5"/>
<rect x="26" y="13" width="4" height="1" fill="#27baf0" rx="0.5"/>
<rect x="-4" y="26.5" width="6" height="1" fill="#27baf0" rx="0.5"/>
<rect x="19" y="32" width="7" height="1" fill="#27baf0" rx="0.5"/>
<rect x="8" y="31" width="5" height="1" fill="#27baf0" rx="0.5"/>
<path d="M-5 21 Q-2 19 2 21 L6 26 L14 29.5 L24 27.5 L31 22 Q35 21 34 24 Q30 30 22 31.5 Q12 33 4 29 Q-3 26 -5 21Z" fill="#b4f2ff"/>
<path d="M-2 22 L4 27 L14 30.5 L24 28.5 L31 23.5" fill="none" stroke="#f0feff" stroke-width="1.6"/>
<polygon points="0.2,17.1 1.1,13.7 3.6,8.6 7.8,2.7 12.0,0.2 17.5,0.2 20.0,1.9 24.2,5.3 25.9,11.2 29.3,17.1 29.9,22.1 26.7,26.3 21.7,28.8 15.0,29.3 9.5,28.4 4.0,23.8 0.6,19.6" fill="#2c1830" />
<polygon points="1.2,17.0 2.1,13.9 4.5,9.2 8.5,3.6 12.2,1.2 17.0,1.1 18.0,1.8 16.8,6.0 15.4,12.0 15.6,18.0 16.0,24.0 14.2,28.2 10.0,27.4 4.8,23.2 1.6,19.4" fill="#d9b184" />
<polygon points="5.6,9.4 9.0,4.6 12.6,2.2 16.6,1.8 15.8,6.0 14.6,11.0 13.4,15.0 10.0,12.6 7.0,13.4" fill="#f2d6a4" />
<polygon points="18.6,1.9 23.4,5.8 25.0,11.4 28.4,17.4 28.9,21.8 26.0,25.6 21.4,27.8 15.2,28.2 16.8,24.0 16.4,18.0 16.2,12.0 17.4,6.0" fill="#6a3a4c" />
<polygon points="1.2,17.0 3.4,12.4 6.4,14.6 9.6,19.0 13.6,22.0 15.8,24.0 14.2,28.2 10.0,27.4 4.8,23.2 1.6,19.4" fill="#c09468" />
<ellipse cx="6.5" cy="13.5" rx="1.1" ry="1" fill="#3a2030"/>
<ellipse cx="9" cy="10.5" rx="0.9900000000000001" ry="0.9" fill="#3a2030"/>
<ellipse cx="4.5" cy="18" rx="1.1" ry="1" fill="#3a2030"/>
<ellipse cx="8" cy="17" rx="0.9900000000000001" ry="0.9" fill="#3a2030"/>
<ellipse cx="11" cy="22" rx="1.2100000000000002" ry="1.1" fill="#3a2030"/>
<ellipse cx="13" cy="9" rx="0.8800000000000001" ry="0.8" fill="#3a2030"/>
<ellipse cx="7" cy="21.5" rx="0.8800000000000001" ry="0.8" fill="#3a2030"/>
<ellipse cx="20" cy="6.5" rx="1.8" ry="2.2" fill="#a06c7c"/>
<ellipse cx="21" cy="19" rx="1.2" ry="2.2" fill="#a06c7c"/>
<ellipse cx="24" cy="16" rx="1.6" ry="1.2" fill="#a06c7c"/>
<ellipse cx="19.4" cy="12.5" rx="1.2" ry="1.8" fill="#a06c7c"/>
<ellipse cx="20.4" cy="6" rx="0.9" ry="1.2" fill="#d0a0a8"/><ellipse cx="21.2" cy="18.6" rx="0.6" ry="1.2" fill="#d0a0a8"/>
<ellipse cx="22.5" cy="11" rx="1" ry="1" fill="#2c1830"/>
<ellipse cx="18.5" cy="16" rx="1" ry="1" fill="#2c1830"/>
<ellipse cx="25" cy="21" rx="1.2" ry="1.2" fill="#2c1830"/>
<ellipse cx="20" cy="24" rx="1.2" ry="1.2" fill="#2c1830"/>
<ellipse cx="23" cy="23.5" rx="0.9" ry="0.9" fill="#2c1830"/>
</g>
</g>
</g></svg><div class="a" style="left:0;top:0;filter:blur(.45px)"><div class="a" style="left:93.10px;top:95px;width:14.61px;height:14.7px;background:linear-gradient(to right,rgb(0,0,0) 0%,rgb(8,0,0) 13%,rgb(76,0,0) 24%,rgb(184,0,0) 38%,rgb(240,0,0) 52%,rgb(255,0,0) 66%,rgb(255,0,0) 100%),linear-gradient(to top,rgb(0,0,0) 0%,rgb(0,0,0) 13%,rgb(0,61,0) 23%,rgb(0,178,0) 34%,rgb(0,237,0) 46%,rgb(0,255,0) 60%,rgb(0,255,0) 100%),rgb(0,0,0);background-blend-mode:screen,screen,normal"></div><div class="a" style="left:107.66px;top:95px;width:14.61px;height:14.7px;background:linear-gradient(to right,rgb(0,0,0) 0%,rgb(8,0,0) 13%,rgb(76,0,0) 24%,rgb(184,0,0) 38%,rgb(240,0,0) 52%,rgb(255,0,0) 66%,rgb(255,0,0) 100%),linear-gradient(to top,rgb(0,0,0) 0%,rgb(0,0,0) 13%,rgb(0,61,0) 23%,rgb(0,178,0) 34%,rgb(0,237,0) 46%,rgb(0,255,0) 60%,rgb(0,255,0) 100%),rgb(0,0,13);background-blend-mode:screen,screen,normal"></div><div class="a" style="left:122.22px;top:95px;width:14.61px;height:14.7px;background:linear-gradient(to right,rgb(0,0,0) 0%,rgb(8,0,0) 13%,rgb(76,0,0) 24%,rgb(184,0,0) 38%,rgb(240,0,0) 52%,rgb(255,0,0) 66%,rgb(255,0,0) 100%),linear-gradient(to top,rgb(0,0,0) 0%,rgb(0,0,0) 13%,rgb(0,61,0) 23%,rgb(0,178,0) 34%,rgb(0,237,0) 46%,rgb(0,255,0) 60%,rgb(0,255,0) 100%),rgb(0,0,38);background-blend-mode:screen,screen,normal"></div><div class="a" style="left:136.79px;top:95px;width:14.61px;height:14.7px;background:linear-gradient(to right,rgb(0,0,0) 0%,rgb(8,0,0) 13%,rgb(76,0,0) 24%,rgb(184,0,0) 38%,rgb(240,0,0) 52%,rgb(255,0,0) 66%,rgb(255,0,0) 100%),linear-gradient(to top,rgb(0,0,0) 0%,rgb(0,0,0) 13%,rgb(0,61,0) 23%,rgb(0,178,0) 34%,rgb(0,237,0) 46%,rgb(0,255,0) 60%,rgb(0,255,0) 100%),rgb(0,0,71);background-blend-mode:screen,screen,normal"></div><div class="a" style="left:151.35px;top:95px;width:14.61px;height:14.7px;background:linear-gradient(to right,rgb(0,0,0) 0%,rgb(8,0,0) 13%,rgb(76,0,0) 24%,rgb(184,0,0) 38%,rgb(240,0,0) 52%,rgb(255,0,0) 66%,rgb(255,0,0) 100%),linear-gradient(to top,rgb(0,0,0) 0%,rgb(0,0,0) 13%,rgb(0,61,0) 23%,rgb(0,178,0) 34%,rgb(0,237,0) 46%,rgb(0,255,0) 60%,rgb(0,255,0) 100%),rgb(0,0,107);background-blend-mode:screen,screen,normal"></div><div class="a" style="left:165.91px;top:95px;width:14.61px;height:14.7px;background:linear-gradient(to right,rgb(0,0,0) 0%,rgb(8,0,0) 13%,rgb(76,0,0) 24%,rgb(184,0,0) 38%,rgb(240,0,0) 52%,rgb(255,0,0) 66%,rgb(255,0,0) 100%),linear-gradient(to top,rgb(0,0,0) 0%,rgb(0,0,0) 13%,rgb(0,61,0) 23%,rgb(0,178,0) 34%,rgb(0,237,0) 46%,rgb(0,255,0) 60%,rgb(0,255,0) 100%),rgb(0,0,143);background-blend-mode:screen,screen,normal"></div><div class="a" style="left:180.47px;top:95px;width:14.61px;height:14.7px;background:linear-gradient(to right,rgb(0,0,0) 0%,rgb(8,0,0) 13%,rgb(76,0,0) 24%,rgb(184,0,0) 38%,rgb(240,0,0) 52%,rgb(255,0,0) 66%,rgb(255,0,0) 100%),linear-gradient(to top,rgb(0,0,0) 0%,rgb(0,0,0) 13%,rgb(0,61,0) 23%,rgb(0,178,0) 34%,rgb(0,237,0) 46%,rgb(0,255,0) 60%,rgb(0,255,0) 100%),rgb(0,0,178);background-blend-mode:screen,screen,normal"></div><div class="a" style="left:195.04px;top:95px;width:14.61px;height:14.7px;background:linear-gradient(to right,rgb(0,0,0) 0%,rgb(8,0,0) 13%,rgb(76,0,0) 24%,rgb(184,0,0) 38%,rgb(240,0,0) 52%,rgb(255,0,0) 66%,rgb(255,0,0) 100%),linear-gradient(to top,rgb(0,0,0) 0%,rgb(0,0,0) 13%,rgb(0,61,0) 23%,rgb(0,178,0) 34%,rgb(0,237,0) 46%,rgb(0,255,0) 60%,rgb(0,255,0) 100%),rgb(0,0,204);background-blend-mode:screen,screen,normal"></div><div class="a" style="left:209.60px;top:95px;width:14.61px;height:14.7px;background:linear-gradient(to right,rgb(0,0,0) 0%,rgb(8,0,0) 13%,rgb(76,0,0) 24%,rgb(184,0,0) 38%,rgb(240,0,0) 52%,rgb(255,0,0) 66%,rgb(255,0,0) 100%),linear-gradient(to top,rgb(0,0,0) 0%,rgb(0,0,0) 13%,rgb(0,61,0) 23%,rgb(0,178,0) 34%,rgb(0,237,0) 46%,rgb(0,255,0) 60%,rgb(0,255,0) 100%),rgb(0,0,224);background-blend-mode:screen,screen,normal"></div><div class="a" style="left:224.16px;top:95px;width:14.61px;height:14.7px;background:linear-gradient(to right,rgb(0,0,0) 0%,rgb(8,0,0) 13%,rgb(76,0,0) 24%,rgb(184,0,0) 38%,rgb(240,0,0) 52%,rgb(255,0,0) 66%,rgb(255,0,0) 100%),linear-gradient(to top,rgb(0,0,0) 0%,rgb(0,0,0) 13%,rgb(0,61,0) 23%,rgb(0,178,0) 34%,rgb(0,237,0) 46%,rgb(0,255,0) 60%,rgb(0,255,0) 100%),rgb(0,0,237);background-blend-mode:screen,screen,normal"></div><div class="a" style="left:238.72px;top:95px;width:14.61px;height:14.7px;background:linear-gradient(to right,rgb(0,0,0) 0%,rgb(8,0,0) 13%,rgb(76,0,0) 24%,rgb(184,0,0) 38%,rgb(240,0,0) 52%,rgb(255,0,0) 66%,rgb(255,0,0) 100%),linear-gradient(to top,rgb(0,0,0) 0%,rgb(0,0,0) 13%,rgb(0,61,0) 23%,rgb(0,178,0) 34%,rgb(0,237,0) 46%,rgb(0,255,0) 60%,rgb(0,255,0) 100%),rgb(0,0,245);background-blend-mode:screen,screen,normal"></div><div class="a" style="left:253.29px;top:95px;width:14.61px;height:14.7px;background:linear-gradient(to right,rgb(0,0,0) 0%,rgb(8,0,0) 13%,rgb(76,0,0) 24%,rgb(184,0,0) 38%,rgb(240,0,0) 52%,rgb(255,0,0) 66%,rgb(255,0,0) 100%),linear-gradient(to top,rgb(0,0,0) 0%,rgb(0,0,0) 13%,rgb(0,61,0) 23%,rgb(0,178,0) 34%,rgb(0,237,0) 46%,rgb(0,255,0) 60%,rgb(0,255,0) 100%),rgb(0,0,250);background-blend-mode:screen,screen,normal"></div><div class="a" style="left:267.85px;top:95px;width:14.61px;height:14.7px;background:linear-gradient(to right,rgb(0,0,0) 0%,rgb(8,0,0) 13%,rgb(76,0,0) 24%,rgb(184,0,0) 38%,rgb(240,0,0) 52%,rgb(255,0,0) 66%,rgb(255,0,0) 100%),linear-gradient(to top,rgb(0,0,0) 0%,rgb(0,0,0) 13%,rgb(0,61,0) 23%,rgb(0,178,0) 34%,rgb(0,237,0) 46%,rgb(0,255,0) 60%,rgb(0,255,0) 100%),rgb(0,0,255);background-blend-mode:screen,screen,normal"></div><div class="a" style="left:282.41px;top:95px;width:14.61px;height:14.7px;background:linear-gradient(to right,rgb(0,0,0) 0%,rgb(8,0,0) 13%,rgb(76,0,0) 24%,rgb(184,0,0) 38%,rgb(240,0,0) 52%,rgb(255,0,0) 66%,rgb(255,0,0) 100%),linear-gradient(to top,rgb(0,0,0) 0%,rgb(0,0,0) 13%,rgb(0,61,0) 23%,rgb(0,178,0) 34%,rgb(0,237,0) 46%,rgb(0,255,0) 60%,rgb(0,255,0) 100%),rgb(0,0,255);background-blend-mode:screen,screen,normal"></div><div class="a" style="left:296.98px;top:95px;width:14.61px;height:14.7px;background:linear-gradient(to right,rgb(0,0,0) 0%,rgb(8,0,0) 13%,rgb(76,0,0) 24%,rgb(184,0,0) 38%,rgb(240,0,0) 52%,rgb(255,0,0) 66%,rgb(255,0,0) 100%),linear-gradient(to top,rgb(0,0,0) 0%,rgb(0,0,0) 13%,rgb(0,61,0) 23%,rgb(0,178,0) 34%,rgb(0,237,0) 46%,rgb(0,255,0) 60%,rgb(0,255,0) 100%),rgb(0,0,255);background-blend-mode:screen,screen,normal"></div><div class="a" style="left:311.54px;top:95px;width:14.61px;height:14.7px;background:linear-gradient(to right,rgb(0,0,0) 0%,rgb(8,0,0) 13%,rgb(76,0,0) 24%,rgb(184,0,0) 38%,rgb(240,0,0) 52%,rgb(255,0,0) 66%,rgb(255,0,0) 100%),linear-gradient(to top,rgb(0,0,0) 0%,rgb(0,0,0) 13%,rgb(0,61,0) 23%,rgb(0,178,0) 34%,rgb(0,237,0) 46%,rgb(0,255,0) 60%,rgb(0,255,0) 100%),rgb(0,0,255);background-blend-mode:screen,screen,normal"></div></div>
<svg width="800" height="535" viewBox="0 0 800 535" style="left:0;top:0" font-family="Liberation Sans, sans-serif"><circle cx="30.25" cy="18.5" r="3.5" fill="#262626" />
<circle cx="39" cy="18.5" r="3.5" fill="#262626" />
<circle cx="47.75" cy="18.5" r="3.5" fill="#262626" />
<circle cx="30.25" cy="18.5" r="2.95" fill="#f6605b" />
<circle cx="39" cy="18.5" r="2.95" fill="#fabd3e" />
<circle cx="47.75" cy="18.5" r="2.95" fill="#3dd04c" />
<text x="400" y="20.1" font-size="5.25" fill="#dedede" text-anchor="middle" textLength="125" lengthAdjust="spacingAndGlyphs" >Affinity Photo - world_original.png [Modified] (209.4%)</text>
<rect x="35" y="27.8" width="12" height="11.8" fill="#272727" rx="1.5" />
<path d="M41 29.6 L45.6 37.6 Q45.8 38.4 45 38.4 L37 38.4 Q36.2 38.4 36.4 37.6 Z" fill="#b24fd0" stroke="#b24fd0" stroke-width="1.2" stroke-linejoin="round"/>
<path d="M41 31.2 L43.2 35.2 L38.8 35.2Z" fill="#e39af0" stroke="none" stroke-width="1" />
<circle cx="41" cy="35.6" r="1.5" fill="#2a1533" />
<circle cx="57" cy="34.2" r="4.3" fill="#4a5a48" stroke="#8a6a5e" stroke-width="1.3"/>
<circle cx="57" cy="34.2" r="2.5" fill="#262b33" stroke="#5f7f9a" stroke-width="1"/>
<path d="M73 29.6 L77 31.9 L77 36.5 L73 38.8 L69 36.5 L69 31.9Z" fill="#6f7a86" stroke="#9aa3ad" stroke-width="0.7" />
<path d="M73 29.6 L77 31.9 L73 34.2Z" fill="#b08a8a" stroke="none" stroke-width="1" />
<path d="M69 36.5 L73 38.8 L73 34.2Z" fill="#8aa07a" stroke="none" stroke-width="1" />
<path d="M77 36.5 L73 38.8 L74.5 34.2Z" fill="#a99a70" stroke="none" stroke-width="1" />
<circle cx="73" cy="34.2" r="1.9" fill="#c9ccd0" stroke="#4a4f55" stroke-width="0.7"/>
<rect x="84.4" y="29.8" width="1.6" height="8.8" fill="#b8623a" rx="0" />
<rect x="92" y="29.8" width="1.6" height="8.8" fill="#b8623a" rx="0" />
<rect x="86" y="29.8" width="1.4" height="8.8" fill="#4f6cae" rx="0" />
<rect x="90.6" y="29.8" width="1.4" height="8.8" fill="#4f6cae" rx="0" />
<path d="M86.8 31 L89 34.4 L91.2 31 L91.2 37.6 L89 35.2 L86.8 37.6Z" fill="#3f4f8f" stroke="none" stroke-width="1" />
<rect x="87.6" y="33.6" width="2.8" height="1.4" fill="#9aa8c8" rx="0" />
<line x1="101.6" y1="34.6" x2="107.4" y2="31.4" stroke="#b9c2c9" stroke-width="0.9" />
<line x1="101.6" y1="34.6" x2="107" y2="37.8" stroke="#b9c2c9" stroke-width="0.9" />
<circle cx="101.8" cy="34.4" r="2.3" fill="#8aaac4" />
<circle cx="107.6" cy="31.4" r="1.8" fill="#62a898" />
<circle cx="107.2" cy="37.8" r="1.7" fill="#d2ac84" />
<rect x="186.3" y="28.2" width="62.2" height="11.5" fill="#3e3e3e" rx="1.5" />
<line x1="201.7" y1="28.2" x2="201.7" y2="39.7" stroke="#2f2f2f" stroke-width="0.6" />
<line x1="217.3" y1="28.2" x2="217.3" y2="39.7" stroke="#2f2f2f" stroke-width="0.6" />
<line x1="233" y1="28.2" x2="233" y2="39.7" stroke="#2f2f2f" stroke-width="0.6" />
<circle cx="194.4" cy="34" r="4" fill="#f4f4f4" />
<path d="M190.6 32.8 A4 4 0 0 1 194.4 30 L194.4 32.8Z" fill="#e8483a" stroke="none" stroke-width="1" />
<path d="M194.4 30 A4 4 0 0 1 198.2 32.8 L194.4 32.8Z" fill="#3aa0e8" stroke="none" stroke-width="1" />
<rect x="190.5" y="33" width="5.2" height="1.9" fill="#4fd23a" rx="0" />
<circle cx="194.4" cy="34" r="4" fill="none" stroke="#1c2a30" stroke-width="0.6"/>
<circle cx="209.4" cy="34" r="4.2" fill="#111" />
<path d="M209.9 29.9 A4.2 4.2 0 0 0 209.9 38.1Z" fill="#fff" stroke="none" stroke-width="1" />
<path d="M206 31.6 A4.2 4.2 0 0 0 206 36.4 Z" fill="#fff" stroke="none" stroke-width="1" />
<rect x="210.6" y="30.2" width="1.3" height="7.6" fill="#f2f2f2" rx="0" />
<g transform="translate(225,34)">
<path d="M0 0 L0.00 -3.90 A3.9 3.9 0 0 1 2.89 -2.62Z" fill="#ff3030"/>
<path d="M0 0 L2.76 -2.76 A3.9 3.9 0 0 1 3.90 0.19Z" fill="#ffb020"/>
<path d="M0 0 L3.90 0.00 A3.9 3.9 0 0 1 2.62 2.89Z" fill="#e8f020"/>
<path d="M0 0 L2.76 2.76 A3.9 3.9 0 0 1 -0.19 3.90Z" fill="#40e040"/>
<path d="M0 0 L0.00 3.90 A3.9 3.9 0 0 1 -2.89 2.62Z" fill="#20d0c0"/>
<path d="M0 0 L-2.76 2.76 A3.9 3.9 0 0 1 -3.90 -0.19Z" fill="#3060ff"/>
<path d="M0 0 L-3.90 0.00 A3.9 3.9 0 0 1 -2.62 -2.89Z" fill="#9030f0"/>
<path d="M0 0 L-2.76 -2.76 A3.9 3.9 0 0 1 0.19 -3.90Z" fill="#f030c0"/>
</g>
<circle cx="225" cy="34" r="4.1" fill="none" stroke="#2a1a3a" stroke-width="0.7"/>
<defs><linearGradient id="wb" x1="0.2" y1="0" x2="0.8" y2="1"><stop offset="0" stop-color="#4aa0f0"/><stop offset="0.38" stop-color="#e8f2ff"/><stop offset="0.6" stop-color="#fff"/><stop offset="1" stop-color="#f08030"/></linearGradient></defs>
<circle cx="241" cy="34" r="4" fill="url(#wb)" stroke="#1a2a38" stroke-width="0.7"/>
<rect x="322.2" y="28.3" width="46.8" height="11.3" fill="#3e3e3e" rx="1.5" />
<line x1="337.8" y1="28.3" x2="337.8" y2="39.7" stroke="#2f2f2f" stroke-width="0.6" />
<line x1="353.6" y1="28.3" x2="353.6" y2="39.7" stroke="#2f2f2f" stroke-width="0.6" />
<rect x="326.4" y="30.4" width="7.2" height="7.2" fill="none" rx="0" stroke="#6e6e6e" stroke-width="0.7" stroke-dasharray="1.1 0.7"/>
<rect x="342.2" y="30.4" width="7.2" height="7.2" fill="#444" rx="0" stroke="#555" stroke-width="0.5"/>
<line x1="342.4" y1="30.4" x2="349.4" y2="37.6" stroke="#e0393f" stroke-width="1.1" />
<rect x="357.9" y="30.2" width="7.8" height="7.8" fill="#f4f4f4" rx="0" />
<path d="M361.8 30.2 L365.7 30.2 L365.7 38 L361.8 38Z" fill="#111" stroke="none" stroke-width="1" />
<path d="M361.8 31.6 L364.2 34.1 L361.8 36.6Z" fill="#f4f4f4" stroke="none" stroke-width="1" />
<path d="M361.8 31.6 L359.6 34.1 L361.8 36.6Z" fill="#222" stroke="none" stroke-width="1" />
<rect x="376.5" y="28.3" width="23" height="11.3" fill="#3e3e3e" rx="1.5" />
<rect x="380.8" y="30" width="8.4" height="8.2" fill="#f4f4f4" rx="0.8" />
<circle cx="385" cy="34.1" r="2.1" fill="#111" />
<circle cx="385" cy="34.1" r="0.8" fill="#777" />
<path d="M394.3 33.2 L397.7 33.2 L396 35.4Z" fill="#d8d8d8" stroke="none" stroke-width="1" />
<rect x="474" y="28.3" width="45" height="11.3" fill="#262626" rx="1.5" />
<rect x="519.6" y="28.3" width="7" height="11.3" fill="#3c3c3c" rx="1" />
<line x1="489" y1="28.3" x2="489" y2="39.7" stroke="#2d2d2d" stroke-width="0.6" />
<line x1="504.2" y1="28.3" x2="504.2" y2="39.7" stroke="#2d2d2d" stroke-width="0.6" />
<rect x="478.2" y="30.6" width="6.6" height="6.8" fill="#8e9499" rx="0.6" />
<rect x="480.3" y="32.9" width="2.3" height="2.3" fill="#e8262e" rx="0" />
<line x1="479" y1="31.3" x2="479" y2="36.7" stroke="#b6babd" stroke-width="0.4" />
<line x1="484" y1="31.3" x2="484" y2="36.7" stroke="#6b7075" stroke-width="0.4" />
<rect x="492.8" y="32" width="4" height="4.2" fill="#b9bcc0" rx="0.4" />
<rect x="496.6" y="31.6" width="4.2" height="5" fill="#e8262e" rx="0.6" />
<rect x="497.6" y="33.1" width="1.6" height="1.9" fill="#f2f2f2" rx="0" />
<line x1="493.4" y1="34.1" x2="496.4" y2="34.1" stroke="#777" stroke-width="0.5" />
<path d="M508.6 36.6 L512.4 32.4 A2.2 2.2 0 0 1 515.6 35.4 L511.8 38.4" fill="none" stroke="#e8304a" stroke-width="1.9" stroke-linecap="butt"/>
<path d="M508.1 36.1 L509.3 37.3" fill="none" stroke="#f4f4f4" stroke-width="1.9" />
<path d="M511.2 37.9 L512.4 39" fill="none" stroke="#f4f4f4" stroke-width="1.9" />
<path d="M521.4 33.2 L524.8 33.2 L523.1 35.4Z" fill="#d8d8d8" stroke="none" stroke-width="1" />
<rect x="533.6" y="28.3" width="17.2" height="11.3" fill="#3e3e3e" rx="1.5" />
<rect x="540.4" y="30.2" width="3.4" height="7.8" fill="#f4f4f4" rx="1.7" stroke="#111" stroke-width="0.8"/>
<line x1="542.1" y1="30.4" x2="542.1" y2="33" stroke="#111" stroke-width="0.7" />
<rect x="624.2" y="28.5" width="62.8" height="11.2" fill="#3e3e3e" rx="1.5" />
<line x1="640" y1="28.5" x2="640" y2="39.7" stroke="#303030" stroke-width="0.6" />
<line x1="655.8" y1="28.5" x2="655.8" y2="39.7" stroke="#303030" stroke-width="0.6" />
<line x1="671.4" y1="28.5" x2="671.4" y2="39.7" stroke="#303030" stroke-width="0.6" />
<rect x="629" y="31.2" width="4.2" height="4.2" fill="#4d4d4d" rx="0" />
<rect x="631" y="33" width="4.2" height="4.2" fill="#585858" rx="0" />
<rect x="645" y="31.2" width="4.2" height="4.2" fill="#4d4d4d" rx="0" />
<rect x="647" y="33" width="4.2" height="4.2" fill="#585858" rx="0" />
<rect x="660.6" y="31.2" width="4.2" height="4.2" fill="#4d4d4d" rx="0" />
<rect x="662.6" y="33" width="4.2" height="4.2" fill="#585858" rx="0" />
<rect x="676" y="31.2" width="4.2" height="4.2" fill="#4d4d4d" rx="0" />
<rect x="678" y="33" width="4.2" height="4.2" fill="#585858" rx="0" />
<rect x="693.8" y="28.5" width="17.2" height="11.2" fill="#3e3e3e" rx="1.5" />
<rect x="699.2" y="31.8" width="5.8" height="1.1" fill="#6a6a6a" rx="0" />
<rect x="699.2" y="34.6" width="4.2" height="1.1" fill="#6a6a6a" rx="0" />
<rect x="718" y="28.5" width="48" height="11.2" fill="#3e3e3e" rx="1.5" />
<line x1="734" y1="28.5" x2="734" y2="39.7" stroke="#303030" stroke-width="0.6" />
<line x1="749.8" y1="28.5" x2="749.8" y2="39.7" stroke="#303030" stroke-width="0.6" />
<rect x="726.6" y="34.2" width="4.2" height="4" fill="#3f9ae8" rx="0.3" />
<circle cx="725.2" cy="33.2" r="3.2" fill="#f0f0f0" />
<circle cx="740.8" cy="33.2" r="3.2" fill="#f0f0f0" />
<rect x="741.4" y="33.6" width="5" height="4.6" fill="#3f9ae8" rx="0.3" />
<circle cx="757.4" cy="34" r="3.6" fill="#f0f0f0" />
<path d="M757.6 34.2 L761 34.2 A3.6 3.6 0 0 1 757.6 37.6Z" fill="#3f9ae8" stroke="none" stroke-width="1" />
<text x="33" y="53" font-size="4.61" fill="#ececec" text-anchor="start" textLength="8.2" lengthAdjust="spacingAndGlyphs"  stroke="#ececec" stroke-width="0.22">Pan</text>
<line x1="46.8" y1="46" x2="46.8" y2="56" stroke="#3a3a3a" stroke-width="0.5" />
<text x="54" y="53" font-size="4.75" fill="#ececec" text-anchor="start" textLength="84.6" lengthAdjust="spacingAndGlyphs"  stroke="#ececec" stroke-width="0.22">600 × 400px, 0.24MP, RGBA/8 - Display</text>
<line x1="144.4" y1="46" x2="144.4" y2="56" stroke="#3a3a3a" stroke-width="0.5" />
<text x="150.4" y="53" font-size="4.64" fill="#ececec" text-anchor="start" textLength="34.8" lengthAdjust="spacingAndGlyphs"  stroke="#ececec" stroke-width="0.22">No Camera Data</text>
<line x1="190.4" y1="46" x2="190.4" y2="56" stroke="#3a3a3a" stroke-width="0.5" />
<text x="196.4" y="53" font-size="4.69" fill="#ececec" text-anchor="start" textLength="12" lengthAdjust="spacingAndGlyphs"  stroke="#ececec" stroke-width="0.22">Units:</text>
<rect x="212.4" y="47" width="46.6" height="8" fill="#3a3a3a" rx="1.2" />
<text x="214.4" y="53" font-size="4.65" fill="#ececec" text-anchor="start" textLength="12.4" lengthAdjust="spacingAndGlyphs"  stroke="#ececec" stroke-width="0.22">Pixels</text>
<path d="M254.2 50.2 L255.2 48.8 L256.2 50.2Z M254.2 51.8 L255.2 53.2 L256.2 51.8Z" fill="#d0d0d0" stroke="none" stroke-width="1" />
<text x="85.5" y="63.6" font-size="4.31" fill="#7a7a7a" text-anchor="middle" textLength="45" lengthAdjust="spacingAndGlyphs" >level_ungraded.png [M]</text>
<line x1="129" y1="58" x2="129" y2="66.5" stroke="#2c2c2c" stroke-width="0.6" />
<text x="172.5" y="63.6" font-size="4.4" fill="#7a7a7a" text-anchor="middle" textLength="27.4" lengthAdjust="spacingAndGlyphs" >&lt;Untitled&gt; [M]</text>
<line x1="216" y1="58" x2="216" y2="66.5" stroke="#2c2c2c" stroke-width="0.6" />
<text x="259.5" y="63.6" font-size="4.38" fill="#7a7a7a" text-anchor="middle" textLength="57" lengthAdjust="spacingAndGlyphs" >world_graded_affinity.png [M]</text>
<line x1="303" y1="58" x2="303" y2="66.5" stroke="#2c2c2c" stroke-width="0.6" />
<text x="346.5" y="63.6" font-size="4.4" fill="#7a7a7a" text-anchor="middle" textLength="27.4" lengthAdjust="spacingAndGlyphs" >&lt;Untitled&gt; [M]</text>
<line x1="390" y1="58" x2="390" y2="66.5" stroke="#2c2c2c" stroke-width="0.6" />
<text x="433.5" y="63.6" font-size="4.4" fill="#7a7a7a" text-anchor="middle" textLength="27.4" lengthAdjust="spacingAndGlyphs" >&lt;Untitled&gt; [M]</text>
<line x1="477" y1="58" x2="477" y2="66.5" stroke="#2c2c2c" stroke-width="0.6" />
<text x="520.5" y="63.6" font-size="4.4" fill="#7a7a7a" text-anchor="middle" textLength="27.4" lengthAdjust="spacingAndGlyphs" >&lt;Untitled&gt; [M]</text>
<rect x="564.4" y="57.6" width="86.6" height="9" fill="#303030" rx="0" />
<text x="607.5" y="63.6" font-size="4.4" fill="#e2e2e2" text-anchor="middle" textLength="43" lengthAdjust="spacingAndGlyphs" >world_original.png [M]</text>
<path d="M51.29 75V75.8M53.11 75V75.8M54.92 75V75.8M56.73 74.2V75.8M58.55 75V75.8M60.36 75V75.8M62.17 75V75.8M63.99 75V75.8M65.80 74.2V75.8M67.61 75V75.8M69.43 75V75.8M71.24 75V75.8M73.05 75V75.8M74.87 74.2V75.8M76.68 75V75.8M78.49 75V75.8M80.31 75V75.8M82.12 75V75.8M83.93 74.2V75.8M85.75 75V75.8M87.56 75V75.8M89.37 75V75.8M91.19 75V75.8M93.00 72.2V75.8M94.81 75V75.8M96.63 75V75.8M98.44 75V75.8M100.25 75V75.8M102.07 74.2V75.8M103.88 75V75.8M105.69 75V75.8M107.51 75V75.8M109.32 75V75.8M111.13 74.2V75.8M112.95 75V75.8M114.76 75V75.8M116.57 75V75.8M118.39 75V75.8M120.20 74.2V75.8M122.01 75V75.8M123.83 75V75.8M125.64 75V75.8M127.45 75V75.8M129.27 74.2V75.8M131.08 75V75.8M132.89 75V75.8M134.71 75V75.8M136.52 75V75.8M138.33 73.6V75.8M140.15 75V75.8M141.96 75V75.8M143.77 75V75.8M145.59 75V75.8M147.40 74.2V75.8M149.21 75V75.8M151.03 75V75.8M152.84 75V75.8M154.65 75V75.8M156.47 74.2V75.8M158.28 75V75.8M160.09 75V75.8M161.91 75V75.8M163.72 75V75.8M165.53 74.2V75.8M167.35 75V75.8M169.16 75V75.8M170.97 75V75.8M172.79 75V75.8M174.60 74.2V75.8M176.41 75V75.8M178.23 75V75.8M180.04 75V75.8M181.85 75V75.8M183.67 72.2V75.8M185.48 75V75.8M187.29 75V75.8M189.11 75V75.8M190.92 75V75.8M192.73 74.2V75.8M194.55 75V75.8M196.36 75V75.8M198.17 75V75.8M199.99 75V75.8M201.80 74.2V75.8M203.61 75V75.8M205.43 75V75.8M207.24 75V75.8M209.05 75V75.8M210.87 74.2V75.8M212.68 75V75.8M214.49 75V75.8M216.31 75V75.8M218.12 75V75.8M219.93 74.2V75.8M221.75 75V75.8M223.56 75V75.8M225.37 75V75.8M227.19 75V75.8M229.00 73.6V75.8M230.81 75V75.8M232.63 75V75.8M234.44 75V75.8M236.25 75V75.8M238.07 74.2V75.8M239.88 75V75.8M241.69 75V75.8M243.51 75V75.8M245.32 75V75.8M247.13 74.2V75.8M248.95 75V75.8M250.76 75V75.8M252.57 75V75.8M254.39 75V75.8M256.20 74.2V75.8M258.01 75V75.8M259.83 75V75.8M261.64 75V75.8M263.45 75V75.8M265.27 74.2V75.8M267.08 75V75.8M268.89 75V75.8M270.71 75V75.8M272.52 75V75.8M274.33 72.2V75.8M276.15 75V75.8M277.96 75V75.8M279.77 75V75.8M281.59 75V75.8M283.40 74.2V75.8M285.21 75V75.8M287.03 75V75.8M288.84 75V75.8M290.65 75V75.8M292.47 74.2V75.8M294.28 75V75.8M296.09 75V75.8M297.91 75V75.8M299.72 75V75.8M301.53 74.2V75.8M303.35 75V75.8M305.16 75V75.8M306.97 75V75.8M308.79 75V75.8M310.60 74.2V75.8M312.41 75V75.8M314.23 75V75.8M316.04 75V75.8M317.85 75V75.8M319.67 73.6V75.8M321.48 75V75.8M323.29 75V75.8M325.11 75V75.8M326.92 75V75.8M328.73 74.2V75.8M330.55 75V75.8M332.36 75V75.8M334.17 75V75.8M335.99 75V75.8M337.80 74.2V75.8M339.61 75V75.8M341.43 75V75.8M343.24 75V75.8M345.05 75V75.8M346.87 74.2V75.8M348.68 75V75.8M350.49 75V75.8M352.31 75V75.8M354.12 75V75.8M355.93 74.2V75.8M357.75 75V75.8M359.56 75V75.8M361.37 75V75.8M363.19 75V75.8M365.00 72.2V75.8M366.81 75V75.8M368.63 75V75.8M370.44 75V75.8M372.25 75V75.8M374.07 74.2V75.8M375.88 75V75.8M377.69 75V75.8M379.51 75V75.8M381.32 75V75.8M383.13 74.2V75.8M384.95 75V75.8M386.76 75V75.8M388.57 75V75.8M390.39 75V75.8M392.20 74.2V75.8M394.01 75V75.8M395.83 75V75.8M397.64 75V75.8M399.45 75V75.8M401.27 74.2V75.8M403.08 75V75.8M404.89 75V75.8M406.71 75V75.8M408.52 75V75.8M410.33 73.6V75.8M412.15 75V75.8M413.96 75V75.8M415.77 75V75.8M417.59 75V75.8M419.40 74.2V75.8M421.21 75V75.8M423.03 75V75.8M424.84 75V75.8M426.65 75V75.8M428.47 74.2V75.8M430.28 75V75.8M432.09 75V75.8M433.91 75V75.8M435.72 75V75.8M437.53 74.2V75.8M439.35 75V75.8M441.16 75V75.8M442.97 75V75.8M444.79 75V75.8M446.60 74.2V75.8M448.41 75V75.8M450.23 75V75.8M452.04 75V75.8M453.85 75V75.8M455.67 72.2V75.8M457.48 75V75.8M459.29 75V75.8M461.11 75V75.8M462.92 75V75.8M464.73 74.2V75.8M466.55 75V75.8M468.36 75V75.8M470.17 75V75.8M471.99 75V75.8M473.80 74.2V75.8M475.61 75V75.8M477.43 75V75.8M479.24 75V75.8M481.05 75V75.8M482.87 74.2V75.8M484.68 75V75.8M486.49 75V75.8M488.31 75V75.8M490.12 75V75.8M491.93 74.2V75.8M493.75 75V75.8M495.56 75V75.8M497.37 75V75.8M499.19 75V75.8M501.00 73.6V75.8M502.81 75V75.8M504.63 75V75.8M506.44 75V75.8M508.25 75V75.8M510.07 74.2V75.8M511.88 75V75.8M513.69 75V75.8M515.51 75V75.8M517.32 75V75.8M519.13 74.2V75.8M520.95 75V75.8M522.76 75V75.8M524.57 75V75.8M526.39 75V75.8M528.20 74.2V75.8M530.01 75V75.8M531.83 75V75.8M533.64 75V75.8M535.45 75V75.8M537.27 74.2V75.8M539.08 75V75.8M540.89 75V75.8M542.71 75V75.8M544.52 75V75.8M546.33 72.2V75.8M548.15 75V75.8M549.96 75V75.8M551.77 75V75.8M553.59 75V75.8M555.40 74.2V75.8M557.21 75V75.8M559.03 75V75.8M560.84 75V75.8M562.65 75V75.8M564.47 74.2V75.8M566.28 75V75.8M568.09 75V75.8M569.91 75V75.8M571.72 75V75.8M573.53 74.2V75.8M575.35 75V75.8M577.16 75V75.8M578.97 75V75.8M580.79 75V75.8M582.60 74.2V75.8M584.41 75V75.8M586.23 75V75.8M588.04 75V75.8M589.85 75V75.8M591.67 73.6V75.8M593.48 75V75.8M595.29 75V75.8M597.11 75V75.8M598.92 75V75.8M600.73 74.2V75.8M602.55 75V75.8M604.36 75V75.8M606.17 75V75.8M607.99 75V75.8M609.80 74.2V75.8M611.61 75V75.8M613.43 75V75.8M615.24 75V75.8M617.05 75V75.8M618.87 74.2V75.8M620.68 75V75.8M622.49 75V75.8M624.31 75V75.8M626.12 75V75.8M627.93 74.2V75.8M629.75 75V75.8M631.56 75V75.8M633.37 75V75.8M635.19 75V75.8M637.00 72.2V75.8M638.81 75V75.8M640.63 75V75.8M642.44 75V75.8M644.25 75V75.8M646.07 74.2V75.8M647.88 75V75.8M649.69 75V75.8M651.51 75V75.8M653.32 75V75.8M655.13 74.2V75.8M656.95 75V75.8M658.76 75V75.8M660.57 75V75.8" fill="none" stroke="#e6e6e6" stroke-width="0.6" />
<text x="93.4" y="72" font-size="3.6" fill="#b8b8b8" text-anchor="middle" >0</text>
<text x="184.06666666666666" y="72" font-size="3.6" fill="#b8b8b8" text-anchor="middle" >100</text>
<text x="274.7333333333333" y="72" font-size="3.6" fill="#b8b8b8" text-anchor="middle" >200</text>
<text x="365.4" y="72" font-size="3.6" fill="#b8b8b8" text-anchor="middle" >300</text>
<text x="456.0666666666666" y="72" font-size="3.6" fill="#b8b8b8" text-anchor="middle" >400</text>
<text x="546.7333333333332" y="72" font-size="3.6" fill="#b8b8b8" text-anchor="middle" >500</text>
<text x="637.4" y="72" font-size="3.6" fill="#b8b8b8" text-anchor="middle" >600</text>
<text x="43.4" y="73.6" font-size="3.4" fill="#a8a8a8" text-anchor="start" >px</text>
<rect x="79.7" y="67" width="1.2" height="8.4" fill="#b0b0b0" rx="0" />
<path d="M48.8 76.87H50.5M49.6 78.68H50.5M49.6 80.49H50.5M49.6 82.31H50.5M49.6 84.12H50.5M48.8 85.93H50.5M49.6 87.75H50.5M49.6 89.56H50.5M49.6 91.37H50.5M49.6 93.19H50.5M46.6 95.00H50.5M49.6 96.81H50.5M49.6 98.63H50.5M49.6 100.44H50.5M49.6 102.25H50.5M48.8 104.07H50.5M49.6 105.88H50.5M49.6 107.69H50.5M49.6 109.51H50.5M49.6 111.32H50.5M48.8 113.13H50.5M49.6 114.95H50.5M49.6 116.76H50.5M49.6 118.57H50.5M49.6 120.39H50.5M48.8 122.20H50.5M49.6 124.01H50.5M49.6 125.83H50.5M49.6 127.64H50.5M49.6 129.45H50.5M48.8 131.27H50.5M49.6 133.08H50.5M49.6 134.89H50.5M49.6 136.71H50.5M49.6 138.52H50.5M48.2 140.33H50.5M49.6 142.15H50.5M49.6 143.96H50.5M49.6 145.77H50.5M49.6 147.59H50.5M48.8 149.40H50.5M49.6 151.21H50.5M49.6 153.03H50.5M49.6 154.84H50.5M49.6 156.65H50.5M48.8 158.47H50.5M49.6 160.28H50.5M49.6 162.09H50.5M49.6 163.91H50.5M49.6 165.72H50.5M48.8 167.53H50.5M49.6 169.35H50.5M49.6 171.16H50.5M49.6 172.97H50.5M49.6 174.79H50.5M48.8 176.60H50.5M49.6 178.41H50.5M49.6 180.23H50.5M49.6 182.04H50.5M49.6 183.85H50.5M46.6 185.67H50.5M49.6 187.48H50.5M49.6 189.29H50.5M49.6 191.11H50.5M49.6 192.92H50.5M48.8 194.73H50.5M49.6 196.55H50.5M49.6 198.36H50.5M49.6 200.17H50.5M49.6 201.99H50.5M48.8 203.80H50.5M49.6 205.61H50.5M49.6 207.43H50.5M49.6 209.24H50.5M49.6 211.05H50.5M48.8 212.87H50.5M49.6 214.68H50.5M49.6 216.49H50.5M49.6 218.31H50.5M49.6 220.12H50.5M48.8 221.93H50.5M49.6 223.75H50.5M49.6 225.56H50.5M49.6 227.37H50.5M49.6 229.19H50.5M48.2 231.00H50.5M49.6 232.81H50.5M49.6 234.63H50.5M49.6 236.44H50.5M49.6 238.25H50.5M48.8 240.07H50.5M49.6 241.88H50.5M49.6 243.69H50.5M49.6 245.51H50.5M49.6 247.32H50.5M48.8 249.13H50.5M49.6 250.95H50.5M49.6 252.76H50.5M49.6 254.57H50.5M49.6 256.39H50.5M48.8 258.20H50.5M49.6 260.01H50.5M49.6 261.83H50.5M49.6 263.64H50.5M49.6 265.45H50.5M48.8 267.27H50.5M49.6 269.08H50.5M49.6 270.89H50.5M49.6 272.71H50.5M49.6 274.52H50.5M46.6 276.33H50.5M49.6 278.15H50.5M49.6 279.96H50.5M49.6 281.77H50.5M49.6 283.59H50.5M48.8 285.40H50.5M49.6 287.21H50.5M49.6 289.03H50.5M49.6 290.84H50.5M49.6 292.65H50.5M48.8 294.47H50.5M49.6 296.28H50.5M49.6 298.09H50.5M49.6 299.91H50.5M49.6 301.72H50.5M48.8 303.53H50.5M49.6 305.35H50.5M49.6 307.16H50.5M49.6 308.97H50.5M49.6 310.79H50.5M48.8 312.60H50.5M49.6 314.41H50.5M49.6 316.23H50.5M49.6 318.04H50.5M49.6 319.85H50.5M48.2 321.67H50.5M49.6 323.48H50.5M49.6 325.29H50.5M49.6 327.11H50.5M49.6 328.92H50.5M48.8 330.73H50.5M49.6 332.55H50.5M49.6 334.36H50.5M49.6 336.17H50.5M49.6 337.99H50.5M48.8 339.80H50.5M49.6 341.61H50.5M49.6 343.43H50.5M49.6 345.24H50.5M49.6 347.05H50.5M48.8 348.87H50.5M49.6 350.68H50.5M49.6 352.49H50.5M49.6 354.31H50.5M49.6 356.12H50.5M48.8 357.93H50.5M49.6 359.75H50.5M49.6 361.56H50.5M49.6 363.37H50.5M49.6 365.19H50.5M46.6 367.00H50.5M49.6 368.81H50.5M49.6 370.63H50.5M49.6 372.44H50.5M49.6 374.25H50.5M48.8 376.07H50.5M49.6 377.88H50.5M49.6 379.69H50.5M49.6 381.51H50.5M49.6 383.32H50.5M48.8 385.13H50.5M49.6 386.95H50.5M49.6 388.76H50.5M49.6 390.57H50.5M49.6 392.39H50.5M48.8 394.20H50.5M49.6 396.01H50.5M49.6 397.83H50.5M49.6 399.64H50.5M49.6 401.45H50.5M48.8 403.27H50.5M49.6 405.08H50.5M49.6 406.89H50.5M49.6 408.71H50.5M49.6 410.52H50.5M48.2 412.33H50.5M49.6 414.15H50.5M49.6 415.96H50.5M49.6 417.77H50.5M49.6 419.59H50.5M48.8 421.40H50.5M49.6 423.21H50.5M49.6 425.03H50.5M49.6 426.84H50.5M49.6 428.65H50.5M48.8 430.47H50.5M49.6 432.28H50.5M49.6 434.09H50.5M49.6 435.91H50.5M49.6 437.72H50.5M48.8 439.53H50.5M49.6 441.35H50.5M49.6 443.16H50.5M49.6 444.97H50.5M49.6 446.79H50.5M48.8 448.60H50.5M49.6 450.41H50.5M49.6 452.23H50.5M49.6 454.04H50.5M49.6 455.85H50.5M46.6 457.67H50.5M49.6 459.48H50.5M49.6 461.29H50.5M49.6 463.11H50.5M49.6 464.92H50.5M48.8 466.73H50.5M49.6 468.55H50.5M49.6 470.36H50.5M49.6 472.17H50.5M49.6 473.99H50.5M48.8 475.80H50.5M49.6 477.61H50.5M49.6 479.43H50.5M49.6 481.24H50.5M49.6 483.05H50.5M48.8 484.87H50.5M49.6 486.68H50.5M49.6 488.49H50.5M49.6 490.31H50.5" fill="none" stroke="#e6e6e6" stroke-width="0.6" />
<text font-size="3.6" fill="#b8b8b8" text-anchor="middle" transform="translate(45.8,95.20) rotate(-90)">0</text>
<text font-size="3.6" fill="#b8b8b8" text-anchor="middle" transform="translate(45.8,185.87) rotate(-90)">100</text>
<text font-size="3.6" fill="#b8b8b8" text-anchor="middle" transform="translate(45.8,276.53) rotate(-90)">200</text>
<text font-size="3.6" fill="#b8b8b8" text-anchor="middle" transform="translate(45.8,367.20) rotate(-90)">300</text>
<text font-size="3.6" fill="#b8b8b8" text-anchor="middle" transform="translate(45.8,457.87) rotate(-90)">400</text>
<rect x="42" y="209.4" width="8.2" height="1.1" fill="#b0b0b0" rx="0" /><rect x="27.2" y="63.9" width="11.3" height="10.8" fill="#1c1c1c" rx="1.2" />
<path d="M29.8 68.60000000000001 Q29.4 67.2 30.6 67.60000000000001 L31.2 65.60000000000001 L32.4 65.0 L33.6 65.10000000000001 L34.8 65.60000000000001 L35.9 66.8 L36.2 69.8 Q36.0 72.4 34.2 73.2 L31.8 73.2 Q30.4 71.60000000000001 29.8 68.60000000000001Z" fill="#e9b48c" stroke="#6b4a3a" stroke-width="0.5" />
<line x1="32.1" y1="65.4" x2="32.3" y2="68.4" stroke="#a8744f" stroke-width="0.45" />
<line x1="33.5" y1="65.3" x2="33.5" y2="68.4" stroke="#a8744f" stroke-width="0.45" />
<line x1="34.8" y1="66.0" x2="34.6" y2="68.60000000000001" stroke="#a8744f" stroke-width="0.45" />
<path d="M30.6 77.76 L35.8 82.36 L33.5 82.66000000000001 L34.7 85.26 L33.5 85.76 L32.3 83.26 L30.6 84.76Z" fill="#2a2a2a" stroke="#dcdcdc" stroke-width="0.8" stroke-linejoin="round"/>
<line x1="29.8" y1="97.72000000000001" x2="33.6" y2="93.72000000000001" stroke="#c8ccd0" stroke-width="1.3" stroke-linecap="round"/>
<line x1="33.2" y1="93.92" x2="35.6" y2="91.32000000000001" stroke="#e0993a" stroke-width="2.2" stroke-linecap="round"/>
<line x1="34.2" y1="92.92" x2="35.6" y2="91.32000000000001" stroke="#c27a20" stroke-width="2.2" stroke-linecap="round"/>
<rect x="30.4" y="104.28" width="5.2" height="5.2" fill="#555" rx="0" stroke="#cfcfcf" stroke-width="0.9"/>
<line x1="30.4" y1="104.28" x2="29.0" y2="102.88" stroke="#cfcfcf" stroke-width="0.8" />
<line x1="35.6" y1="104.28" x2="37.0" y2="102.88" stroke="#cfcfcf" stroke-width="0.8" />
<line x1="30.4" y1="109.47999999999999" x2="29.0" y2="110.88" stroke="#cfcfcf" stroke-width="0.8" />
<line x1="35.6" y1="109.47999999999999" x2="37.0" y2="110.88" stroke="#cfcfcf" stroke-width="0.8" />
<line x1="30.4" y1="122.03999999999999" x2="34.0" y2="118.44" stroke="#d9883a" stroke-width="2.2" stroke-linecap="round"/>
<line x1="34.0" y1="118.44" x2="35.6" y2="116.84" stroke="#f0f0f0" stroke-width="2" stroke-linecap="butt"/>
<line x1="35.2" y1="117.24" x2="36.4" y2="116.03999999999999" stroke="#e0303a" stroke-width="2" stroke-linecap="round"/>
<path d="M29.0 122.24 Q30.4 124.03999999999999 32.4 122.84" fill="none" stroke="#8a8a8a" stroke-width="0.7" stroke-dasharray="0.8 0.5"/>
<line x1="31.8" y1="131.4" x2="36.4" y2="135.8" stroke="#d8d8d8" stroke-width="0.9" stroke-linecap="round"/>
<line x1="35.2" y1="134.8" x2="36.6" y2="136.0" stroke="#888" stroke-width="1.3" />
<path d="M29.4 129.2 L33.2 128.8 L32.2 131.6 L29.8 131.8Z" fill="#e8a040" stroke="none" stroke-width="1" />
<line x1="33.4" y1="129.6" x2="35.0" y2="128.0" stroke="#e8c070" stroke-width="0.6" />
<rect x="29.1" y="140.96" width="7.8" height="7.6" fill="#2d2d2d" rx="0" stroke="#6a6a6a" stroke-width="0.8"/>
<path d="M30.0 156.72 L33.4 153.52 L37.0 157.72 L34.0 160.52 Q32.6 160.92000000000002 30.6 159.12Z" fill="#b9c0c6" stroke="#2a2f35" stroke-width="0.5" />
<path d="M33.4 153.52 L37.0 157.72 L35.6 158.92000000000002 L32.4 154.72Z" fill="#f2f4f6" stroke="none" stroke-width="1" />
<path d="M30.6 155.92000000000002 Q28.4 157.92000000000002 29.4 159.72 Q30.4 158.32 31.2 156.92000000000002Z" fill="#3a78c8" stroke="none" stroke-width="1" />
<path d="M32.6 170.08 L36.30 170.08 A3.7 3.7 0 0 1 35.05 172.85Z" fill="#e83a3a"/>
<path d="M32.6 170.08 L35.22 172.70 A3.7 3.7 0 0 1 32.38 173.77Z" fill="#e8a030"/>
<path d="M32.6 170.08 L32.60 173.78 A3.7 3.7 0 0 1 29.83 172.53Z" fill="#d8d830"/>
<path d="M32.6 170.08 L29.98 172.70 A3.7 3.7 0 0 1 28.91 169.86Z" fill="#40c850"/>
<path d="M32.6 170.08 L28.90 170.08 A3.7 3.7 0 0 1 30.15 167.31Z" fill="#30b0c8"/>
<path d="M32.6 170.08 L29.98 167.46 A3.7 3.7 0 0 1 32.82 166.39Z" fill="#4060e0"/>
<path d="M32.6 170.08 L32.60 166.38 A3.7 3.7 0 0 1 35.37 167.63Z" fill="#9040d0"/>
<path d="M32.6 170.08 L35.22 167.46 A3.7 3.7 0 0 1 36.29 170.30Z" fill="#d040a0"/>
<circle cx="32.6" cy="170.08" r="3.8" fill="none" stroke="#20242a" stroke-width="0.6"/>
<line x1="33.6" y1="169.08" x2="36.6" y2="165.88" stroke="#c8b8a0" stroke-width="0.9" stroke-linecap="round"/>
<line x1="30.2" y1="185.24" x2="32.4" y2="182.84" stroke="#c98a4a" stroke-width="1.8" stroke-linecap="round"/>
<line x1="32.4" y1="182.84" x2="33.6" y2="181.44" stroke="#e8e8e8" stroke-width="1.6" />
<line x1="33.6" y1="181.44" x2="36.0" y2="178.64000000000001" stroke="#e03a3a" stroke-width="1.5" stroke-linecap="round"/>
<path d="M36.4 185.84 L37.6 184.64000000000001 L37.6 185.84Z" fill="#777" stroke="none" stroke-width="1" />
<path d="M29.8 194.20000000000002 A3.4 3.4 0 1 0 35.6 197.4" fill="none" stroke="#e0407a" stroke-width="2" />
<path d="M31.0 198.20000000000002 A3.4 3.4 0 0 0 35.6 197.4" fill="none" stroke="#3a8ae0" stroke-width="2" />
<line x1="32.4" y1="195.4" x2="34.4" y2="193.20000000000002" stroke="#d9904a" stroke-width="1.6" stroke-linecap="round"/>
<line x1="34.4" y1="193.20000000000002" x2="36.4" y2="191.0" stroke="#e8d8c0" stroke-width="1.2" stroke-linecap="round"/>
<g transform="rotate(-40 33.0 207.36)">
<rect x="28.8" y="205.46" width="8.4" height="3.8" fill="#f0a850" rx="1.2" stroke="#1a222c" stroke-width="0.5"/>
<rect x="28.8" y="205.46" width="2.6" height="3.8" fill="#f4f4f4" rx="1" />
<line x1="31.4" y1="205.46" x2="31.4" y2="209.26000000000002" stroke="#e03a3a" stroke-width="0.7" />
</g>
<path d="M36.4 211.16000000000003 L37.6 209.96 L37.6 211.16000000000003Z" fill="#777" stroke="none" stroke-width="1" />
<circle cx="32.1" cy="219.02" r="2.9" fill="#7a858c" stroke="#b8c0c6" stroke-width="0.7"/>
<line x1="34.3" y1="221.22000000000003" x2="36.4" y2="223.32000000000002" stroke="#9aa2a8" stroke-width="1.3" stroke-linecap="round"/>
<path d="M36.6 223.92000000000002 L37.8 222.72000000000003 L37.8 223.92000000000002Z" fill="#777" stroke="none" stroke-width="1" />
<circle cx="33.0" cy="230.28000000000003" r="1.5" fill="#3a9ae8" />
<rect x="32.2" y="231.08" width="1.6" height="2" fill="#3a8ad8" rx="0" />
<path d="M29.8 234.48000000000002 Q33.0 231.28000000000003 36.2 234.48000000000002Z" fill="#e8b08a" stroke="none" stroke-width="1" />
<rect x="29.2" y="234.48000000000002" width="7.6" height="1.5" fill="#d08850" rx="0.4" />
<g transform="rotate(-38 33.0 245.04000000000002)">
<rect x="29.0" y="243.74" width="8" height="2.6" fill="#d8dce0" rx="1.3" stroke="#222a32" stroke-width="0.4"/>
<rect x="34.8" y="243.74" width="2.2" height="2.6" fill="#e03a3a" rx="1" />
<rect x="29.0" y="243.74" width="2.6" height="2.6" fill="#e09040" rx="1" />
</g>
<path d="M29.6 242.84000000000003 L33.4 245.84000000000003 M31.6 241.84000000000003 L34.6 244.44000000000003" fill="none" stroke="#cfd3d7" stroke-width="0.6" />
<path d="M30.2 261.0 Q30.4 259.0 32.4 258.8 Q30.4 257.0 31.8 255.00000000000003 Q34.0 253.40000000000003 36.0 255.20000000000002 Q37.2 257.20000000000005 35.6 259.40000000000003 Q34.2 260.8 32.6 260.20000000000005 L31.6 261.6Z" fill="#e8b890" stroke="#5a4438" stroke-width="0.4" />
<path d="M32.0 258.20000000000005 Q33.4 256.6 35.0 257.20000000000005" fill="none" stroke="#b88460" stroke-width="0.6" />
<path d="M36.4 261.6 L37.6 260.40000000000003 L37.6 261.6Z" fill="#777" stroke="none" stroke-width="1" />
<g transform="rotate(-40 33.0 270.16)">
<rect x="28.6" y="268.26000000000005" width="8.8" height="3.8" fill="#f09868" rx="1.9" stroke="#141c24" stroke-width="0.5"/>
<rect x="31.5" y="268.56" width="3" height="3.2" fill="#f8c8a8" rx="0" />
</g>
<path d="M36.4 274.16 L37.6 272.96000000000004 L37.6 274.16Z" fill="#777" stroke="none" stroke-width="1" />
<path d="M29.2 285.72 L30.4 282.32000000000005 L33.6 280.72 L35.4 282.72 L33.6 285.32000000000005Z" fill="#e8b860" stroke="#1a222c" stroke-width="0.5" />
<circle cx="32.4" cy="283.12" r="0.7" fill="#2a2a2a" />
<path d="M33.8 280.52000000000004 L35.4 278.92 L37.0 280.52000000000004 L35.6 282.52000000000004Z" fill="#c84848" stroke="#1a222c" stroke-width="0.4" />
<path d="M36.4 286.72 L37.6 285.52000000000004 L37.6 286.72Z" fill="#777" stroke="none" stroke-width="1" />
<rect x="28.6" y="291.58000000000004" width="8" height="7.2" fill="#3a90e0" rx="0.4" stroke="#3a2c1a" stroke-width="0.6"/>
<path d="M36.8 299.88000000000005 L38.0 298.68 L38.0 299.88000000000005Z" fill="#777" stroke="none" stroke-width="1" />
<text x="32.6" y="311.04" font-family="Liberation Serif, serif" font-size="9.6" fill="#e4e4e4" text-anchor="middle">A</text>
<path d="M36.4 312.04 L37.6 310.84000000000003 L37.6 312.04Z" fill="#777" stroke="none" stroke-width="1" />
<rect x="29.8" y="317.40000000000003" width="6.4" height="6.2" fill="#3a3d44" rx="0.6" stroke="#454850" stroke-width="0.5"/>
<line x1="29.8" y1="319.6" x2="36.2" y2="319.6" stroke="#2d2f34" stroke-width="0.5" />
<line x1="29.8" y1="321.6" x2="36.2" y2="321.6" stroke="#2d2f34" stroke-width="0.5" />
<path d="M36.4 324.6 L37.6 323.40000000000003 L37.6 324.6Z" fill="#555" stroke="none" stroke-width="1" />
<circle cx="32.4" cy="332.15999999999997" r="3.1" fill="#8ec4f0" stroke="#e8eef2" stroke-width="0.8"/>
<circle cx="31.8" cy="331.35999999999996" r="1.2" fill="#cfe6fa" />
<line x1="34.8" y1="334.56" x2="36.6" y2="336.56" stroke="#d8a070" stroke-width="1.4" stroke-linecap="round"/><defs>
<linearGradient id="gR"><stop offset="0" stop-color="#18e6f4"/><stop offset="0.5" stop-color="#6ef0f8"/><stop offset="1" stop-color="#fff"/></linearGradient>
<linearGradient id="gG"><stop offset="0" stop-color="#f420e4"/><stop offset="0.5" stop-color="#f868ec"/><stop offset="1" stop-color="#fff"/></linearGradient>
<linearGradient id="gB"><stop offset="0" stop-color="#f4ec18"/><stop offset="0.5" stop-color="#f8f268"/><stop offset="1" stop-color="#fff"/></linearGradient>
<linearGradient id="gH"><stop offset="0" stop-color="#f00"/><stop offset="0.17" stop-color="#ff0"/><stop offset="0.33" stop-color="#0f0"/><stop offset="0.5" stop-color="#0ff"/><stop offset="0.67" stop-color="#00f"/><stop offset="0.83" stop-color="#f0f"/><stop offset="1" stop-color="#f00"/></linearGradient>
<linearGradient id="gV" x1="0" y1="0" x2="0" y2="1"><stop offset="0" stop-color="#fff" stop-opacity="1"/><stop offset="0.35" stop-color="#fff" stop-opacity="0"/><stop offset="0.55" stop-color="#000" stop-opacity="0"/><stop offset="1" stop-color="#000" stop-opacity="1"/></linearGradient>
<linearGradient id="gO"><stop offset="0" stop-color="#f4f4f4"/><stop offset="1" stop-color="#f4f4f4" stop-opacity="0.05"/></linearGradient>
</defs>
<line x1="661.0" y1="57.5" x2="661.0" y2="491" stroke="#2a2a2a" stroke-width="0.6" />
<rect x="661.0" y="57.5" width="115" height="9.3" fill="#313131" rx="0" />
<rect x="664.4" y="60.55" width="1.6" height="3.2" fill="#3d3d3d" rx="0" />
<text x="671" y="63.85" font-size="4.67" fill="#9a9a9a" text-anchor="start" textLength="21.299999999999955" lengthAdjust="spacingAndGlyphs" >Histogram</text>
<rect x="694.6999999999999" y="58.1" width="16.900000000000045" height="8.700000000000001" fill="#414141" rx="1" />
<text x="696.3" y="63.85" font-size="4.65" fill="#f4f4f4" text-anchor="start" textLength="13.700000000000045" lengthAdjust="spacingAndGlyphs"  stroke="#f4f4f4" stroke-width="0.22">Colour</text>
<text x="713.5" y="63.85" font-size="4.64" fill="#9a9a9a" text-anchor="start" textLength="20.100000000000023" lengthAdjust="spacingAndGlyphs" >Swatches</text>
<text x="737" y="63.85" font-size="4.69" fill="#9a9a9a" text-anchor="start" textLength="17.200000000000045" lengthAdjust="spacingAndGlyphs" >Brushes</text>
<rect x="768.6" y="60.6" width="4.2" height="3.4" fill="#d8d8d8" rx="0.4" />
<line x1="768.6" y1="62.3" x2="772.8" y2="62.3" stroke="#444" stroke-width="0.4" />
<path d="M772.6 64.6 L774.6 64.6 L773.6 65.8Z" fill="#d8d8d8" stroke="none" stroke-width="1" />
<rect x="661.3" y="66.8" width="114.7" height="91" fill="#3c3c3c" rx="0" />
<circle cx="671.2" cy="76" r="5" fill="#050505" />
<path d="M676.2 71.4 Q678.6 71.6 678.8 74.4" fill="none" stroke="#cfcfcf" stroke-width="0.6" />
<path d="M677.8 74 L678.9 75.4 L679.8 73.8Z" fill="#cfcfcf" stroke="none" stroke-width="1" />
<circle cx="675.7" cy="80.8" r="5.9" fill="#fff" stroke="#0a0a0a" stroke-width="0.9"/>
<circle cx="668.2" cy="84.4" r="2.2" fill="#f4f4f4" stroke="#3a3a3a" stroke-width="0.4"/>
<line x1="666.7" y1="85.9" x2="669.7" y2="82.9" stroke="#e03a3a" stroke-width="0.8" />
<line x1="686.6" y1="77" x2="689.4" y2="74" stroke="#c8ccd0" stroke-width="1.1" stroke-linecap="round"/>
<line x1="689.2" y1="74.2" x2="691" y2="72.2" stroke="#e09a3a" stroke-width="1.7" stroke-linecap="round"/>
<circle cx="697" cy="74.3" r="3" fill="#fff" stroke="#1a1a1a" stroke-width="0.5"/>
<rect x="731.2" y="74.8" width="39.8" height="6.4" fill="#454545" rx="1.2" />
<text x="733.6" y="79.7" font-size="4.26" fill="#bdbdbd" text-anchor="start" textLength="18" lengthAdjust="spacingAndGlyphs" >RGB Hex</text>
<path d="M765.2 77.4 L766.3 76 L767.4 77.4Z M765.2 78.8 L766.3 80.2 L767.4 78.8Z" fill="#d8d8d8" stroke="none" stroke-width="1" />
<text x="664.8" y="96.10000000000001" font-size="4.6" fill="#a8a8a8" text-anchor="start" >R</text>
<rect x="670.4" y="92.2" width="84" height="4.4" fill="#2a2a2a" rx="2.2" />
<rect x="670.9" y="92.80000000000001" width="83" height="3.2" fill="url(#gR)" rx="1.6" />
<circle cx="753" cy="94.4" r="2.7" fill="#dcdcdc" stroke="#8a8a8a" stroke-width="0.5"/>
<rect x="756.8" y="90.7" width="15.6" height="7.4" fill="#454545" rx="1" />
<text x="758.8" y="96.10000000000001" font-size="4.4" fill="#a0a0a0" text-anchor="start" >FF</text>
<text x="664.8" y="105.15" font-size="4.6" fill="#a8a8a8" text-anchor="start" >G</text>
<rect x="670.4" y="101.25" width="84" height="4.4" fill="#2a2a2a" rx="2.2" />
<rect x="670.9" y="101.85000000000001" width="83" height="3.2" fill="url(#gG)" rx="1.6" />
<circle cx="753" cy="103.45" r="2.7" fill="#dcdcdc" stroke="#8a8a8a" stroke-width="0.5"/>
<rect x="756.8" y="99.75" width="15.6" height="7.4" fill="#454545" rx="1" />
<text x="758.8" y="105.15" font-size="4.4" fill="#a0a0a0" text-anchor="start" >FF</text>
<text x="664.8" y="114.2" font-size="4.6" fill="#a8a8a8" text-anchor="start" >B</text>
<rect x="670.4" y="110.3" width="84" height="4.4" fill="#2a2a2a" rx="2.2" />
<rect x="670.9" y="110.9" width="83" height="3.2" fill="url(#gB)" rx="1.6" />
<circle cx="753" cy="112.5" r="2.7" fill="#dcdcdc" stroke="#8a8a8a" stroke-width="0.5"/>
<rect x="756.8" y="108.8" width="15.6" height="7.4" fill="#454545" rx="1" />
<text x="758.8" y="114.2" font-size="4.4" fill="#a0a0a0" text-anchor="start" >FF</text>
<text x="746.6" y="123.6" font-size="4.2" fill="#b8b8b8" text-anchor="middle"  stroke="#b8b8b8" stroke-width="0.22">#:</text>
<rect x="750.4" y="118.6" width="22.4" height="6.8" fill="#454545" rx="1" />
<text x="752.2" y="123.6" font-size="3.93" fill="#a0a0a0" text-anchor="start" textLength="14.4" lengthAdjust="spacingAndGlyphs" >FFFFFF</text>
<rect x="666.6" y="127.1" width="104.6" height="9.6" fill="#111" rx="0.6" />
<rect x="667.2" y="127.7" width="103.4" height="8.4" fill="url(#gH)" rx="0" />
<rect x="667.2" y="127.7" width="103.4" height="8.4" fill="url(#gV)" rx="0" />
<text x="665" y="145.4" font-size="4.6" fill="#d0d0d0" text-anchor="start" textLength="15.6" lengthAdjust="spacingAndGlyphs" >Opacity</text>
<circle cx="668.2" cy="151.3" r="2.8" fill="#fff" stroke="#222" stroke-width="0.4"/>
<rect x="673.6" y="149.9" width="64" height="2.8" fill="#2e2e2e" rx="1.4" />
<path d="M674.40 152.4 a1.1 1.4 0 0 1 2.2 0ZM676.82 152.4 a1.1 1.4 0 0 1 2.2 0ZM679.24 152.4 a1.1 1.4 0 0 1 2.2 0ZM681.66 152.4 a1.1 1.4 0 0 1 2.2 0ZM684.08 152.4 a1.1 1.4 0 0 1 2.2 0ZM686.50 152.4 a1.1 1.4 0 0 1 2.2 0ZM688.92 152.4 a1.1 1.4 0 0 1 2.2 0ZM691.34 152.4 a1.1 1.4 0 0 1 2.2 0ZM693.76 152.4 a1.1 1.4 0 0 1 2.2 0ZM696.18 152.4 a1.1 1.4 0 0 1 2.2 0ZM698.60 152.4 a1.1 1.4 0 0 1 2.2 0ZM701.02 152.4 a1.1 1.4 0 0 1 2.2 0ZM703.44 152.4 a1.1 1.4 0 0 1 2.2 0ZM705.86 152.4 a1.1 1.4 0 0 1 2.2 0ZM708.28 152.4 a1.1 1.4 0 0 1 2.2 0ZM710.70 152.4 a1.1 1.4 0 0 1 2.2 0ZM713.12 152.4 a1.1 1.4 0 0 1 2.2 0ZM715.54 152.4 a1.1 1.4 0 0 1 2.2 0ZM717.96 152.4 a1.1 1.4 0 0 1 2.2 0ZM720.38 152.4 a1.1 1.4 0 0 1 2.2 0ZM722.80 152.4 a1.1 1.4 0 0 1 2.2 0ZM725.22 152.4 a1.1 1.4 0 0 1 2.2 0ZM727.64 152.4 a1.1 1.4 0 0 1 2.2 0ZM730.06 152.4 a1.1 1.4 0 0 1 2.2 0ZM732.48 152.4 a1.1 1.4 0 0 1 2.2 0ZM734.90 152.4 a1.1 1.4 0 0 1 2.2 0Z" fill="url(#gO)"/>
<circle cx="740.7" cy="151.3" r="2.5" fill="#1e1e1e" stroke="#e8e8e8" stroke-width="1"/>
<rect x="747.2" y="147.4" width="18.8" height="7.8" fill="#454545" rx="1" />
<text x="749.6" y="153" font-size="4.09" fill="#e0e0e0" text-anchor="start" textLength="11.6" lengthAdjust="spacingAndGlyphs" >100 %</text>
<rect x="766.6" y="147.4" width="8.6" height="7.8" fill="#454545" rx="1" />
<path d="M769.2 150.6 L772 150.6 L770.6 152.6Z" fill="#d8d8d8" stroke="none" stroke-width="1" />
<rect x="661.0" y="158.8" width="115" height="9.6" fill="#313131" rx="0" />
<rect x="664.4" y="162.00000000000003" width="1.6" height="3.2" fill="#3d3d3d" rx="0" />
<text x="671" y="165.3" font-size="4.8" fill="#9a9a9a" text-anchor="start" textLength="24" lengthAdjust="spacingAndGlyphs" >Adjustment</text>
<rect x="696.4" y="159.4" width="17.2" height="9.0" fill="#414141" rx="1" />
<text x="698" y="165.3" font-size="4.66" fill="#f4f4f4" text-anchor="start" textLength="14" lengthAdjust="spacingAndGlyphs"  stroke="#f4f4f4" stroke-width="0.22">Layers</text>
<text x="715.5" y="165.3" font-size="4.77" fill="#9a9a9a" text-anchor="start" textLength="14.5" lengthAdjust="spacingAndGlyphs" >Effects</text>
<text x="733.5" y="165.3" font-size="4.96" fill="#9a9a9a" text-anchor="start" textLength="13.5" lengthAdjust="spacingAndGlyphs" >Styles</text>
<text x="750" y="165.3" font-size="4.8" fill="#9a9a9a" text-anchor="start" textLength="12" lengthAdjust="spacingAndGlyphs" >Stock</text>
<rect x="661.3" y="168.4" width="114.7" height="12.8" fill="#464646" rx="0" />
<text x="663.6" y="176.2" font-size="4.74" fill="#d8d8d8" text-anchor="start" textLength="17.4" lengthAdjust="spacingAndGlyphs"  stroke="#d8d8d8" stroke-width="0.22">Opacity:</text>
<rect x="687.4" y="170.6" width="21.4" height="8.2" fill="#3f3f3f" rx="1" />
<text x="689.2" y="176.4" font-size="3.88" fill="#6c6c6c" text-anchor="start" textLength="11" lengthAdjust="spacingAndGlyphs" >100 %</text>
<path d="M704.4 174 L706.8 174 L705.6 175.6Z" fill="#8a8a8a" stroke="none" stroke-width="1" />
<rect x="711" y="170.6" width="43.8" height="8.2" fill="#4e4e4e" rx="1" />
<text x="712.6" y="176.4" font-size="4.53" fill="#787878" text-anchor="start" textLength="14.6" lengthAdjust="spacingAndGlyphs" >Normal</text>
<path d="M750.6 173.6 L751.7 172.2 L752.8 173.6Z M750.6 175.6 L751.7 177 L752.8 175.6Z" fill="#d8d8d8" stroke="none" stroke-width="1" />
<circle cx="760.8" cy="174.8" r="2.3" fill="#d0d0d0" />
<circle cx="760.8" cy="174.8" r="0.9" fill="#464646" />
<line x1="762.8" y1="174.8" x2="763.8" y2="174.8" stroke="#d0d0d0" stroke-width="0.8" />
<line x1="762.2142135623731" y1="176.21421356237312" x2="762.9213203435596" y2="176.92132034355964" stroke="#d0d0d0" stroke-width="0.8" />
<line x1="760.8" y1="176.8" x2="760.8" y2="177.8" stroke="#d0d0d0" stroke-width="0.8" />
<line x1="759.3857864376268" y1="176.21421356237312" x2="758.6786796564403" y2="176.92132034355964" stroke="#d0d0d0" stroke-width="0.8" />
<line x1="758.8" y1="174.8" x2="757.8" y2="174.8" stroke="#d0d0d0" stroke-width="0.8" />
<line x1="759.3857864376268" y1="173.3857864376269" x2="758.6786796564403" y2="172.67867965644038" stroke="#d0d0d0" stroke-width="0.8" />
<line x1="760.8" y1="172.8" x2="760.8" y2="171.8" stroke="#d0d0d0" stroke-width="0.8" />
<line x1="762.2142135623731" y1="173.3857864376269" x2="762.9213203435596" y2="172.67867965644038" stroke="#d0d0d0" stroke-width="0.8" />
<rect x="767.4" y="174.4" width="4" height="3.4" fill="#c8c8c8" rx="0.5" />
<path d="M768.2 174.6 V173.2 A1.2 1.2 0 0 1 770.6 173.2 V174.6" fill="none" stroke="#c8c8c8" stroke-width="0.7" />
<rect x="661.3" y="181.2" width="114.7" height="246.6" fill="#2f2f2f" rx="0" />
<rect x="769.5" y="181.2" width="6.5" height="246.6" fill="#393939" rx="0" />
<rect x="661.3" y="181.2" width="107.6" height="14.3" fill="#3c3c3c" rx="0" />
<line x1="661.3" y1="195.5" x2="769.5" y2="195.5" stroke="#343434" stroke-width="0.5" />
<rect x="670.2" y="182.0" width="13.2" height="12.6" fill="#fff" rx="0.4" stroke="#222" stroke-width="0.4"/>
<circle cx="679.6" cy="191.0" r="2.1" fill="#f4f4f4" stroke="#111" stroke-width="0.8"/>
<path d="M678.1 192.5 A2.1 2.1 0 0 0 681.1 189.5Z" fill="#111" stroke="none" stroke-width="1" />
<text x="684.8" y="190.1" font-size="4.68" fill="#7c7c7c" text-anchor="start" textLength="59.6" lengthAdjust="spacingAndGlyphs" >(Colour Balance Adjustment)</text>
<path d="M761.6 188.6 L763.4 190.79999999999998 L766.6 185.79999999999998" fill="none" stroke="#ededed" stroke-width="0.95" stroke-linecap="round" stroke-linejoin="round"/>
<rect x="661.3" y="195.5" width="107.6" height="14.3" fill="#393939" rx="0" />
<line x1="661.3" y1="209.8" x2="769.5" y2="209.8" stroke="#343434" stroke-width="0.5" />
<rect x="670.2" y="196.3" width="13.2" height="12.6" fill="#fff" rx="0.4" stroke="#222" stroke-width="0.4"/>
<circle cx="679.6" cy="205.3" r="2.1" fill="#f4f4f4" stroke="#111" stroke-width="0.8"/>
<path d="M678.1 206.8 A2.1 2.1 0 0 0 681.1 203.8Z" fill="#111" stroke="none" stroke-width="1" />
<text x="684.8" y="204.4" font-size="4.77" fill="#7c7c7c" text-anchor="start" textLength="72.6" lengthAdjust="spacingAndGlyphs" >(Brightness / Contrast Adjustment)</text>
<path d="M761.6 202.9 L763.4 205.1 L766.6 200.1" fill="none" stroke="#ededed" stroke-width="0.95" stroke-linecap="round" stroke-linejoin="round"/>
<rect x="661.3" y="209.79999999999998" width="107.6" height="14.3" fill="#3c3c3c" rx="0" />
<line x1="661.3" y1="224.1" x2="769.5" y2="224.1" stroke="#343434" stroke-width="0.5" />
<rect x="670.2" y="210.6" width="13.2" height="12.6" fill="#fff" rx="0.4" stroke="#222" stroke-width="0.4"/>
<circle cx="679.6" cy="219.6" r="2.1" fill="#f4f4f4" stroke="#111" stroke-width="0.8"/>
<path d="M678.1 221.1 A2.1 2.1 0 0 0 681.1 218.1Z" fill="#111" stroke="none" stroke-width="1" />
<text x="684.8" y="218.7" font-size="4.65" fill="#7c7c7c" text-anchor="start" textLength="57.4" lengthAdjust="spacingAndGlyphs" >(White Balance Adjustment)</text>
<path d="M761.6 217.2 L763.4 219.39999999999998 L766.6 214.39999999999998" fill="none" stroke="#ededed" stroke-width="0.95" stroke-linecap="round" stroke-linejoin="round"/>
<rect x="661.3" y="224.1" width="107.6" height="14.3" fill="#393939" rx="0" />
<line x1="661.3" y1="238.4" x2="769.5" y2="238.4" stroke="#343434" stroke-width="0.5" />
<rect x="670.2" y="224.9" width="13.2" height="12.6" fill="#fff" rx="0.4" stroke="#222" stroke-width="0.4"/>
<circle cx="679.6" cy="233.9" r="2.1" fill="#f4f4f4" stroke="#111" stroke-width="0.8"/>
<path d="M678.1 235.4 A2.1 2.1 0 0 0 681.1 232.4Z" fill="#111" stroke="none" stroke-width="1" />
<text x="684.8" y="233.0" font-size="4.68" fill="#7c7c7c" text-anchor="start" textLength="46" lengthAdjust="spacingAndGlyphs" >(Vibrance Adjustment)</text>
<path d="M761.6 231.5 L763.4 233.7 L766.6 228.7" fill="none" stroke="#ededed" stroke-width="0.95" stroke-linecap="round" stroke-linejoin="round"/>
<rect x="661.3" y="238.39999999999998" width="107.6" height="14.3" fill="#3c3c3c" rx="0" />
<line x1="661.3" y1="252.7" x2="769.5" y2="252.7" stroke="#343434" stroke-width="0.5" />
<rect x="670.2" y="239.2" width="13.2" height="12.6" fill="#2b2b2b" rx="0.4" />
<rect x="670.4" y="244.59999999999997" width="12.8" height="1.6" fill="#8a8fb0" rx="0" />
<rect x="670.4" y="244.99999999999997" width="6" height="0.8" fill="#c0c060" rx="0" />
<rect x="678" y="244.99999999999997" width="5" height="0.8" fill="#b070c0" rx="0" />
<text x="684.8" y="247.29999999999998" font-size="5.07" fill="#f0f0f0" text-anchor="start" textLength="11" lengthAdjust="spacingAndGlyphs"  stroke="#f0f0f0" stroke-width="0.22">lut16</text>
<text x="697.2" y="247.29999999999998" font-size="4.59" fill="#7c7c7c" text-anchor="start" textLength="15.8" lengthAdjust="spacingAndGlyphs" >(Image)</text>
<path d="M761.6 245.79999999999998 L763.4 247.99999999999997 L766.6 242.99999999999997" fill="none" stroke="#ededed" stroke-width="0.95" stroke-linecap="round" stroke-linejoin="round"/>
<rect x="661.3" y="252.7" width="107.6" height="14.3" fill="#393939" rx="0" />
<line x1="661.3" y1="267.0" x2="769.5" y2="267.0" stroke="#343434" stroke-width="0.5" />
<rect x="670.2" y="255.29999999999998" width="13.2" height="9" fill="#3aa0c0" rx="0.4" stroke="#222" stroke-width="0.3"/>
<rect x="672.6" y="257.9" width="1.5" height="1.3" fill="#b08a50" rx="0" />
<rect x="680.6" y="258.9" width="1.5" height="1.3" fill="#b08a50" rx="0" />
<rect x="676.4" y="261.9" width="1.5" height="1.3" fill="#b08a50" rx="0" />
<text x="684.8" y="261.59999999999997" font-size="4.95" fill="#f0f0f0" text-anchor="start" textLength="26.4" lengthAdjust="spacingAndGlyphs"  stroke="#f0f0f0" stroke-width="0.22">Background</text>
<text x="712.8" y="261.59999999999997" font-size="4.59" fill="#7c7c7c" text-anchor="start" textLength="13" lengthAdjust="spacingAndGlyphs" >(Pixel)</text>
<path d="M761.6 260.09999999999997 L763.4 262.3 L766.6 257.3" fill="none" stroke="#ededed" stroke-width="0.95" stroke-linecap="round" stroke-linejoin="round"/>
<rect x="661.3" y="427.8" width="114.7" height="10" fill="#4b4b4b" rx="0" />
<path d="M668 429.6 L672 431.4 L668 433.2 L664 431.4Z" fill="#e0e0e0" stroke="none" stroke-width="1" />
<path d="M664 433 L668 434.8 L672 433 M664 434.6 L668 436.4 L672 434.6" fill="none" stroke="#e0e0e0" stroke-width="0.8" />
<rect x="697.2" y="429.8" width="6.4" height="6.2" fill="#f0f0f0" rx="0.6" />
<circle cx="700.4" cy="432.9" r="1.7" fill="#222" />
<circle cx="710.4" cy="432.9" r="2.9" fill="#f0f0f0" />
<path d="M708.4 434.9 A2.9 2.9 0 0 0 712.4 430.9Z" fill="#222" stroke="none" stroke-width="1" />
<text x="719.2" y="435" font-family="Liberation Serif, serif" font-style="italic" font-weight="bold" font-size="6.4" fill="#f0f0f0" text-anchor="middle">fx</text>
<path d="M726.4 430 H731 L729.4 432.9 L731 435.9 H726.4 L728 432.9Z" fill="#f0f0f0" stroke="none" stroke-width="1" />
<line x1="726" y1="429.9" x2="731.4" y2="429.9" stroke="#f0f0f0" stroke-width="0.9" />
<line x1="726" y1="436" x2="731.4" y2="436" stroke="#f0f0f0" stroke-width="0.9" />
<path d="M747.6 430.6 H750 L750.6 431.4 H753.2 V435.6 H747.6Z" fill="#8e8e8e" stroke="none" stroke-width="1" />
<path d="M757.2 429.8 H760.8 L762.4 431.4 V436.2 H757.2Z" fill="#8e8e8e" stroke="#b0b0b0" stroke-width="0.4" />
<rect x="768" y="431.2" width="4" height="5" fill="#8e8e8e" rx="0.5" />
<rect x="767.4" y="430" width="5.2" height="0.9" fill="#8e8e8e" rx="0" />
<rect x="769.2" y="429.2" width="1.6" height="0.9" fill="#8e8e8e" rx="0" />
<rect x="661.0" y="437.8" width="115" height="10.2" fill="#313131" rx="0" />
<rect x="664.4" y="441.3" width="1.6" height="3.2" fill="#3d3d3d" rx="0" />
<text x="671" y="444.6" font-size="4.67" fill="#9a9a9a" text-anchor="start" textLength="20" lengthAdjust="spacingAndGlyphs" >Navigator</text>
<rect x="692.4" y="438.40000000000003" width="26.2" height="9.6" fill="#414141" rx="1" />
<text x="694" y="444.6" font-size="5.09" fill="#f4f4f4" text-anchor="start" textLength="23" lengthAdjust="spacingAndGlyphs"  stroke="#f4f4f4" stroke-width="0.22">Transform</text>
<text x="720" y="444.6" font-size="4.5" fill="#9a9a9a" text-anchor="start" textLength="14" lengthAdjust="spacingAndGlyphs" >History</text>
<text x="738" y="444.6" font-size="4.73" fill="#9a9a9a" text-anchor="start" textLength="20" lengthAdjust="spacingAndGlyphs" >Channels</text>
<rect x="661.3" y="448" width="114.7" height="43.7" fill="#424242" rx="0" />
<rect x="668.9" y="456.7" width="16.6" height="16.6" fill="#6e6e6e" rx="0" stroke="#4d4d4d" stroke-width="1.4" stroke-dasharray="2.2 1.4"/>
<text x="695.6" y="458.59999999999997" font-size="4.4" fill="#d0d0d0" text-anchor="middle"  stroke="#d0d0d0" stroke-width="0.22">X:</text>
<rect x="698.6" y="453.2" width="26.2" height="7.2" fill="#3e3e3e" rx="1" />
<text x="700.2" y="458.59999999999997" font-size="4.4" fill="#6e6e6e" text-anchor="start" >0 px</text>
<text x="731.4" y="458.59999999999997" font-size="4.4" fill="#d0d0d0" text-anchor="middle"  stroke="#d0d0d0" stroke-width="0.22">W:</text>
<rect x="735.4" y="453.2" width="26.2" height="7.2" fill="#3e3e3e" rx="1" />
<text x="737.0" y="458.59999999999997" font-size="4.4" fill="#6e6e6e" text-anchor="start" >0 px</text>
<text x="695.6" y="468.2" font-size="4.4" fill="#d0d0d0" text-anchor="middle"  stroke="#d0d0d0" stroke-width="0.22">Y:</text>
<rect x="698.6" y="462.8" width="26.2" height="7.2" fill="#3e3e3e" rx="1" />
<text x="700.2" y="468.2" font-size="4.4" fill="#6e6e6e" text-anchor="start" >0 px</text>
<text x="731.4" y="468.2" font-size="4.4" fill="#d0d0d0" text-anchor="middle"  stroke="#d0d0d0" stroke-width="0.22">H:</text>
<rect x="735.4" y="462.8" width="26.2" height="7.2" fill="#3e3e3e" rx="1" />
<text x="737.0" y="468.2" font-size="4.4" fill="#6e6e6e" text-anchor="start" >0 px</text>
<text x="695.6" y="481.59999999999997" font-size="4.4" fill="#d0d0d0" text-anchor="middle"  stroke="#d0d0d0" stroke-width="0.22">R:</text>
<rect x="698.6" y="476.2" width="26.2" height="7.2" fill="#3e3e3e" rx="1" />
<text x="700.2" y="481.59999999999997" font-size="4.4" fill="#6e6e6e" text-anchor="start" >0 °</text>
<path d="M720.2 479.2 L722.4 479.2 L721.3000000000001 480.7Z" fill="#9a9a9a" stroke="none" stroke-width="1" />
<text x="731.4" y="481.59999999999997" font-size="4.4" fill="#d0d0d0" text-anchor="middle"  stroke="#d0d0d0" stroke-width="0.22">S:</text>
<rect x="735.4" y="476.2" width="26.2" height="7.2" fill="#3e3e3e" rx="1" />
<text x="737.0" y="481.59999999999997" font-size="4.4" fill="#6e6e6e" text-anchor="start" >0 °</text>
<path d="M757.0 479.2 L759.1999999999999 479.2 L758.1 480.7Z" fill="#9a9a9a" stroke="none" stroke-width="1" />
<rect x="766.2" y="458.4" width="1.8" height="2.6" fill="none" rx="0.9" stroke="#a8a8a8" stroke-width="0.6"/>
<rect x="766.2" y="462" width="1.8" height="2.6" fill="none" rx="0.9" stroke="#a8a8a8" stroke-width="0.6"/>
<line x1="767.1" y1="460" x2="767.1" y2="463" stroke="#a8a8a8" stroke-width="0.6" />
<text x="32.6" y="497.6" font-size="4.6" fill="#c8c8c8" textLength="233" lengthAdjust="spacingAndGlyphs"><tspan font-weight="bold" fill="#f0f0f0">Click</tspan> to zoom in about a point. <tspan font-weight="bold" fill="#f0f0f0">Click+⌥</tspan> to zoom out about a point. <tspan font-weight="bold" fill="#f0f0f0">Drag</tspan> an area and release to zoom the view.</text></svg>
</div></body></html>
